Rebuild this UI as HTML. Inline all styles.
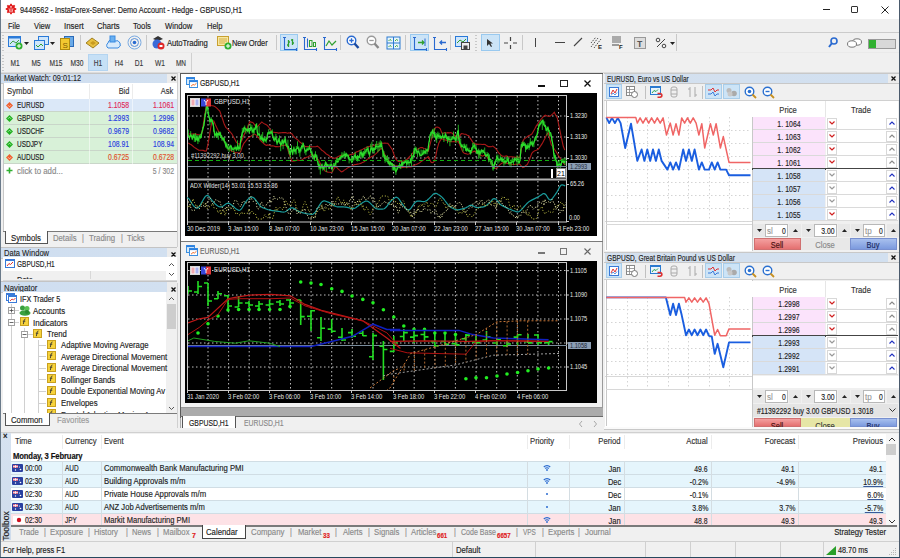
<!DOCTYPE html><html><head><meta charset="utf-8"><style>
*{margin:0;padding:0;box-sizing:border-box}
html,body{width:900px;height:558px;overflow:hidden;background:#f0f0f0;font-family:"Liberation Sans",sans-serif;font-size:8.5px;color:#1e1e1e}
.a{position:absolute}
.t{position:absolute;white-space:nowrap;line-height:10px;-webkit-text-stroke:0.15px currentColor}
svg{position:absolute;overflow:visible}
</style></head><body><div class="a" style="left:0px;top:0px;width:900px;height:19px;background:#fff"></div>
<svg style="left:6px;top:4px" width="10" height="10" viewBox="0 0 10 10"><circle cx="5" cy="5" r="3.9" fill="#e01818"/><rect x="4.1" y="-0.2" width="1.8" height="2.6" fill="#e01818" transform="rotate(0 5 5)"/><rect x="4.1" y="-0.2" width="1.8" height="2.6" fill="#e01818" transform="rotate(45 5 5)"/><rect x="4.1" y="-0.2" width="1.8" height="2.6" fill="#e01818" transform="rotate(90 5 5)"/><rect x="4.1" y="-0.2" width="1.8" height="2.6" fill="#e01818" transform="rotate(135 5 5)"/><rect x="4.1" y="-0.2" width="1.8" height="2.6" fill="#e01818" transform="rotate(180 5 5)"/><rect x="4.1" y="-0.2" width="1.8" height="2.6" fill="#e01818" transform="rotate(225 5 5)"/><rect x="4.1" y="-0.2" width="1.8" height="2.6" fill="#e01818" transform="rotate(270 5 5)"/><rect x="4.1" y="-0.2" width="1.8" height="2.6" fill="#e01818" transform="rotate(315 5 5)"/><rect x="4.3" y="2.2" width="1.4" height="1.4" fill="#fff"/><path d="M3 4.3L3.9 8M7 4.3L6.1 8M5 4.3V8.5" stroke="#ffd8d8" stroke-width="0.8"/></svg>
<div class="t" style="left:20px;top:5px;font-size:8.50px;color:#222;transform:scaleX(0.861);transform-origin:left">9449562 - InstaForex-Server: Demo Account - Hedge - GBPUSD,H1</div>
<div class="a" style="left:823px;top:9px;width:7px;height:1px;background:#222"></div>
<div class="a" style="left:851px;top:6px;width:7px;height:7px;border:1px solid #333;border-radius:1px"></div>
<svg style="left:881px;top:6px" width="8" height="8"><path d="M0.5 0.5L7.5 7.5M7.5 0.5L0.5 7.5" stroke="#222" stroke-width="1"/></svg>
<div class="a" style="left:0px;top:19px;width:900px;height:13px;background:#f0f0f0"></div>
<div class="t" style="left:8px;top:21px;font-size:8.50px;color:#222;transform:scaleX(0.878);transform-origin:left">File</div>
<div class="t" style="left:34px;top:21px;font-size:8.50px;color:#222;transform:scaleX(0.892);transform-origin:left">View</div>
<div class="t" style="left:64px;top:21px;font-size:8.50px;color:#222;transform:scaleX(0.929);transform-origin:left">Insert</div>
<div class="t" style="left:97px;top:21px;font-size:8.50px;color:#222;transform:scaleX(0.903);transform-origin:left">Charts</div>
<div class="t" style="left:133px;top:21px;font-size:8.50px;color:#222;transform:scaleX(0.903);transform-origin:left">Tools</div>
<div class="t" style="left:165px;top:21px;font-size:8.50px;color:#222;transform:scaleX(0.900);transform-origin:left">Window</div>
<div class="t" style="left:207px;top:21px;font-size:8.50px;color:#222;transform:scaleX(0.883);transform-origin:left">Help</div>
<div class="a" style="left:0px;top:32px;width:900px;height:1px;background:#cbcbcb"></div>
<div class="a" style="left:0px;top:33px;width:900px;height:19px;background:#f0f0f0"></div>
<div class="a" style="left:0px;top:52px;width:900px;height:1px;background:#eaeaea"></div>
<div class="a" style="left:0px;top:53px;width:900px;height:19px;background:#f0f0f0"></div>
<div class="a" style="left:88px;top:54px;width:20px;height:17px;background:#c6e0f6;border:1px solid #b4d4f0"></div>
<div class="t" style="left:-85.0px;width:200px;text-align:center;top:58px;font-size:8.50px;color:#3a3a3a;transform:scaleX(0.776);transform-origin:center">M1</div>
<div class="t" style="left:-64.3px;width:200px;text-align:center;top:58px;font-size:8.50px;color:#3a3a3a;transform:scaleX(0.776);transform-origin:center">M5</div>
<div class="t" style="left:-43.6px;width:200px;text-align:center;top:58px;font-size:8.50px;color:#3a3a3a;transform:scaleX(0.783);transform-origin:center">M15</div>
<div class="t" style="left:-22.900000000000006px;width:200px;text-align:center;top:58px;font-size:8.50px;color:#3a3a3a;transform:scaleX(0.783);transform-origin:center">M30</div>
<div class="t" style="left:-2.200000000000003px;width:200px;text-align:center;top:58px;font-size:8.50px;color:#3a3a3a;transform:scaleX(0.777);transform-origin:center">H1</div>
<div class="t" style="left:18.5px;width:200px;text-align:center;top:58px;font-size:8.50px;color:#3a3a3a;transform:scaleX(0.777);transform-origin:center">H4</div>
<div class="t" style="left:39.19999999999999px;width:200px;text-align:center;top:58px;font-size:8.50px;color:#3a3a3a;transform:scaleX(0.777);transform-origin:center">D1</div>
<div class="t" style="left:59.900000000000006px;width:200px;text-align:center;top:58px;font-size:8.50px;color:#3a3a3a;transform:scaleX(0.775);transform-origin:center">W1</div>
<div class="t" style="left:80.6px;width:200px;text-align:center;top:58px;font-size:8.50px;color:#3a3a3a;transform:scaleX(0.760);transform-origin:center">MN</div>
<div class="a" style="left:191px;top:53px;width:1px;height:19px;background:#d0d0d0"></div>
<div class="a" style="left:0px;top:72px;width:900px;height:1px;background:#dcdcdc"></div>
<div class="a" style="left:0px;top:0px;width:1px;height:558px;background:#6d7c8c"></div>
<div class="a" style="left:899px;top:0px;width:1px;height:558px;background:#6d7c8c"></div>
<div class="a" style="left:0px;top:557px;width:900px;height:1px;background:#2f6f7f"></div>
<div class="a" style="left:1px;top:73px;width:176px;height:1px;background:#c4c4c4"></div>
<div class="a" style="left:1px;top:74px;width:166px;height:9px;background:linear-gradient(90deg,#cfdef0,#d2e0f0)"></div>
<div class="a" style="left:167px;top:74px;width:10px;height:9px;background:#ececec"></div>
<div class="a" style="left:1px;top:83px;width:176px;height:1px;background:#c8c8c8"></div>
<div class="t" style="left:4px;top:73px;font-size:8.50px;color:#222;-webkit-text-stroke:0.1px #222;transform:scaleX(0.858);transform-origin:left">Market Watch: 09:01:12</div>
<svg style="left:171px;top:76px" width="5" height="5"><path d="M0.5 0.5L4.5 4.5M4.5 0.5L0.5 4.5" stroke="#111" stroke-width="1.3"/></svg>
<div class="a" style="left:3px;top:83px;width:174px;height:148px;background:#fff;border-left:1px solid #c8c8c8"></div>
<div class="t" style="left:7px;top:86px;font-size:8.50px;color:#333;transform:scaleX(0.912);transform-origin:left">Symbol</div>
<div class="t" style="right:771px;top:86px;font-size:8.50px;color:#333;transform:scaleX(0.862);transform-origin:right">Bid</div>
<div class="t" style="right:727px;top:86px;font-size:8.50px;color:#333;transform:scaleX(0.874);transform-origin:right">Ask</div>
<div class="a" style="left:89px;top:84px;width:1px;height:15px;background:#ececec"></div>
<div class="a" style="left:132px;top:84px;width:1px;height:15px;background:#ececec"></div>
<div class="a" style="left:4px;top:99px;width:173px;height:13px;background:#dbe8f8;border-bottom:1px solid #c9d6c9"></div>
<div class="a" style="left:89px;top:99px;width:1px;height:13px;background:rgba(255,255,255,0.5)"></div>
<div class="a" style="left:132px;top:99px;width:1px;height:13px;background:rgba(255,255,255,0.5)"></div>
<svg style="left:6px;top:102px" width="7" height="7"><path d="M3.5 0L7 3.5L3.5 7L0 3.5Z" fill="#f06030"/><path d="M2 3.2L3.5 4.8L5 3.2" stroke="#fbd0c0" stroke-width="0.8" fill="none"/></svg>
<div class="t" style="left:17px;top:100px;font-size:8.50px;color:#222;transform:scaleX(0.760);transform-origin:left">EURUSD</div>
<div class="t" style="right:771px;top:100px;font-size:8.50px;color:#e02858;transform:scaleX(0.805);transform-origin:right">1.1058</div>
<div class="t" style="right:726px;top:100px;font-size:8.50px;color:#e02858;transform:scaleX(0.805);transform-origin:right">1.1061</div>
<div class="a" style="left:4px;top:112px;width:173px;height:13px;background:#d8f1d8;border-bottom:1px solid #c9d6c9"></div>
<div class="a" style="left:89px;top:112px;width:1px;height:13px;background:rgba(255,255,255,0.5)"></div>
<div class="a" style="left:132px;top:112px;width:1px;height:13px;background:rgba(255,255,255,0.5)"></div>
<svg style="left:6px;top:115px" width="7" height="7"><path d="M3.5 0L7 3.5L3.5 7L0 3.5Z" fill="#20b020"/><path d="M2 3.8L3.5 2.2L5 3.8" stroke="#c0f0c0" stroke-width="0.8" fill="none"/></svg>
<div class="t" style="left:17px;top:113px;font-size:8.50px;color:#222;transform:scaleX(0.760);transform-origin:left">GBPUSD</div>
<div class="t" style="right:771px;top:113px;font-size:8.50px;color:#2a3ee0;transform:scaleX(0.805);transform-origin:right">1.2993</div>
<div class="t" style="right:726px;top:113px;font-size:8.50px;color:#2a3ee0;transform:scaleX(0.805);transform-origin:right">1.2996</div>
<div class="a" style="left:4px;top:125px;width:173px;height:13px;background:#d8f1d8;border-bottom:1px solid #c9d6c9"></div>
<div class="a" style="left:89px;top:125px;width:1px;height:13px;background:rgba(255,255,255,0.5)"></div>
<div class="a" style="left:132px;top:125px;width:1px;height:13px;background:rgba(255,255,255,0.5)"></div>
<svg style="left:6px;top:128px" width="7" height="7"><path d="M3.5 0L7 3.5L3.5 7L0 3.5Z" fill="#20b020"/><path d="M2 3.8L3.5 2.2L5 3.8" stroke="#c0f0c0" stroke-width="0.8" fill="none"/></svg>
<div class="t" style="left:17px;top:126px;font-size:8.50px;color:#222;transform:scaleX(0.760);transform-origin:left">USDCHF</div>
<div class="t" style="right:771px;top:126px;font-size:8.50px;color:#2a3ee0;transform:scaleX(0.805);transform-origin:right">0.9679</div>
<div class="t" style="right:726px;top:126px;font-size:8.50px;color:#2a3ee0;transform:scaleX(0.805);transform-origin:right">0.9682</div>
<div class="a" style="left:4px;top:138px;width:173px;height:13px;background:#d8f1d8;border-bottom:1px solid #c9d6c9"></div>
<div class="a" style="left:89px;top:138px;width:1px;height:13px;background:rgba(255,255,255,0.5)"></div>
<div class="a" style="left:132px;top:138px;width:1px;height:13px;background:rgba(255,255,255,0.5)"></div>
<svg style="left:6px;top:141px" width="7" height="7"><path d="M3.5 0L7 3.5L3.5 7L0 3.5Z" fill="#20b020"/><path d="M2 3.8L3.5 2.2L5 3.8" stroke="#c0f0c0" stroke-width="0.8" fill="none"/></svg>
<div class="t" style="left:17px;top:139px;font-size:8.50px;color:#222;transform:scaleX(0.760);transform-origin:left">USDJPY</div>
<div class="t" style="right:771px;top:139px;font-size:8.50px;color:#2a3ee0;transform:scaleX(0.805);transform-origin:right">108.91</div>
<div class="t" style="right:726px;top:139px;font-size:8.50px;color:#2a3ee0;transform:scaleX(0.805);transform-origin:right">108.94</div>
<div class="a" style="left:4px;top:151px;width:173px;height:13px;background:#d8f1d8;border-bottom:1px solid #c9d6c9"></div>
<div class="a" style="left:89px;top:151px;width:1px;height:13px;background:rgba(255,255,255,0.5)"></div>
<div class="a" style="left:132px;top:151px;width:1px;height:13px;background:rgba(255,255,255,0.5)"></div>
<svg style="left:6px;top:154px" width="7" height="7"><path d="M3.5 0L7 3.5L3.5 7L0 3.5Z" fill="#f06030"/><path d="M2 3.2L3.5 4.8L5 3.2" stroke="#fbd0c0" stroke-width="0.8" fill="none"/></svg>
<div class="t" style="left:17px;top:152px;font-size:8.50px;color:#222;transform:scaleX(0.760);transform-origin:left">AUDUSD</div>
<div class="t" style="right:771px;top:152px;font-size:8.50px;color:#e0502a;transform:scaleX(0.805);transform-origin:right">0.6725</div>
<div class="t" style="right:726px;top:152px;font-size:8.50px;color:#e0502a;transform:scaleX(0.805);transform-origin:right">0.6728</div>
<svg style="left:6px;top:167px" width="7" height="7"><path d="M3.5 0.5V6.5M0.5 3.5H6.5" stroke="#30b030" stroke-width="1.6"/></svg>
<div class="t" style="left:17px;top:166px;font-size:8.50px;color:#8a8a8a;transform:scaleX(0.926);transform-origin:left">click to add...</div>
<div class="t" style="right:726px;top:166px;font-size:8.50px;color:#8a8a8a;transform:scaleX(0.814);transform-origin:right">5 / 302</div>
<div class="a" style="left:3px;top:231px;width:174px;height:16px;background:#f0f0f0"></div>
<div class="a" style="left:3px;top:231px;width:174px;height:1px;background:#7a7a7a"></div>
<div class="a" style="left:5px;top:231px;width:43px;height:13px;background:#fff;border:1px solid #555;border-top:none"></div>
<div class="t" style="left:11px;top:233px;font-size:8.50px;color:#222;transform:scaleX(0.917);transform-origin:left">Symbols</div>
<div class="t" style="left:53px;top:233px;font-size:8.50px;color:#8a8a8a;transform:scaleX(0.905);transform-origin:left">Details</div>
<div class="t" style="left:82px;top:233px;font-size:8.50px;color:#888;transform:scaleX(0.850);transform-origin:left">|</div>
<div class="t" style="left:89px;top:233px;font-size:8.50px;color:#8a8a8a;transform:scaleX(0.916);transform-origin:left">Trading</div>
<div class="t" style="left:121px;top:233px;font-size:8.50px;color:#888;transform:scaleX(0.850);transform-origin:left">|</div>
<div class="t" style="left:127px;top:233px;font-size:8.50px;color:#8a8a8a;transform:scaleX(0.900);transform-origin:left">Ticks</div>
<div class="a" style="left:177px;top:73px;width:1px;height:174px;background:#d0d0d0"></div>
<div class="a" style="left:1px;top:247px;width:176px;height:1px;background:#c4c4c4"></div>
<div class="a" style="left:1px;top:248px;width:166px;height:10px;background:linear-gradient(90deg,#cfdef0,#d2e0f0)"></div>
<div class="a" style="left:167px;top:248px;width:10px;height:10px;background:#ececec"></div>
<div class="a" style="left:1px;top:258px;width:176px;height:1px;background:#c8c8c8"></div>
<div class="t" style="left:4px;top:248px;font-size:8.50px;color:#222;-webkit-text-stroke:0.1px #222;transform:scaleX(0.892);transform-origin:left">Data Window</div>
<svg style="left:171px;top:252px" width="5" height="5"><path d="M0.5 0.5L4.5 4.5M4.5 0.5L0.5 4.5" stroke="#111" stroke-width="1.3"/></svg>
<div class="a" style="left:3px;top:257px;width:174px;height:23px;background:#fff"></div>
<svg style="left:5px;top:259px" width="10" height="9"><rect x="0.5" y="0.5" width="9" height="8" fill="#fff" stroke="#3a7ad8"/><rect x="0.5" y="0.5" width="9" height="1.5" fill="#3a7ad8"/><path d="M2 7L4 4.5L5.5 5.5L8 3" stroke="#e03030" stroke-width="1" fill="none"/></svg>
<div class="t" style="left:17px;top:259px;font-size:8.50px;color:#222;transform:scaleX(0.768);transform-origin:left">GBPUSD,H1</div>
<div class="a" style="left:3px;top:271px;width:163px;height:9px;background:#f0f0f0"></div>
<div class="a" style="left:90px;top:271px;width:1px;height:9px;background:#d8d8d8"></div>
<div class="t" style="left:17px;top:275px;font-size:8.50px;color:#222;transform:scaleX(0.885);transform-origin:left">Date</div>
<div class="a" style="left:3px;top:279px;width:163px;height:4px;background:#f0f0f0"></div>
<div class="a" style="left:3px;top:280px;width:174px;height:1px;background:#d8d8d8"></div>
<svg style="left:168px;top:262px" width="7" height="16"><path d="M1 4L3.5 1.5L6 4M1 11L3.5 13.5L6 11" stroke="#444" stroke-width="0.9" fill="none"/></svg>
<div class="a" style="left:1px;top:281px;width:176px;height:1px;background:#c4c4c4"></div>
<div class="a" style="left:1px;top:282px;width:166px;height:10px;background:linear-gradient(90deg,#cfdef0,#d2e0f0)"></div>
<div class="a" style="left:167px;top:282px;width:10px;height:10px;background:#ececec"></div>
<div class="a" style="left:1px;top:292px;width:176px;height:1px;background:#c8c8c8"></div>
<div class="t" style="left:4px;top:283px;font-size:8.50px;color:#222;-webkit-text-stroke:0.1px #222;transform:scaleX(0.918);transform-origin:left">Navigator</div>
<svg style="left:171px;top:287px" width="5" height="5"><path d="M0.5 0.5L4.5 4.5M4.5 0.5L0.5 4.5" stroke="#111" stroke-width="1.3"/></svg>
<div class="a" style="left:3px;top:292px;width:174px;height:121px;background:#fff"></div>
<div class="a" style="left:166px;top:292px;width:11px;height:121px;background:#f0f0f0"></div>
<div class="a" style="left:167px;top:304px;width:9px;height:25px;background:#cdcdcd"></div>
<svg style="left:168px;top:296px" width="7" height="5"><path d="M1 4L3.5 1.5L6 4" stroke="#444" stroke-width="0.9" fill="none"/></svg>
<svg style="left:168px;top:406px" width="7" height="5"><path d="M1 1L3.5 3.5L6 1" stroke="#444" stroke-width="0.9" fill="none"/></svg>
<div class="a" style="left:11px;top:304px;width:1px;height:109px;background:#d0d0d0"></div>
<div class="a" style="left:24px;top:328px;width:1px;height:85px;background:#d0d0d0"></div>
<div class="a" style="left:38px;top:340px;width:1px;height:73px;background:#d0d0d0"></div>
<svg style="left:6px;top:293px" width="11" height="10"><rect x="0.5" y="0.5" width="8" height="7" fill="#fff" stroke="#3a7ad8"/><rect x="0.5" y="0.5" width="8" height="1.5" fill="#3a7ad8"/><rect x="2.5" y="2.5" width="8" height="7" fill="#fff" stroke="#3a7ad8"/><rect x="2.5" y="2.5" width="8" height="1.5" fill="#3a7ad8"/><path d="M4 8L6 6L7.5 7L9.5 5" stroke="#e03030" stroke-width="0.9" fill="none"/></svg>
<div class="t" style="left:20px;top:294px;font-size:8.50px;color:#222;transform:scaleX(0.852);transform-origin:left">IFX Trader 5</div>
<div class="a" style="left:8px;top:307px;width:7px;height:7px;background:#fff;border:1px solid #a0a0a0"></div>
<svg style="left:8px;top:307px" width="7" height="7"><path d="M1.5 3.5H5.5M3.5 1.5V5.5" stroke="#444" stroke-width="0.8"/></svg>
<div class="a" style="left:15px;top:310px;width:4px;height:1px;background:#d0d0d0"></div>
<svg style="left:19px;top:305px" width="12" height="11"><circle cx="3.5" cy="3" r="2.5" fill="#3aa040"/><circle cx="8" cy="3.5" r="2.5" fill="#5ac050"/><ellipse cx="6" cy="8" rx="5.5" ry="2.8" fill="#3aa040"/><circle cx="8" cy="7" r="2" fill="#2a8a30"/></svg>
<div class="t" style="left:33px;top:306px;font-size:8.50px;color:#222;transform:scaleX(0.919);transform-origin:left">Accounts</div>
<div class="a" style="left:8px;top:319px;width:7px;height:7px;background:#fff;border:1px solid #a0a0a0"></div>
<svg style="left:8px;top:319px" width="7" height="7"><path d="M1.5 3.5H5.5" stroke="#444" stroke-width="0.8"/></svg>
<div class="a" style="left:15px;top:322px;width:4px;height:1px;background:#d0d0d0"></div>
<svg style="left:20px;top:317px" width="9" height="9"><rect x="0.5" y="0.5" width="8" height="8" fill="#f7d33c" stroke="#c8a020"/><path d="M5.5 2C4.5 2 4.3 2.6 4.1 3.5L3.3 7.2M2.8 4.2H5.3" stroke="#333" stroke-width="0.9" fill="none"/></svg>
<div class="t" style="left:33px;top:318px;font-size:8.50px;color:#222;transform:scaleX(0.938);transform-origin:left">Indicators</div>
<div class="a" style="left:21px;top:331px;width:7px;height:7px;background:#fff;border:1px solid #a0a0a0"></div>
<svg style="left:21px;top:331px" width="7" height="7"><path d="M1.5 3.5H5.5" stroke="#444" stroke-width="0.8"/></svg>
<div class="a" style="left:28px;top:334px;width:5px;height:1px;background:#d0d0d0"></div>
<svg style="left:33px;top:329px" width="9" height="9"><rect x="0.5" y="0.5" width="8" height="8" fill="#f7d33c" stroke="#c8a020"/><path d="M5.5 2C4.5 2 4.3 2.6 4.1 3.5L3.3 7.2M2.8 4.2H5.3" stroke="#333" stroke-width="0.9" fill="none"/></svg>
<div class="t" style="left:47px;top:329px;font-size:8.50px;color:#222;transform:scaleX(0.906);transform-origin:left">Trend</div>
<div class="a" style="left:38px;top:345px;width:8px;height:1px;background:#d0d0d0"></div>
<svg style="left:47px;top:340px" width="9" height="9"><rect x="0.5" y="0.5" width="8" height="8" fill="#f7d33c" stroke="#c8a020"/><path d="M5.5 2C4.5 2 4.3 2.6 4.1 3.5L3.3 7.2M2.8 4.2H5.3" stroke="#333" stroke-width="0.9" fill="none"/></svg>
<div class="t" style="left:61px;top:340px;font-size:8.50px;color:#222;transform:scaleX(0.909);transform-origin:left">Adaptive Moving Average</div>
<div class="a" style="left:38px;top:356px;width:8px;height:1px;background:#d0d0d0"></div>
<svg style="left:47px;top:351px" width="9" height="9"><rect x="0.5" y="0.5" width="8" height="8" fill="#f7d33c" stroke="#c8a020"/><path d="M5.5 2C4.5 2 4.3 2.6 4.1 3.5L3.3 7.2M2.8 4.2H5.3" stroke="#333" stroke-width="0.9" fill="none"/></svg>
<div class="t" style="left:61px;top:352px;font-size:8.50px;color:#222;transform:scaleX(0.915);transform-origin:left">Average Directional Movement</div>
<div class="a" style="left:38px;top:368px;width:8px;height:1px;background:#d0d0d0"></div>
<svg style="left:47px;top:363px" width="9" height="9"><rect x="0.5" y="0.5" width="8" height="8" fill="#f7d33c" stroke="#c8a020"/><path d="M5.5 2C4.5 2 4.3 2.6 4.1 3.5L3.3 7.2M2.8 4.2H5.3" stroke="#333" stroke-width="0.9" fill="none"/></svg>
<div class="t" style="left:61px;top:363px;font-size:8.50px;color:#222;transform:scaleX(0.915);transform-origin:left">Average Directional Movement</div>
<div class="a" style="left:38px;top:379px;width:8px;height:1px;background:#d0d0d0"></div>
<svg style="left:47px;top:374px" width="9" height="9"><rect x="0.5" y="0.5" width="8" height="8" fill="#f7d33c" stroke="#c8a020"/><path d="M5.5 2C4.5 2 4.3 2.6 4.1 3.5L3.3 7.2M2.8 4.2H5.3" stroke="#333" stroke-width="0.9" fill="none"/></svg>
<div class="t" style="left:61px;top:375px;font-size:8.50px;color:#222;transform:scaleX(0.910);transform-origin:left">Bollinger Bands</div>
<div class="a" style="left:38px;top:391px;width:8px;height:1px;background:#d0d0d0"></div>
<svg style="left:47px;top:386px" width="9" height="9"><rect x="0.5" y="0.5" width="8" height="8" fill="#f7d33c" stroke="#c8a020"/><path d="M5.5 2C4.5 2 4.3 2.6 4.1 3.5L3.3 7.2M2.8 4.2H5.3" stroke="#333" stroke-width="0.9" fill="none"/></svg>
<div class="t" style="left:61px;top:386px;font-size:8.50px;color:#222;transform:scaleX(0.904);transform-origin:left">Double Exponential Moving Av</div>
<div class="a" style="left:38px;top:403px;width:8px;height:1px;background:#d0d0d0"></div>
<svg style="left:47px;top:398px" width="9" height="9"><rect x="0.5" y="0.5" width="8" height="8" fill="#f7d33c" stroke="#c8a020"/><path d="M5.5 2C4.5 2 4.3 2.6 4.1 3.5L3.3 7.2M2.8 4.2H5.3" stroke="#333" stroke-width="0.9" fill="none"/></svg>
<div class="t" style="left:61px;top:398px;font-size:8.50px;color:#222;transform:scaleX(0.923);transform-origin:left">Envelopes</div>
<div class="a" style="left:38px;top:414px;width:8px;height:1px;background:#d0d0d0"></div>
<svg style="left:47px;top:409px" width="9" height="9"><rect x="0.5" y="0.5" width="8" height="8" fill="#f7d33c" stroke="#c8a020"/><path d="M5.5 2C4.5 2 4.3 2.6 4.1 3.5L3.3 7.2M2.8 4.2H5.3" stroke="#333" stroke-width="0.9" fill="none"/></svg>
<div class="t" style="left:61px;top:410px;font-size:8.50px;color:#222;transform:scaleX(0.900);transform-origin:left">Fractal Adaptive Moving Av</div>
<div class="a" style="left:3px;top:413px;width:163px;height:0px;"></div>
<div class="a" style="left:3px;top:413px;width:174px;height:15px;background:#f0f0f0"></div>
<div class="a" style="left:3px;top:413px;width:174px;height:1px;background:#7a7a7a"></div>
<div class="a" style="left:5px;top:413px;width:45px;height:13px;background:#fff;border:1px solid #555;border-top:none"></div>
<div class="t" style="left:11px;top:415px;font-size:8.50px;color:#222;transform:scaleX(0.916);transform-origin:left">Common</div>
<div class="t" style="left:57px;top:415px;font-size:8.50px;color:#9a9a9a;transform:scaleX(0.922);transform-origin:left">Favorites</div>
<div class="a" style="left:177px;top:283px;width:1px;height:145px;background:#d0d0d0"></div>
<div class="a" style="left:180px;top:73px;width:423px;height:358px;background:#ababab"></div>
<div class="a" style="left:180px;top:73px;width:423px;height:1px;background:#5a5a5a"></div>
<div class="a" style="left:180px;top:73px;width:1px;height:345px;background:#5a5a5a"></div>
<div class="a" style="left:181px;top:74px;width:421px;height:167px;background:#fff"></div>
<div class="a" style="left:602px;top:74px;width:1px;height:168px;background:#9a9a9a"></div>
<div class="a" style="left:181px;top:241px;width:422px;height:1px;background:#7a7a7a"></div>
<svg style="left:186px;top:77px" width="12" height="11"><rect x="0.5" y="0.5" width="8" height="7" fill="#d8ecfb" stroke="#3c8fe0"/><rect x="0.5" y="0.5" width="8" height="1.6" fill="#2a7fe0"/><rect x="3.5" y="3.5" width="8" height="7" fill="#fff" stroke="#3c8fe0"/><rect x="3.5" y="3.5" width="8" height="1.6" fill="#2a7fe0"/><path d="M5 9.2L7 7.5L8.5 8L10.5 6.2" stroke="#f07030" stroke-width="1" fill="none"/></svg>
<div class="t" style="left:200px;top:78px;font-size:8.50px;color:#222;;transform:scaleX(0.807);transform-origin:left">GBPUSD,H1</div>
<div class="a" style="left:538px;top:85px;width:7px;height:2px;background:#111"></div>
<div class="a" style="left:560px;top:80px;width:8px;height:7px;border:1.2px solid #222"></div>
<svg style="left:584px;top:80px" width="7" height="7"><path d="M0.5 0.5L6.5 6.5M6.5 0.5L0.5 6.5" stroke="#111" stroke-width="1.3"/></svg>
<div class="a" style="left:185px;top:93px;width:412px;height:143px;background:#000"></div>
<div class="a" style="left:181px;top:242px;width:421px;height:166px;background:#f2f2f2"></div>
<div class="a" style="left:602px;top:242px;width:1px;height:166px;background:#9a9a9a"></div>
<div class="a" style="left:181px;top:407px;width:422px;height:1px;background:#9a9a9a"></div>
<svg style="left:186px;top:245px" width="12" height="11"><rect x="0.5" y="0.5" width="8" height="7" fill="#d8ecfb" stroke="#3c8fe0"/><rect x="0.5" y="0.5" width="8" height="1.6" fill="#2a7fe0"/><rect x="3.5" y="3.5" width="8" height="7" fill="#fff" stroke="#3c8fe0"/><rect x="3.5" y="3.5" width="8" height="1.6" fill="#2a7fe0"/><path d="M5 9.2L7 7.5L8.5 8L10.5 6.2" stroke="#f07030" stroke-width="1" fill="none"/></svg>
<div class="t" style="left:200px;top:246px;font-size:8.50px;color:#6a6a6a;;transform:scaleX(0.807);transform-origin:left">EURUSD,H1</div>
<div class="a" style="left:538px;top:252px;width:7px;height:1.5px;background:#777"></div>
<div class="a" style="left:560px;top:248px;width:7px;height:7px;border:1px solid #777"></div>
<svg style="left:584px;top:248px" width="7" height="7"><path d="M0.5 0.5L6.5 6.5M6.5 0.5L0.5 6.5" stroke="#666" stroke-width="1.1"/></svg>
<div class="a" style="left:185px;top:261px;width:412px;height:142px;background:#000"></div>
<div class="a" style="left:180px;top:416px;width:423px;height:1px;background:#6a6a6a"></div>
<div class="a" style="left:181px;top:417px;width:422px;height:14px;background:#f0f0f0"></div>
<div class="a" style="left:182px;top:416px;width:54px;height:13px;background:#fff;border:1px solid #555;border-top:none"></div>
<div class="t" style="left:189px;top:418px;font-size:8.50px;color:#222;;transform:scaleX(0.807);transform-origin:left">GBPUSD,H1</div>
<div class="t" style="left:244px;top:418px;font-size:8.50px;color:#8a8a8a;;transform:scaleX(0.807);transform-origin:left">EURUSD,H1</div>
<svg style="left:578px;top:420px" width="20" height="8"><path d="M4 1L1.5 4L4 7M16 1L18.5 4L16 7" stroke="#a8a8a8" stroke-width="1" fill="none"/></svg>
<div class="a" style="left:603px;top:73px;width:1px;height:358px;background:#f0f0f0"></div>
<svg style="left:0;top:0" width="900" height="558"><line x1="208.0" y1="96" x2="208.0" y2="178" stroke="#bfbfbf" stroke-width="1" stroke-dasharray="1.5,2.5"/><line x1="208.0" y1="181" x2="208.0" y2="222" stroke="#bfbfbf" stroke-width="1" stroke-dasharray="1.5,2.5"/><line x1="228.6" y1="96" x2="228.6" y2="178" stroke="#bfbfbf" stroke-width="1" stroke-dasharray="1.5,2.5"/><line x1="228.6" y1="181" x2="228.6" y2="222" stroke="#bfbfbf" stroke-width="1" stroke-dasharray="1.5,2.5"/><line x1="249.2" y1="96" x2="249.2" y2="178" stroke="#bfbfbf" stroke-width="1" stroke-dasharray="1.5,2.5"/><line x1="249.2" y1="181" x2="249.2" y2="222" stroke="#bfbfbf" stroke-width="1" stroke-dasharray="1.5,2.5"/><line x1="269.9" y1="96" x2="269.9" y2="178" stroke="#bfbfbf" stroke-width="1" stroke-dasharray="1.5,2.5"/><line x1="269.9" y1="181" x2="269.9" y2="222" stroke="#bfbfbf" stroke-width="1" stroke-dasharray="1.5,2.5"/><line x1="290.5" y1="96" x2="290.5" y2="178" stroke="#bfbfbf" stroke-width="1" stroke-dasharray="1.5,2.5"/><line x1="290.5" y1="181" x2="290.5" y2="222" stroke="#bfbfbf" stroke-width="1" stroke-dasharray="1.5,2.5"/><line x1="311.1" y1="96" x2="311.1" y2="178" stroke="#bfbfbf" stroke-width="1" stroke-dasharray="1.5,2.5"/><line x1="311.1" y1="181" x2="311.1" y2="222" stroke="#bfbfbf" stroke-width="1" stroke-dasharray="1.5,2.5"/><line x1="331.7" y1="96" x2="331.7" y2="178" stroke="#bfbfbf" stroke-width="1" stroke-dasharray="1.5,2.5"/><line x1="331.7" y1="181" x2="331.7" y2="222" stroke="#bfbfbf" stroke-width="1" stroke-dasharray="1.5,2.5"/><line x1="352.3" y1="96" x2="352.3" y2="178" stroke="#bfbfbf" stroke-width="1" stroke-dasharray="1.5,2.5"/><line x1="352.3" y1="181" x2="352.3" y2="222" stroke="#bfbfbf" stroke-width="1" stroke-dasharray="1.5,2.5"/><line x1="373.0" y1="96" x2="373.0" y2="178" stroke="#bfbfbf" stroke-width="1" stroke-dasharray="1.5,2.5"/><line x1="373.0" y1="181" x2="373.0" y2="222" stroke="#bfbfbf" stroke-width="1" stroke-dasharray="1.5,2.5"/><line x1="393.6" y1="96" x2="393.6" y2="178" stroke="#bfbfbf" stroke-width="1" stroke-dasharray="1.5,2.5"/><line x1="393.6" y1="181" x2="393.6" y2="222" stroke="#bfbfbf" stroke-width="1" stroke-dasharray="1.5,2.5"/><line x1="414.2" y1="96" x2="414.2" y2="178" stroke="#bfbfbf" stroke-width="1" stroke-dasharray="1.5,2.5"/><line x1="414.2" y1="181" x2="414.2" y2="222" stroke="#bfbfbf" stroke-width="1" stroke-dasharray="1.5,2.5"/><line x1="434.8" y1="96" x2="434.8" y2="178" stroke="#bfbfbf" stroke-width="1" stroke-dasharray="1.5,2.5"/><line x1="434.8" y1="181" x2="434.8" y2="222" stroke="#bfbfbf" stroke-width="1" stroke-dasharray="1.5,2.5"/><line x1="455.4" y1="96" x2="455.4" y2="178" stroke="#bfbfbf" stroke-width="1" stroke-dasharray="1.5,2.5"/><line x1="455.4" y1="181" x2="455.4" y2="222" stroke="#bfbfbf" stroke-width="1" stroke-dasharray="1.5,2.5"/><line x1="476.1" y1="96" x2="476.1" y2="178" stroke="#bfbfbf" stroke-width="1" stroke-dasharray="1.5,2.5"/><line x1="476.1" y1="181" x2="476.1" y2="222" stroke="#bfbfbf" stroke-width="1" stroke-dasharray="1.5,2.5"/><line x1="496.7" y1="96" x2="496.7" y2="178" stroke="#bfbfbf" stroke-width="1" stroke-dasharray="1.5,2.5"/><line x1="496.7" y1="181" x2="496.7" y2="222" stroke="#bfbfbf" stroke-width="1" stroke-dasharray="1.5,2.5"/><line x1="517.3" y1="96" x2="517.3" y2="178" stroke="#bfbfbf" stroke-width="1" stroke-dasharray="1.5,2.5"/><line x1="517.3" y1="181" x2="517.3" y2="222" stroke="#bfbfbf" stroke-width="1" stroke-dasharray="1.5,2.5"/><line x1="537.9" y1="96" x2="537.9" y2="178" stroke="#bfbfbf" stroke-width="1" stroke-dasharray="1.5,2.5"/><line x1="537.9" y1="181" x2="537.9" y2="222" stroke="#bfbfbf" stroke-width="1" stroke-dasharray="1.5,2.5"/><line x1="558.5" y1="96" x2="558.5" y2="178" stroke="#bfbfbf" stroke-width="1" stroke-dasharray="1.5,2.5"/><line x1="558.5" y1="181" x2="558.5" y2="222" stroke="#bfbfbf" stroke-width="1" stroke-dasharray="1.5,2.5"/><line x1="188" y1="116" x2="567" y2="116" stroke="#bfbfbf" stroke-width="1" stroke-dasharray="1.5,2.5"/><line x1="188" y1="137" x2="567" y2="137" stroke="#bfbfbf" stroke-width="1" stroke-dasharray="1.5,2.5"/><line x1="188" y1="158" x2="567" y2="158" stroke="#bfbfbf" stroke-width="1" stroke-dasharray="1.5,2.5"/><rect x="187.5" y="95.5" width="379" height="84" fill="none" stroke="#c8c8c8" stroke-width="1"/><rect x="187.5" y="179.5" width="379" height="42.5" fill="none" stroke="#c8c8c8" stroke-width="1"/><line x1="187" y1="179.5" x2="567" y2="179.5" stroke="#b0b0b0" stroke-width="2"/><path d="M188.3 133.8 L189.8 134.0 L191.3 134.0 L192.8 134.0 L194.3 133.9 L195.8 134.1 L197.3 134.5 L198.8 134.7 L200.3 135.0 L201.8 133.9 L203.3 124.3 L204.8 114.6 L206.3 106.5 L207.8 104.0 L209.3 104.8 L210.8 105.5 L212.3 105.7 L213.8 106.0 L215.3 106.9 L216.8 108.2 L218.3 109.7 L219.8 111.1 L221.3 115.4 L222.8 119.7 L224.3 124.3 L225.8 127.3 L227.3 128.6 L228.8 130.5 L230.3 132.0 L231.8 133.8 L233.3 136.5 L234.8 139.2 L236.3 142.2 L237.8 143.5 L239.3 144.4 L240.8 142.8 L242.3 139.2 L243.8 135.5 L245.3 131.9 L246.8 128.9 L248.3 125.1 L249.8 121.7 L251.3 122.1 L252.8 122.4 L254.3 124.3 L255.8 127.0 L257.3 126.9 L258.8 125.2 L260.3 123.5 L261.8 121.9 L263.3 123.1 L264.8 124.1 L266.3 124.7 L267.8 126.0 L269.3 128.0 L270.8 130.4 L272.3 132.1 L273.8 132.3 L275.3 132.5 L276.8 132.5 L278.3 133.1 L279.8 132.9 L281.3 132.8 L282.8 132.6 L284.3 132.5 L285.8 132.6 L287.3 133.2 L288.8 132.9 L290.3 133.0 L291.8 133.7 L293.3 135.9 L294.8 137.6 L296.3 138.8 L297.8 139.9 L299.3 141.7 L300.8 142.8 L302.3 143.8 L303.8 145.4 L305.3 146.6 L306.8 146.5 L308.3 146.5 L309.8 146.5 L311.3 146.9 L312.8 146.8 L314.3 146.7 L315.8 146.7 L317.3 146.2 L318.8 147.1 L320.3 148.7 L321.8 150.2 L323.3 151.1 L324.8 152.5 L326.3 154.0 L327.8 154.7 L329.3 155.9 L330.8 157.4 L332.3 157.7 L333.8 158.2 L335.3 158.1 L336.8 157.2 L338.3 156.5 L339.8 155.8 L341.3 155.0 L342.8 155.2 L344.3 155.1 L345.8 155.1 L347.3 155.6 L348.8 155.5 L350.3 154.6 L351.8 154.3 L353.3 154.1 L354.8 153.2 L356.3 152.1 L357.8 151.4 L359.3 150.7 L360.8 149.9 L362.3 149.6 L363.8 148.5 L365.3 148.1 L366.8 147.2 L368.3 146.6 L369.8 146.4 L371.3 146.2 L372.8 145.8 L374.3 145.2 L375.8 144.7 L377.3 144.3 L378.8 144.0 L380.3 143.4 L381.8 143.1 L383.3 143.2 L384.8 143.1 L386.3 143.3 L387.8 143.3 L389.3 145.3 L390.8 147.5 L392.3 149.6 L393.8 154.1 L395.3 158.3 L396.8 160.1 L398.3 161.4 L399.8 161.5 L401.3 161.9 L402.8 161.0 L404.3 160.9 L405.8 160.3 L407.3 159.0 L408.8 157.5 L410.3 155.9 L411.8 154.5 L413.3 152.3 L414.8 149.9 L416.3 149.7 L417.8 149.0 L419.3 148.2 L420.8 147.5 L422.3 147.6 L423.8 148.5 L425.3 148.8 L426.8 149.9 L428.3 151.3 L429.8 145.4 L431.3 139.9 L432.8 134.6 L434.3 129.1 L435.8 127.2 L437.3 127.0 L438.8 127.5 L440.3 128.8 L441.8 133.1 L443.3 133.3 L444.8 132.5 L446.3 133.0 L447.8 132.6 L449.3 132.9 L450.8 132.6 L452.3 133.3 L453.8 134.8 L455.3 135.8 L456.8 137.0 L458.3 138.3 L459.8 135.9 L461.3 133.6 L462.8 133.7 L464.3 134.2 L465.8 134.3 L467.3 135.2 L468.8 135.7 L470.3 138.4 L471.8 140.6 L473.3 143.1 L474.8 143.6 L476.3 144.0 L477.8 144.4 L479.3 144.3 L480.8 144.2 L482.3 144.5 L483.8 144.3 L485.3 144.5 L486.8 145.8 L488.3 146.6 L489.8 146.6 L491.3 146.7 L492.8 146.1 L494.3 147.2 L495.8 148.7 L497.3 150.8 L498.8 153.0 L500.3 154.4 L501.8 155.9 L503.3 156.2 L504.8 156.2 L506.3 155.9 L507.8 156.6 L509.3 156.8 L510.8 156.8 L512.3 156.9 L513.8 157.0 L515.3 157.4 L516.8 156.9 L518.3 157.2 L519.8 157.5 L521.3 149.6 L522.8 141.1 L524.3 138.8 L525.8 137.9 L527.3 136.7 L528.8 135.5 L530.3 135.0 L531.8 134.0 L533.3 131.4 L534.8 128.8 L536.3 125.9 L537.8 123.7 L539.3 121.6 L540.8 119.6 L542.3 117.8 L543.8 116.2 L545.3 115.1 L546.8 115.9 L548.3 116.2 L549.8 116.4 L551.3 115.2 L552.8 113.8 L554.3 112.3 L555.8 115.4 L557.3 117.9 L558.8 125.2 L560.3 132.4 L561.8 139.7 L563.3 146.3 L564.8 150.1" stroke="#a81818" stroke-width="1.1" fill="none"/><path d="M188.3 143.0 L189.8 144.0 L191.3 144.8 L192.8 146.0 L194.3 147.4 L195.8 148.3 L197.3 149.3 L198.8 150.2 L200.3 150.3 L201.8 150.2 L203.3 150.4 L204.8 151.1 L206.3 150.9 L207.8 144.8 L209.3 136.9 L210.8 127.1 L212.3 120.8 L213.8 121.1 L215.3 124.5 L216.8 127.7 L218.3 130.8 L219.8 133.4 L221.3 136.3 L222.8 138.7 L224.3 141.3 L225.8 144.3 L227.3 147.1 L228.8 149.5 L230.3 150.1 L231.8 151.2 L233.3 151.4 L234.8 152.6 L236.3 152.8 L237.8 152.8 L239.3 153.5 L240.8 151.3 L242.3 146.7 L243.8 143.4 L245.3 141.7 L246.8 139.7 L248.3 138.0 L249.8 137.1 L251.3 136.0 L252.8 134.9 L254.3 134.0 L255.8 134.6 L257.3 136.5 L258.8 137.8 L260.3 140.1 L261.8 141.9 L263.3 143.1 L264.8 144.5 L266.3 145.3 L267.8 144.9 L269.3 145.2 L270.8 146.0 L272.3 145.7 L273.8 146.0 L275.3 146.6 L276.8 146.5 L278.3 146.7 L279.8 146.5 L281.3 145.8 L282.8 145.4 L284.3 145.2 L285.8 145.1 L287.3 147.5 L288.8 152.9 L290.3 157.1 L291.8 161.1 L293.3 161.1 L294.8 160.9 L296.3 160.4 L297.8 160.0 L299.3 160.5 L300.8 160.4 L302.3 159.8 L303.8 158.2 L305.3 157.8 L306.8 157.2 L308.3 156.8 L309.8 155.6 L311.3 154.3 L312.8 155.1 L314.3 155.8 L315.8 157.5 L317.3 158.9 L318.8 160.4 L320.3 163.4 L321.8 166.4 L323.3 168.4 L324.8 170.9 L326.3 171.6 L327.8 172.1 L329.3 172.3 L330.8 172.5 L332.3 172.0 L333.8 169.1 L335.3 166.6 L336.8 167.4 L338.3 169.1 L339.8 170.3 L341.3 171.8 L342.8 171.4 L344.3 170.1 L345.8 169.4 L347.3 168.1 L348.8 167.3 L350.3 166.7 L351.8 166.2 L353.3 165.3 L354.8 164.6 L356.3 164.4 L357.8 164.1 L359.3 163.8 L360.8 163.4 L362.3 162.6 L363.8 161.9 L365.3 160.9 L366.8 159.6 L368.3 158.6 L369.8 157.8 L371.3 156.8 L372.8 156.0 L374.3 155.1 L375.8 153.9 L377.3 152.3 L378.8 150.5 L380.3 149.2 L381.8 148.5 L383.3 151.6 L384.8 154.4 L386.3 157.5 L387.8 160.2 L389.3 161.5 L390.8 162.9 L392.3 163.9 L393.8 165.4 L395.3 166.1 L396.8 165.9 L398.3 166.4 L399.8 167.5 L401.3 167.8 L402.8 167.4 L404.3 167.1 L405.8 167.2 L407.3 167.1 L408.8 166.9 L410.3 167.0 L411.8 166.7 L413.3 165.7 L414.8 165.0 L416.3 164.6 L417.8 163.8 L419.3 163.1 L420.8 161.8 L422.3 160.9 L423.8 159.9 L425.3 158.6 L426.8 157.8 L428.3 156.7 L429.8 159.8 L431.3 162.5 L432.8 162.6 L434.3 161.1 L435.8 155.9 L437.3 148.3 L438.8 143.1 L440.3 140.4 L441.8 138.5 L443.3 139.4 L444.8 139.9 L446.3 140.2 L447.8 141.1 L449.3 141.4 L450.8 141.7 L452.3 141.7 L453.8 141.6 L455.3 141.7 L456.8 141.7 L458.3 141.6 L459.8 145.0 L461.3 148.4 L462.8 152.0 L464.3 153.2 L465.8 153.6 L467.3 154.2 L468.8 154.0 L470.3 153.3 L471.8 152.2 L473.3 151.6 L474.8 151.2 L476.3 152.3 L477.8 153.4 L479.3 154.5 L480.8 155.3 L482.3 156.2 L483.8 155.5 L485.3 155.4 L486.8 156.6 L488.3 158.8 L489.8 160.7 L491.3 163.5 L492.8 166.2 L494.3 168.0 L495.8 168.4 L497.3 167.5 L498.8 165.8 L500.3 164.4 L501.8 163.2 L503.3 162.6 L504.8 162.6 L506.3 163.1 L507.8 163.4 L509.3 163.8 L510.8 164.1 L512.3 164.5 L513.8 164.7 L515.3 164.3 L516.8 164.3 L518.3 164.2 L519.8 164.2 L521.3 165.9 L522.8 167.5 L524.3 167.0 L525.8 165.5 L527.3 164.4 L528.8 161.3 L530.3 157.4 L531.8 153.4 L533.3 151.6 L534.8 150.7 L536.3 150.3 L537.8 149.6 L539.3 148.0 L540.8 145.6 L542.3 143.4 L543.8 140.5 L545.3 137.8 L546.8 134.3 L548.3 132.9 L549.8 139.2 L551.3 144.7 L552.8 146.7 L554.3 149.0 L555.8 151.3 L557.3 153.8 L558.8 156.2 L560.3 158.4 L561.8 160.4 L563.3 162.6 L564.8 164.9" stroke="#a81818" stroke-width="1.1" fill="none"/><path d="M188.3 134.7 L188.9 136.1 L189.5 137.7 L190.1 136.5 L190.7 135.0 L191.3 135.9 L191.9 137.1 L192.5 138.5 L193.1 136.3 L193.7 135.1 L194.3 137.1 L194.9 137.9 L195.5 139.7 L196.1 139.9 L196.7 138.6 L197.3 137.8 L197.9 141.1 L198.5 139.1 L199.1 137.5 L199.7 136.2 L200.3 137.2 L200.9 137.4 L201.5 134.2 L202.1 131.6 L202.7 129.3 L203.3 127.3 L203.9 125.1 L204.5 121.2 L205.1 115.0 L205.7 113.6 L206.3 108.2 L206.9 105.3 L207.5 101.1 L208.1 113.2 L208.7 116.4 L209.3 117.5 L209.9 122.0 L210.5 119.9 L211.1 120.9 L211.7 119.7 L212.3 121.3 L212.9 124.1 L213.5 126.2 L214.1 130.8 L214.7 134.9 L215.3 134.7 L215.9 135.1 L216.5 133.1 L217.1 135.7 L217.7 133.9 L218.3 134.5 L218.9 133.8 L219.5 134.6 L220.1 133.2 L220.7 135.5 L221.3 135.7 L221.9 138.1 L222.5 139.0 L223.1 139.3 L223.7 138.7 L224.3 141.0 L224.9 142.2 L225.5 145.0 L226.1 144.4 L226.7 145.9 L227.3 147.2 L227.9 148.2 L228.5 148.7 L229.1 148.4 L229.7 147.2 L230.3 145.9 L230.9 146.1 L231.5 147.3 L232.1 149.1 L232.7 149.2 L233.3 149.3 L233.9 148.9 L234.5 148.5 L235.1 147.6 L235.7 148.0 L236.3 149.5 L236.9 147.5 L237.5 146.0 L238.1 148.7 L238.7 147.8 L239.3 148.3 L239.9 148.5 L240.5 141.1 L241.1 139.1 L241.7 135.0 L242.3 132.6 L242.9 131.7 L243.5 130.0 L244.1 127.5 L244.7 127.7 L245.3 128.5 L245.9 129.9 L246.5 130.2 L247.1 129.5 L247.7 130.9 L248.3 129.0 L248.9 130.1 L249.5 131.2 L250.1 130.1 L250.7 127.6 L251.3 127.6 L251.9 129.2 L252.5 130.5 L253.1 132.6 L253.7 129.8 L254.3 129.1 L254.9 129.3 L255.5 127.9 L256.1 124.0 L256.7 126.2 L257.3 132.1 L257.9 134.7 L258.5 134.1 L259.1 134.0 L259.7 134.9 L260.3 138.6 L260.9 138.2 L261.5 137.6 L262.1 139.5 L262.7 138.6 L263.3 141.0 L263.9 139.2 L264.5 138.9 L265.1 140.3 L265.7 140.8 L266.3 139.6 L266.9 138.1 L267.5 134.2 L268.1 133.2 L268.7 132.6 L269.3 132.1 L269.9 133.1 L270.5 132.0 L271.1 132.7 L271.7 132.1 L272.3 133.8 L272.9 136.5 L273.5 138.7 L274.1 139.9 L274.7 139.0 L275.3 139.1 L275.9 137.8 L276.5 141.3 L277.1 143.0 L277.7 141.9 L278.3 141.2 L278.9 139.9 L279.5 141.1 L280.1 141.9 L280.7 145.0 L281.3 144.1 L281.9 142.4 L282.5 139.5 L283.1 143.1 L283.7 143.1 L284.3 140.6 L284.9 141.5 L285.5 139.4 L286.1 144.9 L286.7 144.7 L287.3 146.3 L287.9 147.3 L288.5 146.7 L289.1 150.7 L289.7 152.3 L290.3 154.8 L290.9 150.5 L291.5 149.0 L292.1 151.4 L292.7 153.3 L293.3 150.5 L293.9 148.6 L294.5 150.7 L295.1 151.6 L295.7 149.6 L296.3 148.9 L296.9 148.5 L297.5 147.6 L298.1 147.7 L298.7 150.0 L299.3 150.1 L299.9 151.7 L300.5 149.5 L301.1 148.2 L301.7 146.2 L302.3 146.8 L302.9 145.6 L303.5 144.5 L304.1 147.3 L304.7 149.8 L305.3 150.4 L305.9 151.4 L306.5 150.6 L307.1 149.1 L307.7 149.5 L308.3 149.2 L308.9 148.7 L309.5 148.0 L310.1 148.3 L310.7 150.7 L311.3 152.5 L311.9 152.9 L312.5 155.9 L313.1 156.2 L313.7 156.9 L314.3 158.2 L314.9 156.3 L315.5 154.1 L316.1 156.6 L316.7 156.3 L317.3 160.5 L317.9 162.3 L318.5 165.1 L319.1 167.1 L319.7 165.4 L320.3 167.9 L320.9 166.8 L321.5 166.1 L322.1 166.0 L322.7 167.5 L323.3 168.2 L323.9 168.7 L324.5 165.3 L325.1 165.0 L325.7 162.6 L326.3 164.3 L326.9 166.1 L327.5 165.2 L328.1 166.1 L328.7 166.5 L329.3 167.7 L329.9 166.0 L330.5 165.1 L331.1 164.7 L331.7 167.8 L332.3 168.2 L332.9 166.6 L333.5 166.2 L334.1 165.6 L334.7 165.3 L335.3 164.2 L335.9 162.8 L336.5 160.5 L337.1 159.7 L337.7 161.8 L338.3 161.0 L338.9 159.8 L339.5 158.6 L340.1 158.0 L340.7 157.8 L341.3 156.1 L341.9 156.3 L342.5 156.7 L343.1 155.7 L343.7 155.2 L344.3 154.6 L344.9 154.4 L345.5 156.8 L346.1 153.8 L346.7 155.1 L347.3 155.3 L347.9 155.4 L348.5 156.7 L349.1 159.3 L349.7 159.6 L350.3 159.8 L350.9 159.7 L351.5 160.6 L352.1 161.8 L352.7 160.2 L353.3 158.2 L353.9 156.7 L354.5 155.8 L355.1 154.8 L355.7 157.5 L356.3 157.7 L356.9 156.9 L357.5 158.6 L358.1 156.5 L358.7 157.1 L359.3 157.4 L359.9 154.3 L360.5 152.6 L361.1 152.4 L361.7 154.5 L362.3 156.0 L362.9 153.3 L363.5 154.7 L364.1 153.4 L364.7 152.6 L365.3 151.9 L365.9 151.6 L366.5 149.4 L367.1 149.2 L367.7 148.7 L368.3 150.5 L368.9 153.3 L369.5 155.4 L370.1 152.3 L370.7 148.9 L371.3 148.7 L371.9 147.7 L372.5 150.9 L373.1 150.5 L373.7 148.5 L374.3 149.5 L374.9 149.3 L375.5 146.4 L376.1 146.2 L376.7 146.5 L377.3 146.8 L377.9 147.1 L378.5 146.5 L379.1 146.8 L379.7 145.9 L380.3 144.9 L380.9 146.9 L381.5 143.2 L382.1 148.0 L382.7 150.4 L383.3 152.6 L383.9 155.7 L384.5 155.4 L385.1 158.9 L385.7 158.6 L386.3 159.8 L386.9 160.0 L387.5 160.8 L388.1 162.9 L388.7 162.1 L389.3 164.5 L389.9 163.0 L390.5 162.4 L391.1 164.5 L391.7 163.5 L392.3 164.2 L392.9 166.6 L393.5 168.4 L394.1 165.8 L394.7 167.7 L395.3 170.8 L395.9 171.7 L396.5 170.6 L397.1 169.0 L397.7 168.1 L398.3 166.2 L398.9 166.2 L399.5 165.9 L400.1 165.6 L400.7 166.8 L401.3 165.3 L401.9 162.8 L402.5 164.7 L403.1 162.8 L403.7 162.5 L404.3 162.6 L404.9 162.2 L405.5 161.0 L406.1 161.3 L406.7 164.4 L407.3 162.2 L407.9 161.5 L408.5 162.7 L409.1 162.6 L409.7 162.5 L410.3 162.4 L410.9 158.5 L411.5 157.8 L412.1 157.5 L412.7 156.7 L413.3 156.5 L413.9 153.8 L414.5 150.3 L415.1 148.5 L415.7 149.0 L416.3 150.3 L416.9 151.9 L417.5 151.9 L418.1 151.7 L418.7 151.4 L419.3 153.6 L419.9 155.0 L420.5 155.3 L421.1 155.3 L421.7 155.2 L422.3 154.1 L422.9 154.4 L423.5 152.3 L424.1 152.4 L424.7 151.7 L425.3 152.8 L425.9 151.0 L426.5 150.3 L427.1 150.1 L427.7 150.8 L428.3 147.9 L428.9 142.5 L429.5 140.0 L430.1 134.8 L430.7 134.8 L431.3 132.9 L431.9 132.6 L432.5 130.8 L433.1 133.3 L433.7 133.2 L434.3 132.7 L434.9 136.5 L435.5 136.4 L436.1 139.9 L436.7 137.5 L437.3 135.3 L437.9 134.7 L438.5 136.5 L439.1 136.0 L439.7 136.8 L440.3 137.6 L440.9 136.5 L441.5 137.7 L442.1 137.1 L442.7 135.5 L443.3 137.3 L443.9 137.8 L444.5 137.1 L445.1 135.6 L445.7 134.4 L446.3 137.4 L446.9 138.7 L447.5 137.7 L448.1 139.7 L448.7 138.4 L449.3 139.2 L449.9 139.6 L450.5 139.9 L451.1 139.6 L451.7 139.2 L452.3 137.4 L452.9 137.5 L453.5 137.3 L454.1 137.5 L454.7 138.2 L455.3 139.0 L455.9 140.6 L456.5 135.9 L457.1 134.7 L457.7 131.1 L458.3 130.7 L458.9 140.2 L459.5 141.2 L460.1 143.4 L460.7 143.8 L461.3 146.6 L461.9 145.6 L462.5 146.3 L463.1 146.9 L463.7 147.4 L464.3 147.2 L464.9 145.7 L465.5 148.1 L466.1 150.2 L466.7 150.0 L467.3 148.7 L467.9 149.8 L468.5 150.9 L469.1 150.6 L469.7 150.7 L470.3 152.7 L470.9 150.6 L471.5 150.3 L472.1 147.7 L472.7 147.3 L473.3 146.7 L473.9 145.6 L474.5 145.0 L475.1 147.9 L475.7 148.2 L476.3 149.0 L476.9 153.1 L477.5 152.8 L478.1 151.0 L478.7 152.7 L479.3 151.7 L479.9 154.5 L480.5 152.1 L481.1 151.8 L481.7 150.2 L482.3 151.1 L482.9 150.6 L483.5 151.9 L484.1 152.3 L484.7 152.4 L485.3 154.7 L485.9 156.0 L486.5 155.8 L487.1 154.6 L487.7 154.5 L488.3 156.6 L488.9 160.9 L489.5 159.8 L490.1 159.2 L490.7 160.0 L491.3 160.7 L491.9 161.9 L492.5 164.3 L493.1 168.4 L493.7 167.5 L494.3 165.1 L494.9 161.7 L495.5 161.6 L496.1 160.5 L496.7 158.1 L497.3 157.4 L497.9 158.3 L498.5 160.1 L499.1 160.3 L499.7 159.8 L500.3 158.8 L500.9 159.0 L501.5 158.8 L502.1 161.9 L502.7 159.2 L503.3 159.1 L503.9 161.3 L504.5 160.5 L505.1 162.5 L505.7 161.7 L506.3 161.7 L506.9 161.2 L507.5 159.7 L508.1 159.2 L508.7 163.0 L509.3 162.8 L509.9 162.6 L510.5 162.9 L511.1 162.4 L511.7 162.7 L512.3 161.1 L512.9 160.3 L513.5 161.4 L514.1 160.4 L514.7 158.7 L515.3 159.3 L515.9 159.3 L516.5 160.9 L517.1 160.0 L517.7 159.2 L518.3 159.9 L518.9 162.7 L519.5 162.1 L520.1 159.1 L520.7 151.7 L521.3 144.7 L521.9 144.5 L522.5 145.9 L523.1 142.7 L523.7 145.1 L524.3 144.7 L524.9 144.2 L525.5 147.6 L526.1 146.1 L526.7 148.2 L527.3 148.1 L527.9 145.6 L528.5 146.4 L529.1 147.3 L529.7 146.2 L530.3 142.5 L530.9 143.0 L531.5 143.3 L532.1 142.0 L532.7 145.0 L533.3 143.6 L533.9 142.5 L534.5 140.8 L535.1 138.5 L535.7 136.7 L536.3 136.1 L536.9 135.4 L537.5 132.4 L538.1 130.2 L538.7 126.3 L539.3 125.5 L539.9 123.9 L540.5 124.0 L541.1 122.3 L541.7 121.6 L542.3 121.8 L542.9 119.7 L543.5 124.2 L544.1 124.8 L544.7 125.9 L545.3 125.5 L545.9 128.6 L546.5 130.1 L547.1 129.8 L547.7 127.7 L548.3 128.7 L548.9 131.6 L549.5 132.3 L550.1 132.5 L550.7 133.4 L551.3 135.8 L551.9 139.9 L552.5 142.6 L553.1 146.3 L553.7 153.3 L554.3 156.8 L554.9 155.9 L555.5 158.4 L556.1 160.6 L556.7 162.5 L557.3 166.1 L557.9 165.0 L558.5 164.4 L559.1 164.1 L559.7 164.3 L560.3 166.2 L560.9 165.9 L561.5 162.7 L562.1 162.0 L562.7 160.8 L563.3 162.1 L563.9 161.7 L564.5 162.2 L565.1 161.1" stroke="#32e632" stroke-width="1.25" fill="none"/><path d="M188.3 129.5V136.7M189.5 136.2V139.8M190.7 131.1V136.1M191.9 134.6V139.6M193.1 134.5V138.1M194.3 134.2V141.9M195.5 133.2V141.9M196.7 135.1V139.7M197.9 135.2V144.0M199.1 135.5V142.1M200.3 133.7V139.0M201.5 132.8V137.5M202.7 127.3V131.0M203.9 122.4V126.2M205.1 113.2V116.8M206.3 104.0V110.8M207.5 99.2V102.6M208.7 112.0V117.6M209.9 119.8V125.2M211.1 117.1V122.6M212.3 119.5V123.0M213.5 122.4V131.7M214.7 131.3V137.9M215.9 132.9V136.7M217.1 132.9V137.6M218.3 131.4V139.7M219.5 131.8V135.6M220.7 132.4V137.9M221.9 135.5V140.8M223.1 137.0V141.2M224.3 137.3V142.8M225.5 141.4V147.5M226.7 142.5V148.6M227.9 143.9V150.5M229.1 146.2V152.0M230.3 144.6V149.7M231.5 145.5V151.4M232.7 147.5V150.5M233.9 147.1V153.6M235.1 145.5V149.4M236.3 148.0V150.8M237.5 140.3V149.7M238.7 145.3V151.1M239.9 144.6V150.5M241.1 136.8V140.8M242.3 127.9V137.3M243.5 128.5V132.6M244.7 125.5V131.9M245.9 128.3V133.7M247.1 128.4V131.2M248.3 124.6V131.9M249.5 129.1V133.7M250.7 123.7V131.0M251.9 125.1V132.6M253.1 127.6V136.6M254.3 127.3V133.6M255.5 126.4V129.7M256.7 123.0V128.3M257.9 133.1V136.1M259.1 126.2V135.9M260.3 136.7V140.3M261.5 134.4V140.1M262.7 132.0V141.4M263.9 137.5V142.6M265.1 137.2V141.5M266.3 137.3V142.9M267.5 132.3V139.4M268.7 129.2V134.6M269.9 131.8V134.7M271.1 130.3V134.0M272.3 129.3V136.1M273.5 136.8V140.4M274.7 136.4V141.8M275.9 133.6V139.9M277.1 139.4V145.0M278.3 137.9V142.5M279.5 135.5V143.8M280.7 142.9V151.2M281.9 139.8V144.9M283.1 142.0V149.2M284.3 137.9V142.3M285.5 136.4V143.1M286.7 143.2V146.7M287.9 139.7V149.2M289.1 148.3V154.2M290.3 153.6V158.5M291.5 145.2V150.7M292.7 149.4V155.0M293.9 146.5V150.3M295.1 149.1V154.4M296.3 146.0V154.4M297.5 141.3V148.8M298.7 146.3V153.2M299.9 147.7V156.8M301.1 147.1V151.5M302.3 142.4V149.3M303.5 142.7V145.7M304.7 147.8V153.3M305.9 150.1V155.2M307.1 147.3V151.3M308.3 146.7V150.8M309.5 144.8V149.9M310.7 149.3V152.4M311.9 150.6V156.5M313.1 154.5V159.5M314.3 153.7V159.9M315.5 151.3V156.7M316.7 154.5V160.8M317.9 160.6V165.4M319.1 163.5V169.8M320.3 165.6V174.5M321.5 163.7V168.6M322.7 163.6V170.6M323.9 167.5V170.1M325.1 162.4V168.2M326.3 162.4V172.1M327.5 163.8V166.7M328.7 164.1V168.9M329.9 163.8V168.9M331.1 161.8V166.3M332.3 165.2V171.7M333.5 163.1V167.2M334.7 162.9V166.6M335.9 159.9V166.5M337.1 157.7V161.0M338.3 158.0V162.4M339.5 156.7V160.2M340.7 156.0V160.3M341.9 152.2V158.3M343.1 152.7V158.2M344.3 151.1V157.0M345.5 154.9V158.4M346.7 153.1V156.8M347.9 154.0V158.5M349.1 157.2V163.4M350.3 158.6V161.2M351.5 155.6V163.1M352.7 157.9V161.5M353.9 155.5V160.4M355.1 151.8V159.7M356.3 156.3V160.3M357.5 155.0V161.5M358.7 155.9V159.9M359.9 150.6V157.0M361.1 150.1V157.3M362.3 154.7V158.4M363.5 151.0V157.8M364.7 148.5V155.9M365.9 149.0V154.2M367.1 146.2V152.4M368.3 146.8V154.1M369.5 154.2V157.3M370.7 143.8V151.6M371.9 141.7V149.7M373.1 148.5V152.9M374.3 147.6V153.5M375.5 143.8V149.8M376.7 141.0V149.1M377.9 144.2V152.3M379.1 141.7V151.0M380.3 140.3V148.6M381.5 141.4V145.8M382.7 148.8V157.2M383.9 151.0V158.0M385.1 155.1V162.8M386.3 155.9V161.9M387.5 155.3V162.0M388.7 158.2V163.8M389.9 160.8V164.9M391.1 163.2V166.8M392.3 163.0V170.4M393.5 167.0V170.5M394.7 165.1V170.4M395.9 167.5V174.9M397.1 166.0V170.1M398.3 164.9V168.0M399.5 162.6V168.3M400.7 164.1V169.1M401.9 161.2V165.5M403.1 161.6V165.6M404.3 160.8V164.0M405.5 159.5V162.6M406.7 162.3V168.3M407.9 159.8V164.7M409.1 161.2V166.0M410.3 159.0V163.6M411.5 153.2V165.9M412.7 155.1V160.0M413.9 149.1V156.8M415.1 146.2V153.8M416.3 147.3V153.9M417.5 150.4V157.2M418.7 148.4V152.7M419.9 153.3V156.7M421.1 149.6V156.6M422.3 150.2V155.1M423.5 149.5V154.0M424.7 150.3V154.4M425.9 148.3V154.2M427.1 149.1V154.3M428.3 145.8V150.5M429.5 138.8V141.8M430.7 131.8V135.9M431.9 130.8V138.5M433.1 129.3V136.6M434.3 127.9V137.2M435.5 133.5V138.1M436.7 132.9V142.9M437.9 131.7V138.8M439.1 132.8V139.0M440.3 134.7V138.7M441.5 136.7V138.8M442.7 132.6V136.9M443.9 136.1V142.0M445.1 132.2V138.3M446.3 135.2V139.0M447.5 136.3V143.3M448.7 136.5V140.3M449.9 136.2V146.2M451.1 136.2V142.1M452.3 136.2V139.8M453.5 131.5V139.4M454.7 136.3V140.3M455.9 137.9V143.0M457.1 133.4V140.9M458.3 124.7V132.6M459.5 137.2V143.8M460.7 138.6V145.8M461.9 144.3V146.9M463.1 144.0V151.5M464.3 143.6V148.4M465.5 145.9V150.8M466.7 144.2V151.9M467.9 148.5V151.1M469.1 147.7V151.9M470.3 150.3V154.4M471.5 147.8V153.3M472.7 143.0V150.6M473.9 142.3V148.8M475.1 145.0V149.1M476.3 146.2V153.0M477.5 150.3V154.3M478.7 148.6V159.0M479.9 150.1V158.0M481.1 149.8V153.5M482.3 150.0V153.6M483.5 149.8V152.9M484.7 147.5V155.0M485.9 154.1V157.1M487.1 151.9V156.1M488.3 152.9V159.4M489.5 154.4V161.3M490.7 158.9V164.6M491.9 160.0V166.7M493.1 164.0V170.7M494.3 164.1V169.0M495.5 159.5V164.6M496.7 154.6V159.7M497.9 154.7V163.6M499.1 159.2V162.4M500.3 155.3V161.1M501.5 157.4V160.1M502.7 156.9V161.5M503.9 159.2V165.8M505.1 160.1V164.4M506.3 156.9V162.9M507.5 156.2V161.2M508.7 159.2V164.6M509.9 161.6V166.5M511.1 159.4V167.4M512.3 158.2V162.7M513.5 159.2V164.9M514.7 157.4V161.9M515.9 157.4V160.7M517.1 155.1V165.4M518.3 156.8V163.4M519.5 160.0V163.5M520.7 149.1V153.8M521.9 142.0V147.4M523.1 141.2V145.6M524.3 141.9V146.0M525.5 143.7V152.1M526.7 145.0V150.0M527.9 143.1V148.4M529.1 143.4V150.1M530.3 138.1V145.6M531.5 141.5V145.3M532.7 142.9V146.7M533.9 141.4V147.2M535.1 137.3V140.8M536.3 135.0V140.6M537.5 130.4V135.0M538.7 124.9V128.2M539.9 122.1V126.4M541.1 120.1V124.1M542.3 120.4V130.0M543.5 121.6V125.5M544.7 121.4V127.1M545.9 125.9V131.1M547.1 128.2V135.7M548.3 126.5V131.0M549.5 129.8V136.3M550.7 132.0V136.5M551.9 138.4V141.4M553.1 144.7V149.2M554.3 153.0V159.7M555.5 155.2V161.3M556.7 159.9V166.8M557.9 161.3V168.8M559.1 160.5V165.5M560.3 163.2V168.3M561.5 159.2V164.5M562.7 158.6V162.4M563.9 158.3V163.6M565.1 157.8V165.4" stroke="#28d828" stroke-width="0.8" fill="none"/><line x1="188" y1="160.5" x2="567" y2="160.5" stroke="#10b010" stroke-width="1" stroke-dasharray="4,3"/><line x1="188" y1="166.5" x2="567" y2="166.5" stroke="#7a8c9c" stroke-width="1"/><path d="M187.2 197.4 L188.2 198.3 L189.2 199.1 L190.2 200.8 L191.2 202.4 L192.2 204.0 L193.2 205.4 L194.2 206.5 L195.2 207.4 L196.2 208.1 L197.2 208.1 L198.2 207.7 L199.2 206.7 L200.2 205.3 L201.2 203.4 L202.2 201.5 L203.2 199.8 L204.2 198.1 L205.2 196.6 L206.2 195.7 L207.2 195.4 L208.2 195.7 L209.2 196.6 L210.2 198.0 L211.2 199.3 L212.2 200.6 L213.2 201.7 L214.2 202.8 L215.2 203.8 L216.2 204.8 L217.2 205.6 L218.2 206.2 L219.2 206.6 L220.2 206.9 L221.2 206.8 L222.2 206.5 L223.2 206.0 L224.2 205.3 L225.2 204.4 L226.2 203.7 L227.2 203.3 L228.2 203.2 L229.2 203.4 L230.2 204.0 L231.2 204.7 L232.2 205.4 L233.2 206.3 L234.2 207.2 L235.2 208.1 L236.2 208.9 L237.2 209.6 L238.2 210.2 L239.2 210.3 L240.2 210.0 L241.2 209.2 L242.2 207.8 L243.2 206.0 L244.2 204.3 L245.2 202.7 L246.2 201.4 L247.2 200.2 L248.2 199.2 L249.2 198.2 L250.2 197.4 L251.2 197.1 L252.2 197.1 L253.2 197.5 L254.2 198.3 L255.2 199.5 L256.2 200.7 L257.2 202.0 L258.2 203.4 L259.2 204.7 L260.2 205.9 L261.2 206.8 L262.2 207.4 L263.2 207.9 L264.2 208.3 L265.2 208.6 L266.2 209.0 L267.2 209.4 L268.2 209.7 L269.2 210.0 L270.2 210.2 L271.2 210.4 L272.2 210.6 L273.2 210.7 L274.2 210.8 L275.2 210.9 L276.2 211.1 L277.2 211.2 L278.2 211.3 L279.2 211.5 L280.2 211.6 L281.2 211.8 L282.2 212.0 L283.2 212.1 L284.2 212.0 L285.2 211.7 L286.2 211.3 L287.2 210.6 L288.2 209.8 L289.2 208.9 L290.2 208.3 L291.2 207.9 L292.2 207.8 L293.2 208.1 L294.2 208.6 L295.2 209.3 L296.2 209.9 L297.2 210.5 L298.2 211.1 L299.2 211.5 L300.2 212.0 L301.2 212.3 L302.2 212.6 L303.2 213.0 L304.2 213.2 L305.2 213.5 L306.2 213.7 L307.2 213.8 L308.2 214.0 L309.2 214.1 L310.2 214.2 L311.2 214.3 L312.2 214.3 L313.2 214.0 L314.2 213.2 L315.2 212.1 L316.2 210.6 L317.2 208.9 L318.2 207.2 L319.2 205.6 L320.2 204.1 L321.2 202.7 L322.2 201.7 L323.2 201.1 L324.2 200.9 L325.2 201.0 L326.2 201.4 L327.2 201.7 L328.2 202.1 L329.2 202.5 L330.2 203.1 L331.2 203.6 L332.2 204.3 L333.2 205.0 L334.2 205.6 L335.2 206.1 L336.2 206.5 L337.2 206.8 L338.2 206.9 L339.2 206.9 L340.2 206.9 L341.2 206.9 L342.2 206.9 L343.2 206.9 L344.2 207.0 L345.2 207.1 L346.2 207.2 L347.2 207.4 L348.2 207.7 L349.2 207.9 L350.2 208.2 L351.2 208.4 L352.2 208.6 L353.2 208.6 L354.2 208.4 L355.2 208.0 L356.2 207.4 L357.2 206.6 L358.2 205.9 L359.2 205.1 L360.2 204.4 L361.2 203.6 L362.2 203.0 L363.2 202.3 L364.2 201.8 L365.2 201.2 L366.2 201.0 L367.2 201.1 L368.2 201.5 L369.2 202.2 L370.2 203.2 L371.2 204.2 L372.2 205.2 L373.2 206.2 L374.2 207.2 L375.2 208.0 L376.2 208.6 L377.2 208.9 L378.2 209.1 L379.2 209.1 L380.2 209.1 L381.2 209.1 L382.2 209.1 L383.2 209.0 L384.2 208.7 L385.2 208.0 L386.2 207.0 L387.2 205.8 L388.2 204.3 L389.2 203.0 L390.2 201.8 L391.2 200.8 L392.2 199.9 L393.2 199.0 L394.2 198.2 L395.2 197.5 L396.2 197.2 L397.2 197.5 L398.2 198.2 L399.2 199.3 L400.2 200.8 L401.2 202.3 L402.2 203.8 L403.2 205.2 L404.2 206.5 L405.2 207.7 L406.2 208.8 L407.2 209.6 L408.2 209.9 L409.2 209.8 L410.2 209.1 L411.2 207.9 L412.2 206.4 L413.2 204.9 L414.2 203.5 L415.2 202.4 L416.2 201.6 L417.2 201.1 L418.2 201.0 L419.2 201.1 L420.2 201.2 L421.2 201.3 L422.2 201.5 L423.2 201.6 L424.2 201.6 L425.2 201.3 L426.2 200.9 L427.2 200.2 L428.2 199.3 L429.2 198.3 L430.2 197.3 L431.2 196.3 L432.2 195.3 L433.2 194.3 L434.2 193.6 L435.2 193.3 L436.2 193.4 L437.2 193.7 L438.2 194.4 L439.2 195.0 L440.2 195.7 L441.2 196.5 L442.2 197.4 L443.2 198.5 L444.2 199.6 L445.2 201.0 L446.2 202.3 L447.2 203.6 L448.2 204.8 L449.2 205.9 L450.2 206.8 L451.2 207.5 L452.2 208.0 L453.2 208.5 L454.2 209.0 L455.2 209.4 L456.2 209.7 L457.2 209.8 L458.2 209.8 L459.2 209.6 L460.2 209.4 L461.2 209.1 L462.2 208.9 L463.2 208.6 L464.2 208.4 L465.2 208.0 L466.2 207.6 L467.2 207.0 L468.2 206.4 L469.2 205.7 L470.2 205.3 L471.2 205.2 L472.2 205.4 L473.2 205.9 L474.2 206.6 L475.2 207.1 L476.2 207.4 L477.2 207.6 L478.2 207.6 L479.2 207.4 L480.2 207.3 L481.2 207.2 L482.2 207.1 L483.2 206.9 L484.2 206.7 L485.2 206.2 L486.2 205.6 L487.2 204.8 L488.2 203.8 L489.2 202.8 L490.2 201.8 L491.2 200.8 L492.2 199.8 L493.2 198.9 L494.2 198.6 L495.2 198.8 L496.2 199.4 L497.2 200.6 L498.2 202.0 L499.2 203.2 L500.2 204.2 L501.2 205.0 L502.2 205.6 L503.2 206.1 L504.2 206.6 L505.2 207.1 L506.2 207.6 L507.2 208.1 L508.2 208.5 L509.2 209.0 L510.2 209.4 L511.2 209.8 L512.2 210.2 L513.2 210.6 L514.2 210.9 L515.2 211.3 L516.2 211.7 L517.2 211.9 L518.2 211.9 L519.2 211.5 L520.2 210.8 L521.2 209.9 L522.2 208.8 L523.2 207.6 L524.2 206.5 L525.2 205.4 L526.2 204.3 L527.2 203.3 L528.2 202.4 L529.2 201.6 L530.2 201.0 L531.2 200.4 L532.2 199.9 L533.2 199.4 L534.2 198.9 L535.2 198.4 L536.2 197.9 L537.2 197.4 L538.2 196.8 L539.2 196.2 L540.2 195.6 L541.2 194.9 L542.2 194.2 L543.2 193.6 L544.2 193.6 L545.2 194.1 L546.2 195.1 L547.2 196.7 L548.2 198.4 L549.2 199.5 L550.2 199.9 L551.2 199.6 L552.2 198.7 L553.2 197.4 L554.2 196.0 L555.2 194.7 L556.2 193.2 L557.2 191.6 L558.2 189.8 L559.2 187.9 L560.2 186.2 L561.2 185.1 L562.2 184.8 L563.2 185.1 L564.2 185.4 L565.2 186.0" stroke="#1a9c9c" stroke-width="1.2" fill="none"/><path d="M188.0 207.2 L189.0 205.1 L190.0 207.0 L191.0 202.5 L192.0 202.9 L193.0 198.7 L194.0 201.9 L195.0 203.0 L196.0 206.3 L197.0 205.5 L198.0 206.6 L199.0 206.2 L200.0 204.8 L201.0 205.3 L202.0 202.8 L203.0 202.4 L204.0 204.2 L205.0 204.4 L206.0 203.6 L207.0 208.4 L208.0 208.2 L209.0 206.7 L210.0 206.9 L211.0 205.6 L212.0 204.7 L213.0 203.9 L214.0 208.1 L215.0 207.9 L216.0 207.9 L217.0 209.0 L218.0 212.9 L219.0 211.8 L220.0 210.0 L221.0 214.8 L222.0 211.0 L223.0 209.9 L224.0 211.0 L225.0 215.4 L226.0 212.8 L227.0 207.3 L228.0 208.7 L229.0 207.5 L230.0 206.8 L231.0 207.9 L232.0 208.4 L233.0 209.1 L234.0 208.3 L235.0 211.2 L236.0 214.3 L237.0 214.2 L238.0 213.0 L239.0 214.5 L240.0 215.3 L241.0 212.9 L242.0 211.9 L243.0 214.2 L244.0 213.8 L245.0 213.0 L246.0 213.4 L247.0 213.3 L248.0 213.2 L249.0 209.0 L250.0 212.8 L251.0 213.1 L252.0 211.1 L253.0 213.1 L254.0 213.5 L255.0 213.2 L256.0 215.1 L257.0 219.0 L258.0 219.0 L259.0 219.0 L260.0 219.0 L261.0 219.0 L262.0 219.0 L263.0 219.0 L264.0 215.9 L265.0 214.5 L266.0 216.6 L267.0 217.9 L268.0 218.1 L269.0 213.1 L270.0 217.4 L271.0 217.6 L272.0 218.2 L273.0 218.3 L274.0 213.6 L275.0 209.9 L276.0 207.0 L277.0 210.8 L278.0 208.6 L279.0 207.9 L280.0 207.2 L281.0 208.3 L282.0 209.2 L283.0 209.6 L284.0 206.7 L285.0 200.2 L286.0 201.1 L287.0 202.2 L288.0 205.3 L289.0 205.3 L290.0 204.4 L291.0 205.7 L292.0 202.7 L293.0 201.1 L294.0 199.8 L295.0 201.2 L296.0 206.3 L297.0 208.4 L298.0 211.0 L299.0 211.6 L300.0 212.3 L301.0 211.3 L302.0 210.8 L303.0 205.8 L304.0 203.7 L305.0 201.6 L306.0 204.0 L307.0 205.9 L308.0 208.6 L309.0 212.0 L310.0 211.2 L311.0 213.3 L312.0 217.1 L313.0 216.5 L314.0 218.2 L315.0 217.1 L316.0 213.0 L317.0 212.8 L318.0 210.6 L319.0 210.5 L320.0 209.2 L321.0 209.6 L322.0 204.7 L323.0 209.1 L324.0 211.6 L325.0 210.3 L326.0 207.9 L327.0 207.7 L328.0 208.8 L329.0 209.3 L330.0 209.8 L331.0 205.2 L332.0 202.8 L333.0 205.7 L334.0 206.1 L335.0 202.8 L336.0 201.1 L337.0 198.4 L338.0 196.8 L339.0 199.9 L340.0 200.0 L341.0 202.9 L342.0 203.6 L343.0 200.7 L344.0 199.9 L345.0 205.4 L346.0 204.1 L347.0 202.3 L348.0 205.5 L349.0 206.1 L350.0 206.4 L351.0 209.9 L352.0 206.3 L353.0 207.6 L354.0 205.7 L355.0 203.1 L356.0 202.0 L357.0 205.2 L358.0 205.4 L359.0 202.0 L360.0 200.3 L361.0 204.4 L362.0 207.1 L363.0 205.0 L364.0 210.6 L365.0 209.9 L366.0 207.3 L367.0 207.2 L368.0 209.4 L369.0 212.8 L370.0 214.7 L371.0 213.3 L372.0 211.7 L373.0 208.2 L374.0 207.9 L375.0 206.5 L376.0 207.0 L377.0 204.1 L378.0 203.0 L379.0 201.3 L380.0 198.9 L381.0 196.7 L382.0 196.0 L383.0 196.0 L384.0 196.0 L385.0 196.0 L386.0 196.0 L387.0 196.0 L388.0 196.6 L389.0 200.2 L390.0 200.1 L391.0 200.0 L392.0 198.8 L393.0 199.6 L394.0 201.1 L395.0 201.8 L396.0 201.6 L397.0 203.2 L398.0 203.7 L399.0 204.5 L400.0 202.8 L401.0 203.7 L402.0 201.9 L403.0 200.7 L404.0 201.7 L405.0 206.9 L406.0 209.3 L407.0 209.4 L408.0 209.2 L409.0 211.5 L410.0 214.5 L411.0 217.0 L412.0 216.3 L413.0 216.4 L414.0 215.4 L415.0 214.6 L416.0 212.6 L417.0 212.0 L418.0 207.4 L419.0 205.1 L420.0 206.4 L421.0 204.7 L422.0 206.3 L423.0 203.8 L424.0 203.4 L425.0 204.6 L426.0 202.7 L427.0 201.5 L428.0 207.3 L429.0 205.8 L430.0 204.3 L431.0 203.2 L432.0 203.5 L433.0 203.6 L434.0 205.8 L435.0 207.4 L436.0 206.3 L437.0 205.4 L438.0 202.3 L439.0 199.1 L440.0 197.9 L441.0 199.9 L442.0 200.4 L443.0 202.3 L444.0 204.5 L445.0 204.1 L446.0 208.6 L447.0 207.2 L448.0 205.7 L449.0 204.7 L450.0 207.2 L451.0 206.8 L452.0 205.2 L453.0 206.2 L454.0 208.7 L455.0 208.4 L456.0 207.9 L457.0 210.3 L458.0 212.3 L459.0 214.1 L460.0 212.2 L461.0 212.7 L462.0 213.4 L463.0 209.4 L464.0 212.1 L465.0 212.3 L466.0 211.5 L467.0 216.4 L468.0 216.5 L469.0 214.6 L470.0 214.3 L471.0 215.4 L472.0 216.9 L473.0 216.5 L474.0 214.3 L475.0 212.6 L476.0 210.8 L477.0 208.5 L478.0 208.6 L479.0 207.7 L480.0 208.0 L481.0 206.3 L482.0 204.6 L483.0 204.5 L484.0 204.0 L485.0 206.7 L486.0 204.8 L487.0 205.3 L488.0 205.3 L489.0 202.5 L490.0 204.2 L491.0 204.6 L492.0 200.1 L493.0 201.7 L494.0 203.9 L495.0 202.2 L496.0 205.9 L497.0 206.1 L498.0 203.4 L499.0 204.7 L500.0 203.8 L501.0 201.0 L502.0 196.6 L503.0 197.6 L504.0 196.6 L505.0 198.5 L506.0 199.8 L507.0 199.1 L508.0 198.5 L509.0 202.8 L510.0 206.8 L511.0 208.4 L512.0 207.6 L513.0 205.6 L514.0 205.0 L515.0 208.9 L516.0 209.9 L517.0 209.3 L518.0 206.8 L519.0 207.5 L520.0 205.9 L521.0 206.3 L522.0 208.3 L523.0 210.8 L524.0 211.2 L525.0 210.6 L526.0 211.2 L527.0 215.1 L528.0 215.7 L529.0 212.5 L530.0 215.8 L531.0 216.0 L532.0 219.0 L533.0 219.0 L534.0 219.0 L535.0 219.0 L536.0 219.0 L537.0 217.3 L538.0 213.6 L539.0 209.1 L540.0 208.8 L541.0 207.6 L542.0 206.4 L543.0 210.9 L544.0 212.3 L545.0 214.2 L546.0 212.5 L547.0 212.6 L548.0 211.6 L549.0 210.7 L550.0 211.8 L551.0 212.5 L552.0 212.6 L553.0 212.3 L554.0 208.6 L555.0 206.7 L556.0 207.3 L557.0 206.2 L558.0 204.4 L559.0 205.2 L560.0 203.1 L561.0 201.8 L562.0 203.9 L563.0 203.3 L564.0 206.5 L565.0 207.6 L566.0 209.3" stroke="#b0b040" stroke-width="1" fill="none" stroke-dasharray="1.2,1.8"/><path d="M188.0 201.7 L189.0 202.3 L190.0 205.0 L191.0 208.2 L192.0 210.4 L193.0 210.2 L194.0 210.6 L195.0 209.8 L196.0 206.9 L197.0 206.1 L198.0 208.3 L199.0 208.9 L200.0 208.3 L201.0 206.3 L202.0 206.4 L203.0 205.5 L204.0 206.0 L205.0 207.4 L206.0 202.9 L207.0 203.3 L208.0 200.7 L209.0 199.5 L210.0 197.6 L211.0 200.7 L212.0 202.7 L213.0 204.1 L214.0 202.8 L215.0 200.0 L216.0 199.6 L217.0 200.4 L218.0 200.6 L219.0 202.2 L220.0 201.5 L221.0 205.3 L222.0 206.4 L223.0 210.2 L224.0 210.1 L225.0 209.0 L226.0 206.6 L227.0 207.9 L228.0 209.6 L229.0 209.3 L230.0 209.6 L231.0 208.5 L232.0 207.2 L233.0 206.2 L234.0 202.1 L235.0 200.1 L236.0 200.5 L237.0 201.1 L238.0 203.8 L239.0 205.3 L240.0 206.4 L241.0 206.6 L242.0 202.0 L243.0 202.7 L244.0 201.3 L245.0 203.0 L246.0 203.0 L247.0 202.8 L248.0 202.3 L249.0 202.3 L250.0 198.8 L251.0 196.3 L252.0 199.8 L253.0 201.5 L254.0 201.1 L255.0 200.9 L256.0 200.7 L257.0 208.0 L258.0 209.0 L259.0 208.8 L260.0 207.2 L261.0 202.1 L262.0 202.5 L263.0 205.4 L264.0 207.2 L265.0 207.4 L266.0 205.7 L267.0 202.9 L268.0 202.9 L269.0 201.9 L270.0 199.4 L271.0 202.9 L272.0 200.8 L273.0 199.6 L274.0 196.0 L275.0 198.8 L276.0 198.6 L277.0 198.8 L278.0 199.6 L279.0 198.2 L280.0 197.3 L281.0 198.5 L282.0 197.3 L283.0 198.6 L284.0 201.7 L285.0 203.8 L286.0 207.1 L287.0 209.5 L288.0 213.1 L289.0 213.5 L290.0 214.2 L291.0 211.7 L292.0 211.3 L293.0 209.7 L294.0 209.7 L295.0 207.6 L296.0 208.4 L297.0 213.9 L298.0 212.0 L299.0 213.0 L300.0 214.0 L301.0 212.0 L302.0 211.0 L303.0 209.6 L304.0 210.2 L305.0 208.5 L306.0 213.6 L307.0 214.7 L308.0 216.2 L309.0 219.0 L310.0 219.0 L311.0 219.0 L312.0 219.0 L313.0 217.9 L314.0 217.3 L315.0 218.1 L316.0 212.7 L317.0 208.4 L318.0 207.2 L319.0 207.7 L320.0 206.3 L321.0 205.6 L322.0 207.7 L323.0 208.9 L324.0 208.3 L325.0 207.4 L326.0 204.2 L327.0 205.4 L328.0 205.7 L329.0 203.9 L330.0 205.2 L331.0 204.7 L332.0 204.3 L333.0 201.2 L334.0 203.7 L335.0 202.5 L336.0 203.7 L337.0 204.6 L338.0 203.8 L339.0 204.0 L340.0 203.9 L341.0 203.7 L342.0 204.4 L343.0 203.3 L344.0 205.0 L345.0 205.3 L346.0 202.8 L347.0 203.8 L348.0 203.0 L349.0 203.9 L350.0 198.9 L351.0 199.8 L352.0 196.0 L353.0 196.0 L354.0 201.6 L355.0 202.7 L356.0 204.6 L357.0 202.7 L358.0 200.0 L359.0 199.6 L360.0 200.4 L361.0 200.0 L362.0 198.5 L363.0 196.6 L364.0 196.0 L365.0 199.7 L366.0 199.7 L367.0 199.1 L368.0 198.8 L369.0 197.0 L370.0 196.0 L371.0 196.0 L372.0 199.3 L373.0 200.9 L374.0 198.4 L375.0 202.3 L376.0 203.3 L377.0 207.7 L378.0 207.6 L379.0 204.9 L380.0 205.7 L381.0 205.7 L382.0 203.7 L383.0 202.6 L384.0 202.2 L385.0 200.9 L386.0 202.7 L387.0 203.7 L388.0 203.0 L389.0 202.6 L390.0 204.7 L391.0 205.6 L392.0 203.0 L393.0 203.7 L394.0 207.3 L395.0 207.6 L396.0 205.4 L397.0 208.4 L398.0 213.1 L399.0 212.6 L400.0 206.9 L401.0 203.4 L402.0 207.2 L403.0 206.4 L404.0 207.5 L405.0 208.3 L406.0 208.2 L407.0 211.4 L408.0 211.3 L409.0 212.1 L410.0 212.3 L411.0 212.4 L412.0 217.2 L413.0 214.2 L414.0 211.2 L415.0 213.4 L416.0 210.5 L417.0 210.9 L418.0 208.7 L419.0 211.0 L420.0 211.1 L421.0 212.6 L422.0 211.1 L423.0 211.0 L424.0 206.3 L425.0 208.6 L426.0 209.7 L427.0 209.9 L428.0 210.2 L429.0 209.5 L430.0 209.5 L431.0 213.6 L432.0 212.1 L433.0 210.9 L434.0 212.2 L435.0 212.4 L436.0 210.8 L437.0 213.9 L438.0 216.9 L439.0 215.4 L440.0 218.5 L441.0 214.5 L442.0 217.0 L443.0 212.6 L444.0 212.7 L445.0 211.7 L446.0 210.3 L447.0 211.1 L448.0 208.4 L449.0 206.4 L450.0 203.7 L451.0 206.9 L452.0 205.4 L453.0 206.1 L454.0 205.5 L455.0 207.7 L456.0 205.4 L457.0 203.7 L458.0 202.6 L459.0 203.4 L460.0 202.2 L461.0 203.7 L462.0 205.4 L463.0 208.0 L464.0 209.4 L465.0 212.5 L466.0 211.8 L467.0 210.8 L468.0 209.5 L469.0 208.3 L470.0 205.8 L471.0 207.1 L472.0 207.6 L473.0 203.5 L474.0 203.8 L475.0 202.7 L476.0 201.3 L477.0 201.2 L478.0 204.3 L479.0 204.8 L480.0 200.7 L481.0 201.8 L482.0 200.2 L483.0 204.0 L484.0 202.9 L485.0 202.8 L486.0 202.4 L487.0 200.6 L488.0 199.9 L489.0 199.8 L490.0 204.5 L491.0 204.6 L492.0 205.5 L493.0 205.5 L494.0 205.7 L495.0 206.2 L496.0 209.0 L497.0 202.4 L498.0 201.3 L499.0 199.8 L500.0 202.0 L501.0 200.7 L502.0 203.2 L503.0 205.9 L504.0 205.0 L505.0 206.5 L506.0 205.8 L507.0 207.9 L508.0 209.3 L509.0 212.0 L510.0 213.8 L511.0 211.6 L512.0 214.8 L513.0 214.7 L514.0 216.8 L515.0 216.7 L516.0 218.4 L517.0 215.5 L518.0 218.0 L519.0 215.5 L520.0 214.8 L521.0 215.5 L522.0 211.9 L523.0 212.5 L524.0 212.2 L525.0 213.6 L526.0 212.9 L527.0 210.3 L528.0 207.6 L529.0 205.7 L530.0 205.9 L531.0 205.3 L532.0 206.5 L533.0 209.4 L534.0 208.4 L535.0 207.0 L536.0 207.5 L537.0 208.1 L538.0 203.3 L539.0 202.0 L540.0 202.3 L541.0 203.7 L542.0 202.8 L543.0 200.9 L544.0 205.6 L545.0 199.2 L546.0 202.8 L547.0 201.8 L548.0 201.5 L549.0 202.0 L550.0 203.2 L551.0 201.7 L552.0 199.4 L553.0 200.9 L554.0 204.2 L555.0 204.1 L556.0 209.3 L557.0 206.8 L558.0 208.8 L559.0 209.9 L560.0 212.7 L561.0 210.2 L562.0 211.5 L563.0 211.1 L564.0 206.1 L565.0 205.3 L566.0 202.4" stroke="#d8d8a0" stroke-width="1" fill="none" stroke-dasharray="1.2,1.8"/></svg>
<svg style="left:0;top:0" width="900" height="558"><line x1="566" y1="116.5" x2="569" y2="116.5" stroke="#c8c8c8"/><line x1="566" y1="137.5" x2="569" y2="137.5" stroke="#c8c8c8"/><line x1="566" y1="158.5" x2="569" y2="158.5" stroke="#c8c8c8"/><line x1="566" y1="184.5" x2="569" y2="184.5" stroke="#c8c8c8"/><line x1="566" y1="221.5" x2="569" y2="221.5" stroke="#c8c8c8"/><line x1="187.5" y1="222" x2="187.5" y2="225" stroke="#c8c8c8"/><line x1="228.5" y1="222" x2="228.5" y2="225" stroke="#c8c8c8"/><line x1="269.5" y1="222" x2="269.5" y2="225" stroke="#c8c8c8"/><line x1="310.5" y1="222" x2="310.5" y2="225" stroke="#c8c8c8"/><line x1="351.5" y1="222" x2="351.5" y2="225" stroke="#c8c8c8"/><line x1="392.5" y1="222" x2="392.5" y2="225" stroke="#c8c8c8"/><line x1="434.5" y1="222" x2="434.5" y2="225" stroke="#c8c8c8"/><line x1="475.5" y1="222" x2="475.5" y2="225" stroke="#c8c8c8"/><line x1="516.5" y1="222" x2="516.5" y2="225" stroke="#c8c8c8"/><line x1="558.5" y1="222" x2="558.5" y2="225" stroke="#c8c8c8"/><line x1="566" y1="270.7" x2="569" y2="270.7" stroke="#c8c8c8"/><line x1="566" y1="295.0" x2="569" y2="295.0" stroke="#c8c8c8"/><line x1="566" y1="319.0" x2="569" y2="319.0" stroke="#c8c8c8"/><line x1="566" y1="343.0" x2="569" y2="343.0" stroke="#c8c8c8"/><line x1="566" y1="367.0" x2="569" y2="367.0" stroke="#c8c8c8"/><line x1="187.5" y1="390" x2="187.5" y2="393" stroke="#c8c8c8"/><line x1="228.5" y1="390" x2="228.5" y2="393" stroke="#c8c8c8"/><line x1="269.5" y1="390" x2="269.5" y2="393" stroke="#c8c8c8"/><line x1="310.5" y1="390" x2="310.5" y2="393" stroke="#c8c8c8"/><line x1="351.5" y1="390" x2="351.5" y2="393" stroke="#c8c8c8"/><line x1="393.5" y1="390" x2="393.5" y2="393" stroke="#c8c8c8"/><line x1="434.5" y1="390" x2="434.5" y2="393" stroke="#c8c8c8"/><line x1="475.5" y1="390" x2="475.5" y2="393" stroke="#c8c8c8"/><line x1="517.5" y1="390" x2="517.5" y2="393" stroke="#c8c8c8"/></svg>
<div class="t" style="left:570px;top:111px;font-size:7.00px;color:#e8e8e8;-webkit-text-stroke:0;transform:scaleX(0.805);transform-origin:left">1.3230</div>
<div class="t" style="left:570px;top:132px;font-size:7.00px;color:#e8e8e8;-webkit-text-stroke:0;transform:scaleX(0.805);transform-origin:left">1.3130</div>
<div class="t" style="left:570px;top:153px;font-size:7.00px;color:#e8e8e8;-webkit-text-stroke:0;transform:scaleX(0.805);transform-origin:left">1.3030</div>
<div class="t" style="left:570px;top:179px;font-size:7.00px;color:#e8e8e8;-webkit-text-stroke:0;transform:scaleX(0.806);transform-origin:left">65.26</div>
<div class="a" style="left:568px;top:163px;width:23px;height:7px;background:#8c9eb4"></div>
<div class="t" style="left:570px;top:161.5px;font-size:7.00px;color:#1a2636;-webkit-text-stroke:0;transform:scaleX(0.805);transform-origin:left">1.2993</div>
<div class="t" style="left:569px;top:213px;font-size:7.00px;color:#e8e8e8;-webkit-text-stroke:0;transform:scaleX(0.807);transform-origin:left">0.00</div>
<svg style="left:190px;top:98px" width="22" height="9"><rect x="0.5" y="0.5" width="9" height="8" fill="#f4f4f4" stroke="#d8d8d8"/><rect x="1.5" y="1.5" width="3" height="6" fill="#f0a8b0"/><rect x="5.5" y="1.5" width="3" height="6" fill="#a8b0f0"/><rect x="11" y="0.5" width="5" height="8" fill="#3848d8"/><rect x="16" y="0.5" width="5" height="8" fill="#e03838"/><path d="M14 2L16 4.5L18 2M16 4.5V7" stroke="#fff" stroke-width="0.9" fill="none"/></svg>
<div class="t" style="left:214px;top:97px;font-size:7.50px;color:#e4e4e4;-webkit-text-stroke:0;;transform:scaleX(0.830);transform-origin:left">GBPUSD,H1</div>
<div class="t" style="left:191px;top:151px;font-size:7.00px;color:#d8d8d8;-webkit-text-stroke:0;transform:scaleX(0.834);transform-origin:left">#11392292 buy 3.00</div>
<div class="t" style="left:190px;top:181px;font-size:7.00px;color:#e0e0e0;-webkit-text-stroke:0;transform:scaleX(0.819);transform-origin:left">ADX Wilder(14) 53.01 15.53 33.86</div>
<div class="t" style="left:187px;top:224px;font-size:7.00px;color:#e8e8e8;-webkit-text-stroke:0;transform:scaleX(0.828);transform-origin:left">30 Dec 2019</div>
<div class="t" style="left:228px;top:224px;font-size:7.00px;color:#e8e8e8;-webkit-text-stroke:0;transform:scaleX(0.836);transform-origin:left">3 Jan 15:00</div>
<div class="t" style="left:269px;top:224px;font-size:7.00px;color:#e8e8e8;-webkit-text-stroke:0;transform:scaleX(0.836);transform-origin:left">8 Jan 07:00</div>
<div class="t" style="left:310px;top:224px;font-size:7.00px;color:#e8e8e8;-webkit-text-stroke:0;transform:scaleX(0.833);transform-origin:left">10 Jan 23:00</div>
<div class="t" style="left:351px;top:224px;font-size:7.00px;color:#e8e8e8;-webkit-text-stroke:0;transform:scaleX(0.833);transform-origin:left">15 Jan 15:00</div>
<div class="t" style="left:392px;top:224px;font-size:7.00px;color:#e8e8e8;-webkit-text-stroke:0;transform:scaleX(0.833);transform-origin:left">20 Jan 07:00</div>
<div class="t" style="left:434px;top:224px;font-size:7.00px;color:#e8e8e8;-webkit-text-stroke:0;transform:scaleX(0.833);transform-origin:left">22 Jan 23:00</div>
<div class="t" style="left:475px;top:224px;font-size:7.00px;color:#e8e8e8;-webkit-text-stroke:0;transform:scaleX(0.833);transform-origin:left">27 Jan 15:00</div>
<div class="t" style="left:516px;top:224px;font-size:7.00px;color:#e8e8e8;-webkit-text-stroke:0;transform:scaleX(0.833);transform-origin:left">30 Jan 07:00</div>
<div class="t" style="left:558px;top:224px;font-size:7.00px;color:#e8e8e8;-webkit-text-stroke:0;transform:scaleX(0.834);transform-origin:left">3 Feb 23:00</div>
<div class="a" style="left:551px;top:169px;width:2px;height:9px;background:#fff"></div>
<div class="a" style="left:556px;top:168px;width:10px;height:10px;background:#fff;border:1px solid #888"></div>
<div class="t" style="left:557px;top:169px;font-size:7px;color:#000;-webkit-text-stroke:0">21</div>
<svg style="left:0;top:0" width="900" height="558"><line x1="208.0" y1="263" x2="208.0" y2="390" stroke="#bfbfbf" stroke-width="1" stroke-dasharray="1.5,2.5"/><line x1="228.6" y1="263" x2="228.6" y2="390" stroke="#bfbfbf" stroke-width="1" stroke-dasharray="1.5,2.5"/><line x1="249.2" y1="263" x2="249.2" y2="390" stroke="#bfbfbf" stroke-width="1" stroke-dasharray="1.5,2.5"/><line x1="269.9" y1="263" x2="269.9" y2="390" stroke="#bfbfbf" stroke-width="1" stroke-dasharray="1.5,2.5"/><line x1="290.5" y1="263" x2="290.5" y2="390" stroke="#bfbfbf" stroke-width="1" stroke-dasharray="1.5,2.5"/><line x1="311.1" y1="263" x2="311.1" y2="390" stroke="#bfbfbf" stroke-width="1" stroke-dasharray="1.5,2.5"/><line x1="331.7" y1="263" x2="331.7" y2="390" stroke="#bfbfbf" stroke-width="1" stroke-dasharray="1.5,2.5"/><line x1="352.3" y1="263" x2="352.3" y2="390" stroke="#bfbfbf" stroke-width="1" stroke-dasharray="1.5,2.5"/><line x1="373.0" y1="263" x2="373.0" y2="390" stroke="#bfbfbf" stroke-width="1" stroke-dasharray="1.5,2.5"/><line x1="393.6" y1="263" x2="393.6" y2="390" stroke="#bfbfbf" stroke-width="1" stroke-dasharray="1.5,2.5"/><line x1="414.2" y1="263" x2="414.2" y2="390" stroke="#bfbfbf" stroke-width="1" stroke-dasharray="1.5,2.5"/><line x1="434.8" y1="263" x2="434.8" y2="390" stroke="#bfbfbf" stroke-width="1" stroke-dasharray="1.5,2.5"/><line x1="455.4" y1="263" x2="455.4" y2="390" stroke="#bfbfbf" stroke-width="1" stroke-dasharray="1.5,2.5"/><line x1="476.1" y1="263" x2="476.1" y2="390" stroke="#bfbfbf" stroke-width="1" stroke-dasharray="1.5,2.5"/><line x1="496.7" y1="263" x2="496.7" y2="390" stroke="#bfbfbf" stroke-width="1" stroke-dasharray="1.5,2.5"/><line x1="517.3" y1="263" x2="517.3" y2="390" stroke="#bfbfbf" stroke-width="1" stroke-dasharray="1.5,2.5"/><line x1="537.9" y1="263" x2="537.9" y2="390" stroke="#bfbfbf" stroke-width="1" stroke-dasharray="1.5,2.5"/><line x1="558.5" y1="263" x2="558.5" y2="390" stroke="#bfbfbf" stroke-width="1" stroke-dasharray="1.5,2.5"/><line x1="188" y1="270.5" x2="567" y2="270.5" stroke="#bfbfbf" stroke-width="1" stroke-dasharray="1.5,2.5"/><line x1="188" y1="295" x2="567" y2="295" stroke="#bfbfbf" stroke-width="1" stroke-dasharray="1.5,2.5"/><line x1="188" y1="319" x2="567" y2="319" stroke="#bfbfbf" stroke-width="1" stroke-dasharray="1.5,2.5"/><line x1="188" y1="343" x2="567" y2="343" stroke="#bfbfbf" stroke-width="1" stroke-dasharray="1.5,2.5"/><line x1="188" y1="367" x2="567" y2="367" stroke="#bfbfbf" stroke-width="1" stroke-dasharray="1.5,2.5"/><rect x="187.5" y="262.5" width="379" height="128" fill="none" stroke="#c8c8c8" stroke-width="1"/><line x1="188" y1="345.5" x2="567" y2="345.5" stroke="#7a8c9c" stroke-width="1"/></svg>
<div class="t" style="left:570px;top:265.7px;font-size:7.00px;color:#e8e8e8;-webkit-text-stroke:0;transform:scaleX(0.805);transform-origin:left">1.1105</div>
<div class="t" style="left:570px;top:290px;font-size:7.00px;color:#e8e8e8;-webkit-text-stroke:0;transform:scaleX(0.805);transform-origin:left">1.1090</div>
<div class="t" style="left:570px;top:314px;font-size:7.00px;color:#e8e8e8;-webkit-text-stroke:0;transform:scaleX(0.805);transform-origin:left">1.1075</div>
<div class="t" style="left:570px;top:362px;font-size:7.00px;color:#e8e8e8;-webkit-text-stroke:0;transform:scaleX(0.805);transform-origin:left">1.1045</div>
<div class="a" style="left:568px;top:342px;width:23px;height:7px;background:#8c9eb4"></div>
<div class="t" style="left:570px;top:340.5px;font-size:7.00px;color:#1a2636;-webkit-text-stroke:0;transform:scaleX(0.805);transform-origin:left">1.1058</div>
<svg style="left:190px;top:266px" width="22" height="9"><rect x="0.5" y="0.5" width="9" height="8" fill="#f4f4f4" stroke="#d8d8d8"/><rect x="1.5" y="1.5" width="3" height="6" fill="#f0a8b0"/><rect x="5.5" y="1.5" width="3" height="6" fill="#a8b0f0"/><rect x="11" y="0.5" width="5" height="8" fill="#3848d8"/><rect x="16" y="0.5" width="5" height="8" fill="#e03838"/><path d="M14 2L16 4.5L18 2M16 4.5V7" stroke="#fff" stroke-width="0.9" fill="none"/></svg>
<div class="t" style="left:214px;top:265px;font-size:7.50px;color:#e4e4e4;-webkit-text-stroke:0;;transform:scaleX(0.830);transform-origin:left">EURUSD,H1</div>
<div class="t" style="left:187px;top:392px;font-size:7.00px;color:#e8e8e8;-webkit-text-stroke:0;transform:scaleX(0.832);transform-origin:left">31 Jan 2020</div>
<div class="t" style="left:228px;top:392px;font-size:7.00px;color:#e8e8e8;-webkit-text-stroke:0;transform:scaleX(0.834);transform-origin:left">3 Feb 02:00</div>
<div class="t" style="left:269px;top:392px;font-size:7.00px;color:#e8e8e8;-webkit-text-stroke:0;transform:scaleX(0.834);transform-origin:left">3 Feb 06:00</div>
<div class="t" style="left:310px;top:392px;font-size:7.00px;color:#e8e8e8;-webkit-text-stroke:0;transform:scaleX(0.834);transform-origin:left">3 Feb 10:00</div>
<div class="t" style="left:351px;top:392px;font-size:7.00px;color:#e8e8e8;-webkit-text-stroke:0;transform:scaleX(0.834);transform-origin:left">3 Feb 14:00</div>
<div class="t" style="left:393px;top:392px;font-size:7.00px;color:#e8e8e8;-webkit-text-stroke:0;transform:scaleX(0.834);transform-origin:left">3 Feb 18:00</div>
<div class="t" style="left:434px;top:392px;font-size:7.00px;color:#e8e8e8;-webkit-text-stroke:0;transform:scaleX(0.834);transform-origin:left">3 Feb 22:00</div>
<div class="t" style="left:475px;top:392px;font-size:7.00px;color:#e8e8e8;-webkit-text-stroke:0;transform:scaleX(0.834);transform-origin:left">4 Feb 02:00</div>
<div class="t" style="left:517px;top:392px;font-size:7.00px;color:#e8e8e8;-webkit-text-stroke:0;transform:scaleX(0.834);transform-origin:left">4 Feb 06:00</div>
<svg style="left:0;top:0" width="900" height="558"><defs><clipPath id="ce"><rect x="188" y="263" width="378" height="127"/></clipPath></defs><g clip-path="url(#ce)"><path d="M188.0 286 V294 M184.0 291.0 H188.0 M188.0 291.0 H192.0" stroke="#22dd22" stroke-width="1.6" fill="none"/><path d="M198.0 281 V294 M194.0 292.0 H198.0 M198.0 286.5 H202.0" stroke="#22dd22" stroke-width="1.6" fill="none"/><path d="M208.0 283 V306 M204.0 283.0 H208.0 M208.0 301.0 H212.0" stroke="#22dd22" stroke-width="1.6" fill="none"/><path d="M218.0 291 V299 M214.0 298.7 H218.0 M218.0 293.7 H222.0" stroke="#22dd22" stroke-width="1.6" fill="none"/><path d="M228.0 295 V311 M224.0 295.8 H228.0 M228.0 306.0 H232.0" stroke="#22dd22" stroke-width="1.6" fill="none"/><path d="M238.6 296 V307 M234.6 307.0 H238.6 M238.6 303.0 H242.6" stroke="#22dd22" stroke-width="1.6" fill="none"/><path d="M249.0 301 V307 M245.0 303.0 H249.0 M249.0 305.0 H253.0" stroke="#22dd22" stroke-width="1.6" fill="none"/><path d="M259.0 301 V308 M255.0 306.0 H259.0 M259.0 304.0 H263.0" stroke="#22dd22" stroke-width="1.6" fill="none"/><path d="M269.6 300 V307 M265.6 305.0 H269.6 M269.6 304.0 H273.6" stroke="#22dd22" stroke-width="1.6" fill="none"/><path d="M280.0 300 V306 M276.0 302.0 H280.0 M280.0 304.0 H284.0" stroke="#22dd22" stroke-width="1.6" fill="none"/><path d="M290.0 300 V306 M286.0 300.0 H290.0 M290.0 303.0 H294.0" stroke="#22dd22" stroke-width="1.6" fill="none"/><path d="M300.7 300 V325 M296.7 300.0 H300.7 M300.7 316.6 H304.7" stroke="#22dd22" stroke-width="1.6" fill="none"/><path d="M311.0 310 V331 M307.0 316.3 H311.0 M311.0 310.7 H315.0" stroke="#22dd22" stroke-width="1.6" fill="none"/><path d="M321.0 317 V341 M317.0 337.8 H321.0 M321.0 328.3 H325.0" stroke="#22dd22" stroke-width="1.6" fill="none"/><path d="M331.7 319 V333 M327.7 329.1 H331.7 M331.7 331.3 H335.7" stroke="#22dd22" stroke-width="1.6" fill="none"/><path d="M342.0 328 V341 M338.0 337.3 H342.0 M342.0 340.0 H346.0" stroke="#22dd22" stroke-width="1.6" fill="none"/><path d="M352.0 329 V338 M348.0 332.6 H352.0 M352.0 336.2 H356.0" stroke="#22dd22" stroke-width="1.6" fill="none"/><path d="M362.8 331 V336 M358.8 333.2 H362.8 M362.8 335.7 H366.8" stroke="#22dd22" stroke-width="1.6" fill="none"/><path d="M373.0 333 V360 M369.0 356.7 H373.0 M373.0 335.6 H377.0" stroke="#22dd22" stroke-width="1.6" fill="none"/><path d="M383.4 341 V380 M379.4 346.3 H383.4 M383.4 349.5 H387.4" stroke="#22dd22" stroke-width="1.6" fill="none"/><path d="M393.8 336 V352 M389.8 351.4 H393.8 M393.8 343.0 H397.8" stroke="#22dd22" stroke-width="1.6" fill="none"/><path d="M403.8 329 V341 M399.8 336.5 H403.8 M403.8 332.6 H407.8" stroke="#22dd22" stroke-width="1.6" fill="none"/><path d="M414.0 331 V343 M410.0 337.1 H414.0 M414.0 335.6 H418.0" stroke="#22dd22" stroke-width="1.6" fill="none"/><path d="M424.5 331 V341 M420.5 334.5 H424.5 M424.5 336.9 H428.5" stroke="#22dd22" stroke-width="1.6" fill="none"/><path d="M434.8 334 V347 M430.8 341.6 H434.8 M434.8 345.8 H438.8" stroke="#22dd22" stroke-width="1.6" fill="none"/><path d="M445.0 334 V345 M441.0 341.5 H445.0 M445.0 344.2 H449.0" stroke="#22dd22" stroke-width="1.6" fill="none"/><path d="M455.5 336 V345 M451.5 343.7 H455.5 M455.5 344.9 H459.5" stroke="#22dd22" stroke-width="1.6" fill="none"/><path d="M465.9 334 V341 M461.9 338.7 H465.9 M465.9 335.1 H469.9" stroke="#22dd22" stroke-width="1.6" fill="none"/><path d="M476.0 336 V343 M472.0 342.0 H476.0 M476.0 342.8 H480.0" stroke="#22dd22" stroke-width="1.6" fill="none"/><path d="M486.5 331 V341 M482.5 340.0 H486.5 M486.5 336.7 H490.5" stroke="#22dd22" stroke-width="1.6" fill="none"/><path d="M497.0 338 V345 M493.0 343.0 H497.0 M497.0 339.5 H501.0" stroke="#22dd22" stroke-width="1.6" fill="none"/><path d="M507.0 340 V347 M503.0 345.8 H507.0 M507.0 344.0 H511.0" stroke="#22dd22" stroke-width="1.6" fill="none"/><path d="M517.6 334 V345 M513.6 337.1 H517.6 M517.6 334.7 H521.6" stroke="#22dd22" stroke-width="1.6" fill="none"/><path d="M528.0 334 V343 M524.0 341.7 H528.0 M528.0 342.9 H532.0" stroke="#22dd22" stroke-width="1.6" fill="none"/><path d="M538.0 334 V345 M534.0 335.0 H538.0 M538.0 342.8 H542.0" stroke="#22dd22" stroke-width="1.6" fill="none"/><path d="M548.6 341 V345 M544.6 342.6 H548.6 M548.6 341.6 H552.6" stroke="#22dd22" stroke-width="1.6" fill="none"/><circle cx="198" cy="333" r="1.8" fill="#22ee22"/><circle cx="208" cy="323.8" r="1.8" fill="#22ee22"/><circle cx="218" cy="316" r="1.8" fill="#22ee22"/><circle cx="228" cy="310" r="1.8" fill="#22ee22"/><circle cx="238.6" cy="309.5" r="1.8" fill="#22ee22"/><circle cx="249" cy="309.5" r="1.8" fill="#22ee22"/><circle cx="259" cy="309.5" r="1.8" fill="#22ee22"/><circle cx="269.6" cy="309.5" r="1.8" fill="#22ee22"/><circle cx="280" cy="309.5" r="1.8" fill="#22ee22"/><circle cx="290" cy="306.6" r="1.8" fill="#22ee22"/><circle cx="300.7" cy="282" r="1.8" fill="#22ee22"/><circle cx="311" cy="283" r="1.8" fill="#22ee22"/><circle cx="321" cy="284.5" r="1.8" fill="#22ee22"/><circle cx="331.7" cy="288.7" r="1.8" fill="#22ee22"/><circle cx="342" cy="291.4" r="1.8" fill="#22ee22"/><circle cx="352" cy="296" r="1.8" fill="#22ee22"/><circle cx="362.8" cy="299.4" r="1.8" fill="#22ee22"/><circle cx="373" cy="302.8" r="1.8" fill="#22ee22"/><circle cx="383.4" cy="309.7" r="1.8" fill="#22ee22"/><circle cx="393.8" cy="317" r="1.8" fill="#22ee22"/><circle cx="403.8" cy="326" r="1.8" fill="#22ee22"/><circle cx="414" cy="329.4" r="1.8" fill="#22ee22"/><circle cx="424.5" cy="329.4" r="1.8" fill="#22ee22"/><circle cx="434.8" cy="333" r="1.8" fill="#22ee22"/><circle cx="445" cy="333" r="1.8" fill="#22ee22"/><circle cx="455.5" cy="334.5" r="1.8" fill="#22ee22"/><circle cx="465.9" cy="378.7" r="1.8" fill="#22ee22"/><circle cx="476" cy="377.7" r="1.8" fill="#22ee22"/><circle cx="486.5" cy="377.7" r="1.8" fill="#22ee22"/><circle cx="497" cy="376" r="1.8" fill="#22ee22"/><circle cx="507" cy="374" r="1.8" fill="#22ee22"/><circle cx="517.6" cy="372.5" r="1.8" fill="#22ee22"/><circle cx="528" cy="370.8" r="1.8" fill="#22ee22"/><circle cx="538" cy="369" r="1.8" fill="#22ee22"/><circle cx="548.6" cy="368" r="1.8" fill="#22ee22"/><path d="M188.0 323.0 L199.3 318.8 L208.0 317.4 L228.0 298.7 L235.2 297.3 L249.5 295.1 L271.0 294.4 L290.4 295.8 L305.0 304.4 L321.4 310.4 L362.8 320.8 L386.9 338.0 L400.3 348.3" stroke="#c01818" stroke-width="1.2" fill="none"/><path d="M188.0 334.6 L199.3 327.4 L208.0 320.2 L218.0 314.5 L228.0 299.4 L239.5 298.7 L271.0 298.7 L290.4 298.0 L305.0 305.9 L331.7 313.9 L362.8 320.8 L386.9 332.8 L400.3 348.3" stroke="#b01010" stroke-width="1" fill="none"/><path d="M390.0 341.4 L424.5 340.8 L465.9 341.4 L493.4 340.8 L548.6 341.4" stroke="#c01818" stroke-width="1.2" fill="none"/><path d="M390.0 348.3 L407.2 352.8 L465.9 354.2 L476.2 341.4 L493.4 340.4 L548.6 341.4" stroke="#b01010" stroke-width="1" fill="none"/><path d="M186.9 346.6 L311.0 346.6 L331.7 341.4 L352.4 336.3 L373.1 324.2 L386.9 329.4 L400.3 329.4" stroke="#1020c0" stroke-width="1.5" fill="none"/><path d="M390.0 330.4 L459.0 330.4 L472.8 334.6 L493.4 338.0 L548.6 339.7" stroke="#1020c0" stroke-width="1.5" fill="none"/><path d="M186.9 341.4 L193.8 338.0 L214.5 341.4 L235.2 343.2 L249.0 340.8 L269.7 343.2 L280.0 346.6" stroke="#20a020" stroke-width="1" fill="none"/><path d="M383.1 393.2 L390.0 388.0 L410.7 353.5 L441.7 344.9 L476.2 334.6 L496.9 321.8 L521.0 320.8 L559.0 320.8" stroke="#c8783a" stroke-width="1" fill="none" stroke-dasharray="2,2"/><path d="M383.1 375.9 L390.0 374.2 L414.1 370.8 L455.5 364.9 L493.4 355.2 L559.0 353.5" stroke="#a0a0a0" stroke-width="1" fill="none" stroke-dasharray="2,2"/><line x1="393.8" y1="381.7" x2="393.8" y2="373.7" stroke="#b06a30" stroke-width="1" stroke-dasharray="2,2"/><line x1="404.1" y1="364.5" x2="404.1" y2="372.2" stroke="#b06a30" stroke-width="1" stroke-dasharray="2,2"/><line x1="414.4" y1="352.5" x2="414.4" y2="370.7" stroke="#b06a30" stroke-width="1" stroke-dasharray="2,2"/><line x1="424.7" y1="349.6" x2="424.7" y2="369.3" stroke="#b06a30" stroke-width="1" stroke-dasharray="2,2"/><line x1="435.0" y1="346.8" x2="435.0" y2="367.8" stroke="#b06a30" stroke-width="1" stroke-dasharray="2,2"/><line x1="445.3" y1="343.8" x2="445.3" y2="366.3" stroke="#b06a30" stroke-width="1" stroke-dasharray="2,2"/><line x1="455.6" y1="340.7" x2="455.6" y2="364.9" stroke="#b06a30" stroke-width="1" stroke-dasharray="2,2"/><line x1="465.9" y1="337.6" x2="465.9" y2="362.3" stroke="#b06a30" stroke-width="1" stroke-dasharray="2,2"/><line x1="476.2" y1="334.6" x2="476.2" y2="359.6" stroke="#b06a30" stroke-width="1" stroke-dasharray="2,2"/><line x1="486.5" y1="328.2" x2="486.5" y2="357.0" stroke="#b06a30" stroke-width="1" stroke-dasharray="2,2"/><line x1="496.8" y1="321.9" x2="496.8" y2="355.2" stroke="#b06a30" stroke-width="1" stroke-dasharray="2,2"/><line x1="507.1" y1="321.4" x2="507.1" y2="354.9" stroke="#b06a30" stroke-width="1" stroke-dasharray="2,2"/><line x1="517.4" y1="320.9" x2="517.4" y2="354.6" stroke="#b06a30" stroke-width="1" stroke-dasharray="2,2"/><line x1="527.7" y1="320.8" x2="527.7" y2="354.3" stroke="#b06a30" stroke-width="1" stroke-dasharray="2,2"/><path d="M370.0 388.0 L393.0 371.0 L400.0 368.0" stroke="#c8783a" stroke-width="1" fill="none" stroke-dasharray="2,2"/></g></svg>
<div class="a" style="left:604px;top:73px;width:295px;height:358px;background:#f0f0f0"></div>
<div class="a" style="left:604px;top:73px;width:295px;height:1px;background:#c8c8c8"></div>
<div class="a" style="left:605px;top:74px;width:283px;height:9px;background:linear-gradient(90deg,#d4e0ee,#d2e0f0)"></div>
<div class="a" style="left:888px;top:74px;width:11px;height:9px;background:#ececec"></div>
<div class="a" style="left:604px;top:83px;width:295px;height:1px;background:#c8c8c8"></div>
<div class="a" style="left:604px;top:100px;width:295px;height:1px;background:#d0d0d0"></div>
<div class="t" style="left:607px;top:74px;font-size:8.50px;color:#222;;transform:scaleX(0.755);transform-origin:left">EURUSD, Euro vs US Dollar</div>
<svg style="left:891px;top:76px" width="5" height="5"><path d="M0.5 0.5L4.5 4.5M4.5 0.5L0.5 4.5" stroke="#111" stroke-width="1.3"/></svg>
<div class="a" style="left:606px;top:84px;width:16px;height:15px;background:#cce4f7;border:1px solid #a8cdea"></div>
<svg style="left:609px;top:87px" width="10" height="10"><rect x="0.5" y="0.5" width="9" height="9" fill="#fff" stroke="#3a7ad8"/><path d="M2 7L4 3L6 6L8 2" stroke="#e03030" stroke-width="1" fill="none"/><path d="M2 8.5L4 6L6 8L8 5.5" stroke="#3a7ad8" stroke-width="0.8" fill="none"/></svg>
<svg style="left:626px;top:86px" width="12" height="12"><rect x="0.5" y="0.5" width="8" height="9" fill="#fff" stroke="#888"/><path d="M0.5 3.5H8.5M0.5 6.5H8.5M3.5 0.5V9.5" stroke="#888" stroke-width="0.8"/><circle cx="8.5" cy="8.5" r="3" fill="#fff" stroke="#777"/></svg>
<div class="a" style="left:645px;top:86px;width:1px;height:13px;background:#c0c0c0"></div>
<svg style="left:650px;top:86px" width="13" height="12"><rect x="0.5" y="0.5" width="10" height="8" fill="#e8f4fc" stroke="#2a7ad0"/><rect x="0.5" y="0.5" width="10" height="1.5" fill="#2a7ad0"/><path d="M2 7L4 4.5L6 5.5L8 3.5" stroke="#30a050" stroke-width="1" fill="none"/><path d="M7.5 7.5H10A1.8 1.8 0 0 1 10 11.2H7.5" stroke="#e03030" stroke-width="1.6" fill="none"/></svg>
<svg style="left:670px;top:86px" width="8" height="12"><rect x="1" y="1" width="6" height="10" rx="2" fill="none" stroke="#aaa"/><path d="M1 4H7M1 8H7" stroke="#aaa"/></svg>
<svg style="left:687px;top:86px" width="11" height="12"><path d="M3 1V11M8 1V11M1 3H3M8 9H10" stroke="#aaa" stroke-width="1" fill="none"/></svg>
<div class="a" style="left:702px;top:86px;width:1px;height:13px;background:#c0c0c0"></div>
<div class="a" style="left:705px;top:84px;width:17px;height:15px;background:#cce4f7;border:1px solid #a8cdea"></div>
<svg style="left:707px;top:87px" width="13" height="10"><path d="M1 3H4L6 1L8 5L10 3H12" stroke="#e03030" stroke-width="1" fill="none"/><path d="M1 7H4L6 5L8 9L10 7H12" stroke="#3a7ad8" stroke-width="1" fill="none"/></svg>
<div class="a" style="left:723px;top:84px;width:17px;height:15px;background:#cce4f7;border:1px solid #a8cdea"></div>
<svg style="left:725px;top:87px" width="13" height="10"><circle cx="4" cy="3.5" r="2.5" fill="#bbb"/><circle cx="9" cy="6.5" r="2.8" fill="#aaa"/><circle cx="5" cy="7" r="2.5" fill="#c8c8c8"/></svg>
<svg style="left:744px;top:86px" width="13" height="13"><circle cx="5.5" cy="5.5" r="4.3" fill="#fff" stroke="#2a70d0" stroke-width="1.4"/><path d="M8.5 8.5L12 12" stroke="#c89020" stroke-width="1.8"/><circle cx="5.5" cy="5.5" r="1.8" fill="#2a70d0"/></svg>
<svg style="left:762px;top:86px" width="13" height="13"><circle cx="5.5" cy="5.5" r="4.3" fill="#fff" stroke="#2a70d0" stroke-width="1.4"/><path d="M8.5 8.5L12 12" stroke="#c89020" stroke-width="1.8"/><path d="M3.5 5.5H7.5" stroke="#2a70d0" stroke-width="1.4"/></svg>
<div class="a" style="left:605px;top:100px;width:147px;height:0px;"></div>
<div class="a" style="left:605px;top:101px;width:147px;height:150px;background:#fff"></div>
<div class="a" style="left:752px;top:101px;width:1px;height:150px;background:#c8c8c8"></div>
<div class="a" style="left:605px;top:101px;width:294px;height:0px;"></div>
<div class="a" style="left:752px;top:101px;width:146px;height:16px;background:#fff"></div>
<div class="a" style="left:825px;top:101px;width:1px;height:16px;background:#e6e6e6"></div>
<div class="t" style="left:688px;width:200px;text-align:center;top:105px;font-size:8.50px;color:#333;transform:scaleX(0.894);transform-origin:center">Price</div>
<div class="t" style="left:761px;width:200px;text-align:center;top:105px;font-size:8.50px;color:#333;transform:scaleX(0.906);transform-origin:center">Trade</div>
<div class="a" style="left:753px;top:117px;width:72px;height:12px;background:#fbe3fb"></div>
<div class="a" style="left:753px;top:129px;width:145px;height:1px;background:#dadada"></div>
<div class="a" style="left:826px;top:117px;width:72px;height:12px;background:#fff"></div>
<div class="t" style="left:689px;width:200px;text-align:center;top:119px;font-size:8.50px;color:#222;letter-spacing:0.1px;transform:scaleX(0.808);transform-origin:center">1. 1064</div>
<div class="a" style="left:827px;top:118px;width:10px;height:11px;background:#fff;border:1px solid #d8d8d8"></div>
<svg style="left:829px;top:121px" width="6" height="4"><path d="M0.5 0.5L3 3L5.5 0.5" stroke="#d02020" stroke-width="1.2" fill="none"/></svg>
<div class="a" style="left:886px;top:118px;width:11px;height:11px;background:#fff;border:1px solid #d8d8d8"></div>
<svg style="left:889px;top:121px" width="6" height="4"><path d="M0.5 3.5L3 1L5.5 3.5" stroke="#2030c0" stroke-width="1.1" fill="none"/></svg>
<div class="a" style="left:753px;top:130px;width:72px;height:12px;background:#fbe3fb"></div>
<div class="a" style="left:753px;top:142px;width:145px;height:1px;background:#dadada"></div>
<div class="a" style="left:826px;top:130px;width:72px;height:12px;background:#fff"></div>
<div class="t" style="left:689px;width:200px;text-align:center;top:132px;font-size:8.50px;color:#222;letter-spacing:0.1px;transform:scaleX(0.808);transform-origin:center">1. 1063</div>
<div class="a" style="left:827px;top:131px;width:10px;height:11px;background:#fff;border:1px solid #d8d8d8"></div>
<svg style="left:829px;top:134px" width="6" height="4"><path d="M0.5 0.5L3 3L5.5 0.5" stroke="#d02020" stroke-width="1.2" fill="none"/></svg>
<div class="a" style="left:886px;top:131px;width:11px;height:11px;background:#fff;border:1px solid #d8d8d8"></div>
<svg style="left:889px;top:134px" width="6" height="4"><path d="M0.5 3.5L3 1L5.5 3.5" stroke="#888" stroke-width="1.1" fill="none"/></svg>
<div class="a" style="left:753px;top:143px;width:72px;height:12px;background:#fbe3fb"></div>
<div class="a" style="left:753px;top:155px;width:145px;height:1px;background:#dadada"></div>
<div class="a" style="left:826px;top:143px;width:72px;height:12px;background:#fff"></div>
<div class="t" style="left:689px;width:200px;text-align:center;top:145px;font-size:8.50px;color:#222;letter-spacing:0.1px;transform:scaleX(0.808);transform-origin:center">1. 1062</div>
<div class="a" style="left:827px;top:144px;width:10px;height:11px;background:#fff;border:1px solid #d8d8d8"></div>
<svg style="left:829px;top:147px" width="6" height="4"><path d="M0.5 0.5L3 3L5.5 0.5" stroke="#d02020" stroke-width="1.2" fill="none"/></svg>
<div class="a" style="left:886px;top:144px;width:11px;height:11px;background:#fff;border:1px solid #d8d8d8"></div>
<svg style="left:889px;top:147px" width="6" height="4"><path d="M0.5 3.5L3 1L5.5 3.5" stroke="#888" stroke-width="1.1" fill="none"/></svg>
<div class="a" style="left:753px;top:156px;width:72px;height:12px;background:#fbe3fb"></div>
<div class="a" style="left:753px;top:168px;width:145px;height:1px;background:#dadada"></div>
<div class="a" style="left:826px;top:156px;width:72px;height:12px;background:#fff"></div>
<div class="t" style="left:689px;width:200px;text-align:center;top:158px;font-size:8.50px;color:#222;letter-spacing:0.1px;transform:scaleX(0.808);transform-origin:center">1. 1061</div>
<div class="a" style="left:827px;top:157px;width:10px;height:11px;background:#fff;border:1px solid #d8d8d8"></div>
<svg style="left:829px;top:160px" width="6" height="4"><path d="M0.5 0.5L3 3L5.5 0.5" stroke="#d02020" stroke-width="1.2" fill="none"/></svg>
<div class="a" style="left:886px;top:157px;width:11px;height:11px;background:#fff;border:1px solid #d8d8d8"></div>
<svg style="left:889px;top:160px" width="6" height="4"><path d="M0.5 3.5L3 1L5.5 3.5" stroke="#888" stroke-width="1.1" fill="none"/></svg>
<div class="a" style="left:752px;top:168px;width:146px;height:1.5px;background:#444"></div>
<div class="a" style="left:753px;top:169px;width:72px;height:12px;background:#d5e4f7"></div>
<div class="a" style="left:753px;top:181px;width:145px;height:1px;background:#dadada"></div>
<div class="a" style="left:826px;top:169px;width:72px;height:12px;background:#fff"></div>
<div class="t" style="left:689px;width:200px;text-align:center;top:171px;font-size:8.50px;color:#222;letter-spacing:0.1px;transform:scaleX(0.808);transform-origin:center">1. 1058</div>
<div class="a" style="left:827px;top:170px;width:10px;height:11px;background:#fff;border:1px solid #d8d8d8"></div>
<svg style="left:829px;top:173px" width="6" height="4"><path d="M0.5 0.5L3 3L5.5 0.5" stroke="#999" stroke-width="1.2" fill="none"/></svg>
<div class="a" style="left:886px;top:170px;width:11px;height:11px;background:#fff;border:1px solid #d8d8d8"></div>
<svg style="left:889px;top:173px" width="6" height="4"><path d="M0.5 3.5L3 1L5.5 3.5" stroke="#2030c0" stroke-width="1.1" fill="none"/></svg>
<div class="a" style="left:753px;top:182px;width:72px;height:12px;background:#d5e4f7"></div>
<div class="a" style="left:753px;top:194px;width:145px;height:1px;background:#dadada"></div>
<div class="a" style="left:826px;top:182px;width:72px;height:12px;background:#fff"></div>
<div class="t" style="left:689px;width:200px;text-align:center;top:184px;font-size:8.50px;color:#222;letter-spacing:0.1px;transform:scaleX(0.808);transform-origin:center">1. 1057</div>
<div class="a" style="left:827px;top:183px;width:10px;height:11px;background:#fff;border:1px solid #d8d8d8"></div>
<svg style="left:829px;top:186px" width="6" height="4"><path d="M0.5 0.5L3 3L5.5 0.5" stroke="#999" stroke-width="1.2" fill="none"/></svg>
<div class="a" style="left:886px;top:183px;width:11px;height:11px;background:#fff;border:1px solid #d8d8d8"></div>
<svg style="left:889px;top:186px" width="6" height="4"><path d="M0.5 3.5L3 1L5.5 3.5" stroke="#2030c0" stroke-width="1.1" fill="none"/></svg>
<div class="a" style="left:753px;top:195px;width:72px;height:12px;background:#d5e4f7"></div>
<div class="a" style="left:753px;top:207px;width:145px;height:1px;background:#dadada"></div>
<div class="a" style="left:826px;top:195px;width:72px;height:12px;background:#fff"></div>
<div class="t" style="left:689px;width:200px;text-align:center;top:197px;font-size:8.50px;color:#222;letter-spacing:0.1px;transform:scaleX(0.808);transform-origin:center">1. 1056</div>
<div class="a" style="left:827px;top:196px;width:10px;height:11px;background:#fff;border:1px solid #d8d8d8"></div>
<svg style="left:829px;top:199px" width="6" height="4"><path d="M0.5 0.5L3 3L5.5 0.5" stroke="#999" stroke-width="1.2" fill="none"/></svg>
<div class="a" style="left:886px;top:196px;width:11px;height:11px;background:#fff;border:1px solid #d8d8d8"></div>
<svg style="left:889px;top:199px" width="6" height="4"><path d="M0.5 3.5L3 1L5.5 3.5" stroke="#2030c0" stroke-width="1.1" fill="none"/></svg>
<div class="a" style="left:753px;top:208px;width:72px;height:12px;background:#d5e4f7"></div>
<div class="a" style="left:753px;top:220px;width:145px;height:1px;background:#dadada"></div>
<div class="a" style="left:826px;top:208px;width:72px;height:12px;background:#fff"></div>
<div class="t" style="left:689px;width:200px;text-align:center;top:210px;font-size:8.50px;color:#222;letter-spacing:0.1px;transform:scaleX(0.808);transform-origin:center">1. 1055</div>
<div class="a" style="left:827px;top:209px;width:10px;height:11px;background:#fff;border:1px solid #d8d8d8"></div>
<svg style="left:829px;top:212px" width="6" height="4"><path d="M0.5 0.5L3 3L5.5 0.5" stroke="#d02020" stroke-width="1.2" fill="none"/></svg>
<div class="a" style="left:886px;top:209px;width:11px;height:11px;background:#fff;border:1px solid #d8d8d8"></div>
<svg style="left:889px;top:212px" width="6" height="4"><path d="M0.5 3.5L3 1L5.5 3.5" stroke="#2030c0" stroke-width="1.1" fill="none"/></svg>
<div class="a" style="left:753px;top:222px;width:146px;height:29px;background:#f0f0f0"></div>
<div class="a" style="left:753px;top:224px;width:12px;height:13px;background:#e8e8e8"></div>
<svg style="left:757px;top:229px" width="5" height="3"><path d="M0 0H5L2.5 3Z" fill="#222"/></svg>
<div class="a" style="left:789px;top:224px;width:12px;height:13px;background:#e8e8e8"></div>
<svg style="left:793px;top:229px" width="5" height="3"><path d="M0 3H5L2.5 0Z" fill="#222"/></svg>
<div class="a" style="left:802px;top:224px;width:12px;height:13px;background:#e8e8e8"></div>
<svg style="left:806px;top:229px" width="5" height="3"><path d="M0 0H5L2.5 3Z" fill="#222"/></svg>
<div class="a" style="left:838px;top:224px;width:12px;height:13px;background:#e8e8e8"></div>
<svg style="left:842px;top:229px" width="5" height="3"><path d="M0 3H5L2.5 0Z" fill="#222"/></svg>
<div class="a" style="left:851px;top:224px;width:12px;height:13px;background:#e8e8e8"></div>
<svg style="left:855px;top:229px" width="5" height="3"><path d="M0 0H5L2.5 3Z" fill="#222"/></svg>
<div class="a" style="left:887px;top:224px;width:12px;height:13px;background:#e8e8e8"></div>
<svg style="left:891px;top:229px" width="5" height="3"><path d="M0 3H5L2.5 0Z" fill="#222"/></svg>
<div class="a" style="left:765px;top:224px;width:23px;height:13px;background:#fff;border:1px solid #b8b8b8"></div>
<div class="t" style="left:767px;top:226px;font-size:8.50px;color:#999;transform:scaleX(0.950);transform-origin:left">sl</div>
<div class="t" style="right:114px;top:226px;font-size:8.50px;color:#222;transform:scaleX(0.800);transform-origin:right">0</div>
<div class="a" style="left:814px;top:224px;width:23px;height:13px;background:#fff;border:1px solid #b8b8b8"></div>
<div class="t" style="right:65px;top:226px;font-size:8.50px;color:#222;transform:scaleX(0.807);transform-origin:right">3.00</div>
<div class="a" style="left:863px;top:224px;width:22px;height:13px;background:#fff;border:1px solid #b8b8b8"></div>
<div class="t" style="left:865px;top:226px;font-size:8.50px;color:#999;transform:scaleX(0.950);transform-origin:left">tp</div>
<div class="t" style="right:17px;top:226px;font-size:8.50px;color:#222;transform:scaleX(0.800);transform-origin:right">0</div>
<div class="a" style="left:754px;top:238px;width:47px;height:12px;background:linear-gradient(#f4a0a0,#e47070);border:1px solid #d07070"></div>
<div class="t" style="left:677px;width:200px;text-align:center;top:240px;font-size:8.50px;color:#4a1010;transform:scaleX(0.874);transform-origin:center">Sell</div>
<div class="a" style="left:801px;top:238px;width:49px;height:12px;background:#e8e8e8"></div>
<div class="t" style="left:725px;width:200px;text-align:center;top:240px;font-size:8.50px;color:#888;transform:scaleX(0.896);transform-origin:center">Close</div>
<div class="a" style="left:850px;top:238px;width:47px;height:12px;background:linear-gradient(#a8c0ee,#7c9ade);border:1px solid #7890d0"></div>
<div class="t" style="left:773px;width:200px;text-align:center;top:240px;font-size:8.50px;color:#182860;transform:scaleX(0.876);transform-origin:center">Buy</div>
<div class="a" style="left:605px;top:221px;width:147px;height:1px;background:#d8d8d8"></div>
<div class="a" style="left:604px;top:252px;width:295px;height:1px;background:#c8c8c8"></div>
<div class="a" style="left:605px;top:253px;width:283px;height:9px;background:linear-gradient(90deg,#d4e0ee,#d2e0f0)"></div>
<div class="a" style="left:888px;top:253px;width:11px;height:9px;background:#ececec"></div>
<div class="a" style="left:604px;top:262px;width:295px;height:1px;background:#c8c8c8"></div>
<div class="a" style="left:604px;top:279px;width:295px;height:1px;background:#d0d0d0"></div>
<div class="t" style="left:607px;top:253px;font-size:8.50px;color:#222;;transform:scaleX(0.776);transform-origin:left">GBPUSD, Great Britain Pound vs US Dollar</div>
<svg style="left:891px;top:255px" width="5" height="5"><path d="M0.5 0.5L4.5 4.5M4.5 0.5L0.5 4.5" stroke="#111" stroke-width="1.3"/></svg>
<div class="a" style="left:606px;top:263px;width:16px;height:15px;background:#cce4f7;border:1px solid #a8cdea"></div>
<svg style="left:609px;top:266px" width="10" height="10"><rect x="0.5" y="0.5" width="9" height="9" fill="#fff" stroke="#3a7ad8"/><path d="M2 7L4 3L6 6L8 2" stroke="#e03030" stroke-width="1" fill="none"/><path d="M2 8.5L4 6L6 8L8 5.5" stroke="#3a7ad8" stroke-width="0.8" fill="none"/></svg>
<svg style="left:626px;top:265px" width="12" height="12"><rect x="0.5" y="0.5" width="8" height="9" fill="#fff" stroke="#888"/><path d="M0.5 3.5H8.5M0.5 6.5H8.5M3.5 0.5V9.5" stroke="#888" stroke-width="0.8"/><circle cx="8.5" cy="8.5" r="3" fill="#fff" stroke="#777"/></svg>
<div class="a" style="left:645px;top:265px;width:1px;height:13px;background:#c0c0c0"></div>
<svg style="left:650px;top:265px" width="13" height="12"><rect x="0.5" y="0.5" width="10" height="8" fill="#e8f4fc" stroke="#2a7ad0"/><rect x="0.5" y="0.5" width="10" height="1.5" fill="#2a7ad0"/><path d="M2 7L4 4.5L6 5.5L8 3.5" stroke="#30a050" stroke-width="1" fill="none"/><path d="M7.5 7.5H10A1.8 1.8 0 0 1 10 11.2H7.5" stroke="#e03030" stroke-width="1.6" fill="none"/></svg>
<svg style="left:670px;top:265px" width="8" height="12"><rect x="1" y="1" width="6" height="10" rx="2" fill="none" stroke="#aaa"/><path d="M1 4H7M1 8H7" stroke="#aaa"/></svg>
<svg style="left:687px;top:265px" width="11" height="12"><path d="M3 1V11M8 1V11M1 3H3M8 9H10" stroke="#aaa" stroke-width="1" fill="none"/></svg>
<div class="a" style="left:702px;top:265px;width:1px;height:13px;background:#c0c0c0"></div>
<div class="a" style="left:705px;top:263px;width:17px;height:15px;background:#cce4f7;border:1px solid #a8cdea"></div>
<svg style="left:707px;top:266px" width="13" height="10"><path d="M1 3H4L6 1L8 5L10 3H12" stroke="#e03030" stroke-width="1" fill="none"/><path d="M1 7H4L6 5L8 9L10 7H12" stroke="#3a7ad8" stroke-width="1" fill="none"/></svg>
<div class="a" style="left:723px;top:263px;width:17px;height:15px;background:#cce4f7;border:1px solid #a8cdea"></div>
<svg style="left:725px;top:266px" width="13" height="10"><circle cx="4" cy="3.5" r="2.5" fill="#bbb"/><circle cx="9" cy="6.5" r="2.8" fill="#aaa"/><circle cx="5" cy="7" r="2.5" fill="#c8c8c8"/></svg>
<svg style="left:744px;top:265px" width="13" height="13"><circle cx="5.5" cy="5.5" r="4.3" fill="#fff" stroke="#2a70d0" stroke-width="1.4"/><path d="M8.5 8.5L12 12" stroke="#c89020" stroke-width="1.8"/><circle cx="5.5" cy="5.5" r="1.8" fill="#2a70d0"/></svg>
<svg style="left:762px;top:265px" width="13" height="13"><circle cx="5.5" cy="5.5" r="4.3" fill="#fff" stroke="#2a70d0" stroke-width="1.4"/><path d="M8.5 8.5L12 12" stroke="#c89020" stroke-width="1.8"/><path d="M3.5 5.5H7.5" stroke="#2a70d0" stroke-width="1.4"/></svg>
<div class="a" style="left:605px;top:279px;width:147px;height:0px;"></div>
<div class="a" style="left:605px;top:280px;width:147px;height:147px;background:#fff"></div>
<div class="a" style="left:752px;top:280px;width:1px;height:147px;background:#c8c8c8"></div>
<div class="a" style="left:605px;top:281px;width:294px;height:0px;"></div>
<div class="a" style="left:752px;top:281px;width:146px;height:16px;background:#fff"></div>
<div class="a" style="left:825px;top:281px;width:1px;height:16px;background:#e6e6e6"></div>
<div class="t" style="left:688px;width:200px;text-align:center;top:285px;font-size:8.50px;color:#333;transform:scaleX(0.894);transform-origin:center">Price</div>
<div class="t" style="left:761px;width:200px;text-align:center;top:285px;font-size:8.50px;color:#333;transform:scaleX(0.906);transform-origin:center">Trade</div>
<div class="a" style="left:753px;top:297px;width:72px;height:12px;background:#fbe3fb"></div>
<div class="a" style="left:753px;top:309px;width:145px;height:1px;background:#dadada"></div>
<div class="a" style="left:826px;top:297px;width:72px;height:12px;background:#fff"></div>
<div class="t" style="left:689px;width:200px;text-align:center;top:299px;font-size:8.50px;color:#222;letter-spacing:0.1px;transform:scaleX(0.805);transform-origin:center">1.2998</div>
<div class="a" style="left:827px;top:298px;width:10px;height:11px;background:#fff;border:1px solid #d8d8d8"></div>
<svg style="left:829px;top:301px" width="6" height="4"><path d="M0.5 0.5L3 3L5.5 0.5" stroke="#d02020" stroke-width="1.2" fill="none"/></svg>
<div class="a" style="left:886px;top:298px;width:11px;height:11px;background:#fff;border:1px solid #d8d8d8"></div>
<svg style="left:889px;top:301px" width="6" height="4"><path d="M0.5 3.5L3 1L5.5 3.5" stroke="#888" stroke-width="1.1" fill="none"/></svg>
<div class="a" style="left:753px;top:310px;width:72px;height:12px;background:#fbe3fb"></div>
<div class="a" style="left:753px;top:322px;width:145px;height:1px;background:#dadada"></div>
<div class="a" style="left:826px;top:310px;width:72px;height:12px;background:#fff"></div>
<div class="t" style="left:689px;width:200px;text-align:center;top:312px;font-size:8.50px;color:#222;letter-spacing:0.1px;transform:scaleX(0.805);transform-origin:center">1.2997</div>
<div class="a" style="left:827px;top:311px;width:10px;height:11px;background:#fff;border:1px solid #d8d8d8"></div>
<svg style="left:829px;top:314px" width="6" height="4"><path d="M0.5 0.5L3 3L5.5 0.5" stroke="#d02020" stroke-width="1.2" fill="none"/></svg>
<div class="a" style="left:886px;top:311px;width:11px;height:11px;background:#fff;border:1px solid #d8d8d8"></div>
<svg style="left:889px;top:314px" width="6" height="4"><path d="M0.5 3.5L3 1L5.5 3.5" stroke="#888" stroke-width="1.1" fill="none"/></svg>
<div class="a" style="left:753px;top:323px;width:72px;height:12px;background:#fbe3fb"></div>
<div class="a" style="left:753px;top:335px;width:145px;height:1px;background:#dadada"></div>
<div class="a" style="left:826px;top:323px;width:72px;height:12px;background:#fff"></div>
<div class="t" style="left:689px;width:200px;text-align:center;top:325px;font-size:8.50px;color:#222;letter-spacing:0.1px;transform:scaleX(0.805);transform-origin:center">1.2996</div>
<div class="a" style="left:827px;top:324px;width:10px;height:11px;background:#fff;border:1px solid #d8d8d8"></div>
<svg style="left:829px;top:327px" width="6" height="4"><path d="M0.5 0.5L3 3L5.5 0.5" stroke="#d02020" stroke-width="1.2" fill="none"/></svg>
<div class="a" style="left:886px;top:324px;width:11px;height:11px;background:#fff;border:1px solid #d8d8d8"></div>
<svg style="left:889px;top:327px" width="6" height="4"><path d="M0.5 3.5L3 1L5.5 3.5" stroke="#888" stroke-width="1.1" fill="none"/></svg>
<div class="a" style="left:752px;top:335px;width:146px;height:1.5px;background:#444"></div>
<div class="a" style="left:753px;top:336px;width:72px;height:12px;background:#d5e4f7"></div>
<div class="a" style="left:753px;top:348px;width:145px;height:1px;background:#dadada"></div>
<div class="a" style="left:826px;top:336px;width:72px;height:12px;background:#fff"></div>
<div class="t" style="left:689px;width:200px;text-align:center;top:338px;font-size:8.50px;color:#222;letter-spacing:0.1px;transform:scaleX(0.805);transform-origin:center">1.2993</div>
<div class="a" style="left:827px;top:337px;width:10px;height:11px;background:#fff;border:1px solid #d8d8d8"></div>
<svg style="left:829px;top:340px" width="6" height="4"><path d="M0.5 0.5L3 3L5.5 0.5" stroke="#999" stroke-width="1.2" fill="none"/></svg>
<div class="a" style="left:886px;top:337px;width:11px;height:11px;background:#fff;border:1px solid #d8d8d8"></div>
<svg style="left:889px;top:340px" width="6" height="4"><path d="M0.5 3.5L3 1L5.5 3.5" stroke="#2030c0" stroke-width="1.1" fill="none"/></svg>
<div class="a" style="left:753px;top:349px;width:72px;height:12px;background:#d5e4f7"></div>
<div class="a" style="left:753px;top:361px;width:145px;height:1px;background:#dadada"></div>
<div class="a" style="left:826px;top:349px;width:72px;height:12px;background:#fff"></div>
<div class="t" style="left:689px;width:200px;text-align:center;top:351px;font-size:8.50px;color:#222;letter-spacing:0.1px;transform:scaleX(0.805);transform-origin:center">1.2992</div>
<div class="a" style="left:827px;top:350px;width:10px;height:11px;background:#fff;border:1px solid #d8d8d8"></div>
<svg style="left:829px;top:353px" width="6" height="4"><path d="M0.5 0.5L3 3L5.5 0.5" stroke="#999" stroke-width="1.2" fill="none"/></svg>
<div class="a" style="left:886px;top:350px;width:11px;height:11px;background:#fff;border:1px solid #d8d8d8"></div>
<svg style="left:889px;top:353px" width="6" height="4"><path d="M0.5 3.5L3 1L5.5 3.5" stroke="#2030c0" stroke-width="1.1" fill="none"/></svg>
<div class="a" style="left:753px;top:362px;width:72px;height:12px;background:#d5e4f7"></div>
<div class="a" style="left:753px;top:374px;width:145px;height:1px;background:#dadada"></div>
<div class="a" style="left:826px;top:362px;width:72px;height:12px;background:#fff"></div>
<div class="t" style="left:689px;width:200px;text-align:center;top:364px;font-size:8.50px;color:#222;letter-spacing:0.1px;transform:scaleX(0.805);transform-origin:center">1.2991</div>
<div class="a" style="left:827px;top:363px;width:10px;height:11px;background:#fff;border:1px solid #d8d8d8"></div>
<svg style="left:829px;top:366px" width="6" height="4"><path d="M0.5 0.5L3 3L5.5 0.5" stroke="#999" stroke-width="1.2" fill="none"/></svg>
<div class="a" style="left:886px;top:363px;width:11px;height:11px;background:#fff;border:1px solid #d8d8d8"></div>
<svg style="left:889px;top:366px" width="6" height="4"><path d="M0.5 3.5L3 1L5.5 3.5" stroke="#2030c0" stroke-width="1.1" fill="none"/></svg>
<div class="a" style="left:753px;top:376px;width:146px;height:51px;background:#fff"></div>
<div class="a" style="left:753px;top:388px;width:146px;height:39px;background:#f0f0f0"></div>
<div class="a" style="left:753px;top:390px;width:12px;height:13px;background:#e8e8e8"></div>
<svg style="left:757px;top:395px" width="5" height="3"><path d="M0 0H5L2.5 3Z" fill="#222"/></svg>
<div class="a" style="left:789px;top:390px;width:12px;height:13px;background:#e8e8e8"></div>
<svg style="left:793px;top:395px" width="5" height="3"><path d="M0 3H5L2.5 0Z" fill="#222"/></svg>
<div class="a" style="left:802px;top:390px;width:12px;height:13px;background:#e8e8e8"></div>
<svg style="left:806px;top:395px" width="5" height="3"><path d="M0 0H5L2.5 3Z" fill="#222"/></svg>
<div class="a" style="left:838px;top:390px;width:12px;height:13px;background:#e8e8e8"></div>
<svg style="left:842px;top:395px" width="5" height="3"><path d="M0 3H5L2.5 0Z" fill="#222"/></svg>
<div class="a" style="left:851px;top:390px;width:12px;height:13px;background:#e8e8e8"></div>
<svg style="left:855px;top:395px" width="5" height="3"><path d="M0 0H5L2.5 3Z" fill="#222"/></svg>
<div class="a" style="left:887px;top:390px;width:12px;height:13px;background:#e8e8e8"></div>
<svg style="left:891px;top:395px" width="5" height="3"><path d="M0 3H5L2.5 0Z" fill="#222"/></svg>
<div class="a" style="left:765px;top:390px;width:23px;height:13px;background:#fff;border:1px solid #b8b8b8"></div>
<div class="t" style="left:767px;top:392px;font-size:8.50px;color:#999;transform:scaleX(0.950);transform-origin:left">sl</div>
<div class="t" style="right:114px;top:392px;font-size:8.50px;color:#222;transform:scaleX(0.800);transform-origin:right">0</div>
<div class="a" style="left:814px;top:390px;width:23px;height:13px;background:#fff;border:1px solid #b8b8b8"></div>
<div class="t" style="right:65px;top:392px;font-size:8.50px;color:#222;transform:scaleX(0.807);transform-origin:right">3.00</div>
<div class="a" style="left:863px;top:390px;width:22px;height:13px;background:#fff;border:1px solid #b8b8b8"></div>
<div class="t" style="left:865px;top:392px;font-size:8.50px;color:#999;transform:scaleX(0.950);transform-origin:left">tp</div>
<div class="t" style="right:17px;top:392px;font-size:8.50px;color:#222;transform:scaleX(0.800);transform-origin:right">0</div>
<div class="a" style="left:753px;top:404px;width:145px;height:13px;background:#e4e4e4"></div>
<div class="t" style="left:757px;top:406px;font-size:8.50px;color:#222;transform:scaleX(0.811);transform-origin:left">#11392292 buy 3.00 GBPUSD 1.3018</div>
<svg style="left:889px;top:408px" width="7" height="5"><path d="M0.5 0.5L3.5 3.5L6.5 0.5" stroke="#333" stroke-width="1" fill="none"/></svg>
<div class="a" style="left:754px;top:418px;width:47px;height:9px;background:linear-gradient(#f4a0a0,#e47070);border:1px solid #d07070"></div>
<div class="t" style="left:677px;width:200px;text-align:center;top:421px;font-size:8.50px;color:#4a1010;transform:scaleX(0.874);transform-origin:center">Sell</div>
<div class="a" style="left:801px;top:418px;width:49px;height:9px;background:#e6e6a6"></div>
<div class="t" style="left:725px;width:200px;text-align:center;top:421px;font-size:8.50px;color:#333;transform:scaleX(0.896);transform-origin:center">Close</div>
<div class="a" style="left:850px;top:418px;width:47px;height:9px;background:linear-gradient(#a8c0ee,#7c9ade);border:1px solid #7890d0"></div>
<div class="t" style="left:773px;width:200px;text-align:center;top:421px;font-size:8.50px;color:#182860;transform:scaleX(0.876);transform-origin:center">Buy</div>
<div class="a" style="left:605px;top:376px;width:147px;height:1px;background:#d8d8d8"></div>
<div class="a" style="left:606px;top:101px;width:1px;height:149px;background:#c8c8c8"></div>
<div class="a" style="left:606px;top:280px;width:1px;height:146px;background:#c8c8c8"></div>
<div class="a" style="left:606px;top:224px;width:146px;height:1px;background:#d8d8d8"></div>
<div class="a" style="left:606px;top:389px;width:146px;height:1px;background:#d8d8d8"></div>
<svg style="left:0;top:0" width="900" height="558"><line x1="627.5" y1="117" x2="627.5" y2="222" stroke="#d4d4d4" stroke-dasharray="1.5,2.5"/><line x1="647.5" y1="117" x2="647.5" y2="222" stroke="#d4d4d4" stroke-dasharray="1.5,2.5"/><line x1="668.5" y1="117" x2="668.5" y2="222" stroke="#d4d4d4" stroke-dasharray="1.5,2.5"/><line x1="688.5" y1="117" x2="688.5" y2="222" stroke="#d4d4d4" stroke-dasharray="1.5,2.5"/><line x1="709.5" y1="117" x2="709.5" y2="222" stroke="#d4d4d4" stroke-dasharray="1.5,2.5"/><line x1="729.5" y1="117" x2="729.5" y2="222" stroke="#d4d4d4" stroke-dasharray="1.5,2.5"/><line x1="607" y1="130.5" x2="751" y2="130.5" stroke="#d4d4d4" stroke-dasharray="1.5,2.5"/><line x1="607" y1="143.5" x2="751" y2="143.5" stroke="#d4d4d4" stroke-dasharray="1.5,2.5"/><line x1="607" y1="156.5" x2="751" y2="156.5" stroke="#d4d4d4" stroke-dasharray="1.5,2.5"/><line x1="607" y1="169.5" x2="751" y2="169.5" stroke="#d4d4d4" stroke-dasharray="1.5,2.5"/><line x1="607" y1="182.5" x2="751" y2="182.5" stroke="#d4d4d4" stroke-dasharray="1.5,2.5"/><line x1="607" y1="195.5" x2="751" y2="195.5" stroke="#d4d4d4" stroke-dasharray="1.5,2.5"/><line x1="607" y1="208.5" x2="751" y2="208.5" stroke="#d4d4d4" stroke-dasharray="1.5,2.5"/><line x1="607" y1="221.5" x2="751" y2="221.5" stroke="#d4d4d4" stroke-dasharray="1.5,2.5"/><line x1="627.5" y1="297" x2="627.5" y2="388" stroke="#d4d4d4" stroke-dasharray="1.5,2.5"/><line x1="647.5" y1="297" x2="647.5" y2="388" stroke="#d4d4d4" stroke-dasharray="1.5,2.5"/><line x1="668.5" y1="297" x2="668.5" y2="388" stroke="#d4d4d4" stroke-dasharray="1.5,2.5"/><line x1="688.5" y1="297" x2="688.5" y2="388" stroke="#d4d4d4" stroke-dasharray="1.5,2.5"/><line x1="709.5" y1="297" x2="709.5" y2="388" stroke="#d4d4d4" stroke-dasharray="1.5,2.5"/><line x1="729.5" y1="297" x2="729.5" y2="388" stroke="#d4d4d4" stroke-dasharray="1.5,2.5"/><line x1="607" y1="309.5" x2="751" y2="309.5" stroke="#d4d4d4" stroke-dasharray="1.5,2.5"/><line x1="607" y1="322.5" x2="751" y2="322.5" stroke="#d4d4d4" stroke-dasharray="1.5,2.5"/><line x1="607" y1="335.5" x2="751" y2="335.5" stroke="#d4d4d4" stroke-dasharray="1.5,2.5"/><line x1="607" y1="348.5" x2="751" y2="348.5" stroke="#d4d4d4" stroke-dasharray="1.5,2.5"/><line x1="607" y1="361.5" x2="751" y2="361.5" stroke="#d4d4d4" stroke-dasharray="1.5,2.5"/><line x1="607" y1="374.5" x2="751" y2="374.5" stroke="#d4d4d4" stroke-dasharray="1.5,2.5"/><path d="M606.3 117.4 L609.2 123.1 L612.0 117.9 L614.9 123.1 L617.8 117.9 L620.6 123.1 L625.2 148.0 L631.0 123.7 L637.3 160.9 L641.6 149.5 L644.4 160.9 L647.3 149.5 L650.2 160.9 L653.0 149.5 L655.9 160.9 L658.8 149.5 L661.6 160.9 L667.4 169.6 L670.3 162.4 L673.1 169.6 L676.0 162.4 L678.9 169.6 L683.2 149.5 L686.0 160.9 L688.9 149.5 L691.8 160.9 L694.6 149.5 L698.9 169.6 L701.8 162.4 L704.7 169.6 L709.0 169.6 L711.8 162.4 L714.7 169.6 L717.6 162.4 L720.4 169.6 L726.2 169.6 L729.0 175.3 L750.5 175.3" stroke="#1a5ee0" stroke-width="1.9" fill="none" stroke-linejoin="round"/><path d="M606.3 117.4 L635.8 117.4 L637.3 123.1 L640.1 117.9 L643.0 123.1 L645.9 117.9 L648.7 123.1 L651.6 117.9 L654.5 123.1 L657.3 117.9 L660.2 123.1 L663.1 117.9 L666.5 135.1 L670.3 123.1 L673.1 135.1 L676.0 123.7 L678.9 135.1 L681.7 117.9 L684.6 123.1 L687.5 117.9 L690.3 123.1 L693.2 117.9 L696.1 123.1 L698.9 135.1 L701.8 123.7 L704.7 148.0 L710.4 123.7 L713.3 135.1 L716.1 123.7 L720.4 148.0 L723.3 136.6 L729.0 162.4 L750.5 162.4" stroke="#f06565" stroke-width="1.5" fill="none" stroke-linejoin="round"/><path d="M606.3 297.4 L665.9 297.4 L670.3 315.1 L673.1 303.7 L676.0 315.1 L678.9 303.7 L681.7 315.1 L686.0 335.2 L688.9 329.5 L691.8 335.2 L694.6 329.5 L697.5 335.2 L700.4 329.5 L703.2 335.2 L706.1 329.5 L709.0 335.8 L711.8 336.6 L714.7 353.9 L717.6 343.8 L723.3 367.3 L729.0 342.4 L750.5 342.4" stroke="#1a5ee0" stroke-width="1.9" fill="none" stroke-linejoin="round"/><path d="M606.3 297.4 L684.6 297.4 L686.0 302.2 L688.9 297.9 L691.8 302.2 L694.6 297.9 L697.5 302.2 L700.4 297.9 L703.2 302.2 L706.1 297.9 L709.0 303.7 L714.7 335.2 L717.6 329.5 L720.4 335.8 L726.2 335.8 L729.0 328.9 L750.5 328.9" stroke="#f06565" stroke-width="1.5" fill="none" stroke-linejoin="round"/></svg>
<div class="a" style="left:0px;top:428px;width:900px;height:3px;background:#f0f0f0"></div>
<div class="a" style="left:1px;top:431px;width:898px;height:110px;background:#f0f0f0"></div>
<div class="a" style="left:604px;top:427px;width:295px;height:2px;background:#fafafa"></div>
<div class="a" style="left:604px;top:429px;width:295px;height:1px;background:#c8c8c8"></div>
<div class="a" style="left:1px;top:430px;width:898px;height:2px;background:#ececec"></div>
<div class="a" style="left:1px;top:432px;width:898px;height:1px;background:#d0d0d0"></div>
<div class="a" style="left:1px;top:433px;width:10px;height:107px;background:linear-gradient(#d6e2f0,#cfdcec)"></div>
<div class="t" style="left:3px;top:431px;font-size:9.00px;font-weight:bold;color:#222;transform:scaleX(0.850);transform-origin:left">×</div>
<div class="t" style="left:-14px;top:521px;transform:rotate(-90deg);font-size:8.5px;color:#222;width:40px;text-align:center">Toolbox</div>
<div class="a" style="left:11px;top:434px;width:875px;height:91px;background:#fff"></div>
<div class="a" style="left:62px;top:435px;width:1px;height:14px;background:#ececec"></div>
<div class="a" style="left:101px;top:435px;width:1px;height:14px;background:#ececec"></div>
<div class="a" style="left:527px;top:435px;width:1px;height:14px;background:#ececec"></div>
<div class="a" style="left:569px;top:435px;width:1px;height:14px;background:#ececec"></div>
<div class="a" style="left:624px;top:435px;width:1px;height:14px;background:#ececec"></div>
<div class="a" style="left:711px;top:435px;width:1px;height:14px;background:#ececec"></div>
<div class="a" style="left:798px;top:435px;width:1px;height:14px;background:#ececec"></div>
<div class="t" style="left:15px;top:436px;font-size:8.50px;color:#333;transform:scaleX(0.898);transform-origin:left">Time</div>
<div class="t" style="left:65px;top:436px;font-size:8.50px;color:#333;transform:scaleX(0.916);transform-origin:left">Currency</div>
<div class="t" style="left:104px;top:436px;font-size:8.50px;color:#333;transform:scaleX(0.900);transform-origin:left">Event</div>
<div class="t" style="left:530px;top:436px;font-size:8.50px;color:#333;transform:scaleX(0.909);transform-origin:left">Priority</div>
<div class="t" style="right:279px;top:436px;font-size:8.50px;color:#333;transform:scaleX(0.906);transform-origin:right">Period</div>
<div class="t" style="right:192px;top:436px;font-size:8.50px;color:#333;transform:scaleX(0.904);transform-origin:right">Actual</div>
<div class="t" style="right:105px;top:436px;font-size:8.50px;color:#333;transform:scaleX(0.920);transform-origin:right">Forecast</div>
<div class="t" style="right:17px;top:436px;font-size:8.50px;color:#333;transform:scaleX(0.917);transform-origin:right">Previous</div>
<div class="t" style="left:13px;top:451px;font-size:8.50px;color:#111;font-weight:bold;letter-spacing:-0.15px;transform:scaleX(0.903);transform-origin:left">Monday, 3 February</div>
<div class="a" style="left:11px;top:461px;width:875px;height:13px;background:#e5f5fc;border-top:1px solid #d0dde4"></div>
<div class="a" style="left:62px;top:461px;width:1px;height:13px;background:#d4dde2"></div>
<div class="a" style="left:101px;top:461px;width:1px;height:13px;background:#d4dde2"></div>
<div class="a" style="left:527px;top:461px;width:1px;height:13px;background:#d4dde2"></div>
<div class="a" style="left:569px;top:461px;width:1px;height:13px;background:#d4dde2"></div>
<div class="a" style="left:624px;top:461px;width:1px;height:13px;background:#d4dde2"></div>
<div class="a" style="left:711px;top:461px;width:1px;height:13px;background:#d4dde2"></div>
<div class="a" style="left:798px;top:461px;width:1px;height:13px;background:#d4dde2"></div>
<svg style="left:12px;top:464px" width="11" height="8"><rect width="11" height="8" rx="1" fill="#2a40a0"/><rect x="1" y="1" width="5" height="3" fill="#d06080"/><path d="M1 2.5H6M3.5 1V4" stroke="#fff" stroke-width="0.7"/><circle cx="8.5" cy="5.5" r="0.8" fill="#fff"/><circle cx="7.5" cy="3" r="0.6" fill="#fff"/><circle cx="3.5" cy="6" r="0.7" fill="#fff"/></svg>
<div class="t" style="left:25px;top:463px;font-size:8.50px;color:#222;transform:scaleX(0.806);transform-origin:left">00:00</div>
<div class="t" style="left:65px;top:463px;font-size:8.50px;color:#222;transform:scaleX(0.760);transform-origin:left">AUD</div>
<div class="t" style="left:104px;top:463px;font-size:8.50px;color:#222;transform:scaleX(0.904);transform-origin:left">Commonwealth Bank Manufacturing PMI</div>
<svg style="left:543px;top:464px" width="8" height="7"><path d="M0.8 3A4.5 4.5 0 0 1 7.2 3" stroke="#2a6ad0" stroke-width="1.2" fill="none"/><path d="M2.2 4.5A2.5 2.5 0 0 1 5.8 4.5" stroke="#2a6ad0" stroke-width="1.2" fill="none"/><circle cx="4" cy="6" r="0.9" fill="#2a6ad0"/></svg>
<div class="t" style="right:279px;top:464px;font-size:8.50px;color:#222;transform:scaleX(0.891);transform-origin:right">Jan</div>
<div class="t" style="right:192px;top:464px;font-size:8.50px;color:#222;transform:scaleX(0.807);transform-origin:right">49.6</div>
<div class="t" style="right:105px;top:464px;font-size:8.50px;color:#222;transform:scaleX(0.807);transform-origin:right">49.1</div>
<div class="t" style="right:17px;top:464px;font-size:8.50px;color:#222;transform:scaleX(0.807);transform-origin:right">49.1</div>
<div class="a" style="left:11px;top:474px;width:875px;height:13px;background:#e5f5fc;border-top:1px solid #d0dde4"></div>
<div class="a" style="left:62px;top:474px;width:1px;height:13px;background:#d4dde2"></div>
<div class="a" style="left:101px;top:474px;width:1px;height:13px;background:#d4dde2"></div>
<div class="a" style="left:527px;top:474px;width:1px;height:13px;background:#d4dde2"></div>
<div class="a" style="left:569px;top:474px;width:1px;height:13px;background:#d4dde2"></div>
<div class="a" style="left:624px;top:474px;width:1px;height:13px;background:#d4dde2"></div>
<div class="a" style="left:711px;top:474px;width:1px;height:13px;background:#d4dde2"></div>
<div class="a" style="left:798px;top:474px;width:1px;height:13px;background:#d4dde2"></div>
<svg style="left:12px;top:477px" width="11" height="8"><rect width="11" height="8" rx="1" fill="#2a40a0"/><rect x="1" y="1" width="5" height="3" fill="#d06080"/><path d="M1 2.5H6M3.5 1V4" stroke="#fff" stroke-width="0.7"/><circle cx="8.5" cy="5.5" r="0.8" fill="#fff"/><circle cx="7.5" cy="3" r="0.6" fill="#fff"/><circle cx="3.5" cy="6" r="0.7" fill="#fff"/></svg>
<div class="t" style="left:25px;top:476px;font-size:8.50px;color:#222;transform:scaleX(0.806);transform-origin:left">02:30</div>
<div class="t" style="left:65px;top:476px;font-size:8.50px;color:#222;transform:scaleX(0.760);transform-origin:left">AUD</div>
<div class="t" style="left:104px;top:476px;font-size:8.50px;color:#222;transform:scaleX(0.918);transform-origin:left">Building Approvals m/m</div>
<svg style="left:543px;top:477px" width="8" height="7"><path d="M0.8 3A4.5 4.5 0 0 1 7.2 3" stroke="#2a6ad0" stroke-width="1.2" fill="none"/><path d="M2.2 4.5A2.5 2.5 0 0 1 5.8 4.5" stroke="#2a6ad0" stroke-width="1.2" fill="none"/><circle cx="4" cy="6" r="0.9" fill="#2a6ad0"/></svg>
<div class="t" style="right:279px;top:477px;font-size:8.50px;color:#222;transform:scaleX(0.873);transform-origin:right">Dec</div>
<div class="t" style="right:192px;top:477px;font-size:8.50px;color:#222;transform:scaleX(0.829);transform-origin:right">-0.2%</div>
<div class="t" style="right:105px;top:477px;font-size:8.50px;color:#222;transform:scaleX(0.829);transform-origin:right">-4.9%</div>
<div class="t" style="right:17px;top:477px;font-size:8.50px;color:#222;text-decoration:underline;text-decoration-color:#3a5a9a;transform:scaleX(0.821);transform-origin:right">10.9%</div>
<div class="a" style="left:11px;top:487px;width:875px;height:13px;background:#ffffff;border-top:1px solid #d0dde4"></div>
<div class="a" style="left:62px;top:487px;width:1px;height:13px;background:#d4dde2"></div>
<div class="a" style="left:101px;top:487px;width:1px;height:13px;background:#d4dde2"></div>
<div class="a" style="left:527px;top:487px;width:1px;height:13px;background:#d4dde2"></div>
<div class="a" style="left:569px;top:487px;width:1px;height:13px;background:#d4dde2"></div>
<div class="a" style="left:624px;top:487px;width:1px;height:13px;background:#d4dde2"></div>
<div class="a" style="left:711px;top:487px;width:1px;height:13px;background:#d4dde2"></div>
<div class="a" style="left:798px;top:487px;width:1px;height:13px;background:#d4dde2"></div>
<svg style="left:12px;top:490px" width="11" height="8"><rect width="11" height="8" rx="1" fill="#2a40a0"/><rect x="1" y="1" width="5" height="3" fill="#d06080"/><path d="M1 2.5H6M3.5 1V4" stroke="#fff" stroke-width="0.7"/><circle cx="8.5" cy="5.5" r="0.8" fill="#fff"/><circle cx="7.5" cy="3" r="0.6" fill="#fff"/><circle cx="3.5" cy="6" r="0.7" fill="#fff"/></svg>
<div class="t" style="left:25px;top:489px;font-size:8.50px;color:#222;transform:scaleX(0.806);transform-origin:left">02:30</div>
<div class="t" style="left:65px;top:489px;font-size:8.50px;color:#222;transform:scaleX(0.760);transform-origin:left">AUD</div>
<div class="t" style="left:104px;top:489px;font-size:8.50px;color:#222;transform:scaleX(0.912);transform-origin:left">Private House Approvals m/m</div>
<div class="a" style="left:546px;top:493px;width:2px;height:2px;background:#2a6ad0;border-radius:1px"></div>
<div class="t" style="right:279px;top:490px;font-size:8.50px;color:#222;transform:scaleX(0.873);transform-origin:right">Dec</div>
<div class="t" style="right:192px;top:490px;font-size:8.50px;color:#222;transform:scaleX(0.829);transform-origin:right">-0.1%</div>
<div class="t" style="right:105px;top:490px;font-size:8.5px;color:#222"></div>
<div class="t" style="right:17px;top:490px;font-size:8.50px;color:#222;text-decoration:underline;text-decoration-color:#3a5a9a;transform:scaleX(0.826);transform-origin:right">6.0%</div>
<div class="a" style="left:11px;top:500px;width:875px;height:13px;background:#e5f5fc;border-top:1px solid #d0dde4"></div>
<div class="a" style="left:62px;top:500px;width:1px;height:13px;background:#d4dde2"></div>
<div class="a" style="left:101px;top:500px;width:1px;height:13px;background:#d4dde2"></div>
<div class="a" style="left:527px;top:500px;width:1px;height:13px;background:#d4dde2"></div>
<div class="a" style="left:569px;top:500px;width:1px;height:13px;background:#d4dde2"></div>
<div class="a" style="left:624px;top:500px;width:1px;height:13px;background:#d4dde2"></div>
<div class="a" style="left:711px;top:500px;width:1px;height:13px;background:#d4dde2"></div>
<div class="a" style="left:798px;top:500px;width:1px;height:13px;background:#d4dde2"></div>
<svg style="left:12px;top:503px" width="11" height="8"><rect width="11" height="8" rx="1" fill="#2a40a0"/><rect x="1" y="1" width="5" height="3" fill="#d06080"/><path d="M1 2.5H6M3.5 1V4" stroke="#fff" stroke-width="0.7"/><circle cx="8.5" cy="5.5" r="0.8" fill="#fff"/><circle cx="7.5" cy="3" r="0.6" fill="#fff"/><circle cx="3.5" cy="6" r="0.7" fill="#fff"/></svg>
<div class="t" style="left:25px;top:502px;font-size:8.50px;color:#222;transform:scaleX(0.806);transform-origin:left">02:30</div>
<div class="t" style="left:65px;top:502px;font-size:8.50px;color:#222;transform:scaleX(0.760);transform-origin:left">AUD</div>
<div class="t" style="left:104px;top:502px;font-size:8.50px;color:#222;transform:scaleX(0.896);transform-origin:left">ANZ Job Advertisements m/m</div>
<div class="a" style="left:546px;top:506px;width:2px;height:2px;background:#2a6ad0;border-radius:1px"></div>
<div class="t" style="right:279px;top:503px;font-size:8.50px;color:#222;transform:scaleX(0.891);transform-origin:right">Jan</div>
<div class="t" style="right:192px;top:503px;font-size:8.50px;color:#222;transform:scaleX(0.826);transform-origin:right">3.8%</div>
<div class="t" style="right:105px;top:503px;font-size:8.50px;color:#222;transform:scaleX(0.826);transform-origin:right">3.7%</div>
<div class="t" style="right:17px;top:503px;font-size:8.50px;color:#222;text-decoration:underline;text-decoration-color:#3a5a9a;transform:scaleX(0.829);transform-origin:right">-5.7%</div>
<div class="a" style="left:11px;top:513px;width:875px;height:13px;background:#fde2e6;border-top:1px solid #d0dde4"></div>
<div class="a" style="left:62px;top:513px;width:1px;height:13px;background:#d4dde2"></div>
<div class="a" style="left:101px;top:513px;width:1px;height:13px;background:#d4dde2"></div>
<div class="a" style="left:527px;top:513px;width:1px;height:13px;background:#d4dde2"></div>
<div class="a" style="left:569px;top:513px;width:1px;height:13px;background:#d4dde2"></div>
<div class="a" style="left:624px;top:513px;width:1px;height:13px;background:#d4dde2"></div>
<div class="a" style="left:711px;top:513px;width:1px;height:13px;background:#d4dde2"></div>
<div class="a" style="left:798px;top:513px;width:1px;height:13px;background:#d4dde2"></div>
<svg style="left:13px;top:516px" width="12" height="8"><rect width="12" height="8" fill="#fff"/><circle cx="6" cy="4" r="2.2" fill="#d01020"/></svg>
<div class="t" style="left:25px;top:515px;font-size:8.50px;color:#222;transform:scaleX(0.806);transform-origin:left">02:30</div>
<div class="t" style="left:65px;top:515px;font-size:8.50px;color:#222;transform:scaleX(0.760);transform-origin:left">JPY</div>
<div class="t" style="left:104px;top:515px;font-size:8.50px;color:#222;transform:scaleX(0.888);transform-origin:left">Markit Manufacturing PMI</div>
<svg style="left:543px;top:516px" width="8" height="7"><path d="M0.8 3A4.5 4.5 0 0 1 7.2 3" stroke="#2a6ad0" stroke-width="1.2" fill="none"/><path d="M2.2 4.5A2.5 2.5 0 0 1 5.8 4.5" stroke="#2a6ad0" stroke-width="1.2" fill="none"/><circle cx="4" cy="6" r="0.9" fill="#2a6ad0"/></svg>
<div class="t" style="right:279px;top:516px;font-size:8.50px;color:#222;transform:scaleX(0.891);transform-origin:right">Jan</div>
<div class="t" style="right:192px;top:516px;font-size:8.50px;color:#222;transform:scaleX(0.807);transform-origin:right">48.8</div>
<div class="t" style="right:105px;top:516px;font-size:8.50px;color:#222;transform:scaleX(0.807);transform-origin:right">49.3</div>
<div class="t" style="right:17px;top:516px;font-size:8.50px;color:#222;transform:scaleX(0.807);transform-origin:right">49.3</div>
<div class="a" style="left:11px;top:525px;width:886px;height:2px;background:#7a7a7a"></div>
<div class="a" style="left:886px;top:434px;width:12px;height:91px;background:#f7f7f7"></div>
<svg style="left:888px;top:437px" width="8" height="5"><path d="M1 4L4 1L7 4" stroke="#333" stroke-width="1" fill="none"/></svg>
<div class="a" style="left:886px;top:444px;width:10px;height:11px;background:#cdcdcd"></div>
<svg style="left:888px;top:519px" width="8" height="5"><path d="M1 1L4 4L7 1" stroke="#333" stroke-width="1" fill="none"/></svg>
<div class="t" style="left:19px;top:527px;font-size:8.50px;color:#8a8a8a;transform:scaleX(0.906);transform-origin:left">Trade</div>
<div class="t" style="left:50px;top:527px;font-size:8.50px;color:#8a8a8a;transform:scaleX(0.920);transform-origin:left">Exposure</div>
<div class="t" style="left:94px;top:527px;font-size:8.50px;color:#8a8a8a;transform:scaleX(0.906);transform-origin:left">History</div>
<div class="t" style="left:132px;top:527px;font-size:8.50px;color:#8a8a8a;transform:scaleX(0.895);transform-origin:left">News</div>
<div class="t" style="left:163px;top:527px;font-size:8.50px;color:#8a8a8a;transform:scaleX(0.904);transform-origin:left">Mailbox</div>
<div class="t" style="left:44px;top:527px;font-size:8.50px;color:#888;transform:scaleX(0.850);transform-origin:left">|</div>
<div class="t" style="left:88px;top:527px;font-size:8.50px;color:#888;transform:scaleX(0.850);transform-origin:left">|</div>
<div class="t" style="left:126px;top:527px;font-size:8.50px;color:#888;transform:scaleX(0.850);transform-origin:left">|</div>
<div class="t" style="left:157px;top:527px;font-size:8.50px;color:#888;transform:scaleX(0.850);transform-origin:left">|</div>
<div class="t" style="left:192px;top:531px;font-size:7px;color:#e02020;font-weight:bold">7</div>
<div class="a" style="left:202px;top:525px;width:44px;height:14px;background:#fff;border:1.5px solid #444;border-top:none"></div>
<div class="t" style="left:206px;top:527px;font-size:8.50px;color:#222;transform:scaleX(0.916);transform-origin:left">Calendar</div>
<div class="t" style="left:251px;top:527px;font-size:8.50px;color:#8a8a8a;transform:scaleX(0.918);transform-origin:left">Company</div>
<div class="t" style="left:298px;top:527px;font-size:8.50px;color:#8a8a8a;transform:scaleX(0.898);transform-origin:left">Market</div>
<div class="t" style="left:343px;top:527px;font-size:8.50px;color:#8a8a8a;transform:scaleX(0.900);transform-origin:left">Alerts</div>
<div class="t" style="left:374px;top:527px;font-size:8.50px;color:#8a8a8a;transform:scaleX(0.911);transform-origin:left">Signals</div>
<div class="t" style="left:411px;top:527px;font-size:8.50px;color:#8a8a8a;transform:scaleX(0.911);transform-origin:left">Articles</div>
<div class="t" style="left:461px;top:527px;font-size:8.50px;color:#8a8a8a;;transform:scaleX(0.829);transform-origin:left">Code Base</div>
<div class="t" style="left:523px;top:527px;font-size:8.50px;color:#8a8a8a;transform:scaleX(0.760);transform-origin:left">VPS</div>
<div class="t" style="left:548px;top:527px;font-size:8.50px;color:#8a8a8a;transform:scaleX(0.913);transform-origin:left">Experts</div>
<div class="t" style="left:585px;top:527px;font-size:8.50px;color:#8a8a8a;transform:scaleX(0.921);transform-origin:left">Journal</div>
<div class="t" style="left:290px;top:527px;font-size:8.50px;color:#888;transform:scaleX(0.850);transform-origin:left">|</div>
<div class="t" style="left:335px;top:527px;font-size:8.50px;color:#888;transform:scaleX(0.850);transform-origin:left">|</div>
<div class="t" style="left:368px;top:527px;font-size:8.50px;color:#888;transform:scaleX(0.850);transform-origin:left">|</div>
<div class="t" style="left:405px;top:527px;font-size:8.50px;color:#888;transform:scaleX(0.850);transform-origin:left">|</div>
<div class="t" style="left:454px;top:527px;font-size:8.50px;color:#888;transform:scaleX(0.850);transform-origin:left">|</div>
<div class="t" style="left:516px;top:527px;font-size:8.50px;color:#888;transform:scaleX(0.850);transform-origin:left">|</div>
<div class="t" style="left:542px;top:527px;font-size:8.50px;color:#888;transform:scaleX(0.850);transform-origin:left">|</div>
<div class="t" style="left:578px;top:527px;font-size:8.50px;color:#888;transform:scaleX(0.850);transform-origin:left">|</div>
<div class="t" style="left:323px;top:531px;font-size:7.00px;color:#e02020;font-weight:bold;;transform:scaleX(0.880);transform-origin:left">33</div>
<div class="t" style="left:437px;top:531px;font-size:7.00px;color:#e02020;font-weight:bold;;transform:scaleX(0.880);transform-origin:left">661</div>
<div class="t" style="left:497px;top:531px;font-size:7.00px;color:#e02020;font-weight:bold;;transform:scaleX(0.880);transform-origin:left">6657</div>
<div class="t" style="right:14px;top:527px;font-size:8.50px;color:#222;transform:scaleX(0.910);transform-origin:right">Strategy Tester</div>
<div class="a" style="left:1px;top:541px;width:898px;height:1px;background:#d0d0d0"></div>
<div class="a" style="left:1px;top:542px;width:898px;height:15px;background:#f0f0f0"></div>
<div class="t" style="left:3px;top:545px;font-size:8.50px;color:#222;transform:scaleX(0.882);transform-origin:left">For Help, press F1</div>
<div class="a" style="left:452px;top:542px;width:1px;height:15px;background:#d0d0d0"></div>
<div class="a" style="left:535px;top:542px;width:1px;height:15px;background:#d0d0d0"></div>
<div class="a" style="left:645px;top:542px;width:1px;height:15px;background:#d0d0d0"></div>
<div class="a" style="left:690px;top:542px;width:1px;height:15px;background:#d0d0d0"></div>
<div class="a" style="left:735px;top:542px;width:1px;height:15px;background:#d0d0d0"></div>
<div class="a" style="left:780px;top:542px;width:1px;height:15px;background:#d0d0d0"></div>
<div class="a" style="left:823px;top:542px;width:1px;height:15px;background:#d0d0d0"></div>
<div class="t" style="left:456px;top:545px;font-size:8.50px;color:#222;transform:scaleX(0.907);transform-origin:left">Default</div>
<svg style="left:826px;top:546px" width="10" height="9"><path d="M0 9L10 0V9Z" fill="#2aa02a"/></svg>
<div class="t" style="left:838px;top:545px;font-size:8.50px;color:#222;transform:scaleX(0.855);transform-origin:left">48.70 ms</div>
<svg style="left:2px;top:35px" width="3" height="16"><path d="M1 0V16" stroke="#a0a0a0" stroke-dasharray="1,2"/></svg>
<svg style="left:2px;top:55px" width="3" height="16"><path d="M1 0V16" stroke="#a0a0a0" stroke-dasharray="1,2"/></svg>
<svg style="left:8px;top:36px" width="15" height="14"><rect x="0.5" y="0.5" width="12" height="10" fill="#cfe6fb" stroke="#2a7ad8"/><rect x="0.5" y="0.5" width="12" height="2" fill="#2a7ad8"/><path d="M2 8L5 5L8 7L11 4" stroke="#40a040" fill="none"/><circle cx="11" cy="10" r="3.5" fill="#30b030"/><path d="M9 10H13M11 8V12" stroke="#fff" stroke-width="1"/></svg>
<svg style="left:24px;top:42px" width="5" height="3"><path d="M0 0H5L2.5 3Z" fill="#222"/></svg>
<svg style="left:34px;top:36px" width="15" height="14"><rect x="4.5" y="0.5" width="10" height="8" fill="#cfe6fb" stroke="#2a7ad8"/><rect x="0.5" y="4.5" width="10" height="9" fill="#cfe6fb" stroke="#2a7ad8"/><path d="M2 9L4 11L7 8L9 10" stroke="#30a030" fill="none"/></svg>
<svg style="left:50px;top:42px" width="5" height="3"><path d="M0 0H5L2.5 3Z" fill="#222"/></svg>
<svg style="left:60px;top:36px" width="15" height="14"><rect x="4.5" y="0.5" width="9" height="10" fill="#6aaae8" stroke="#2a6ab8"/><rect x="0.5" y="2.5" width="9" height="11" fill="#f2c830" stroke="#b08a10"/><text x="2.5" y="12" font-size="8" font-family="Liberation Sans" fill="#805a00">S</text></svg>
<div class="a" style="left:80px;top:35px;width:1px;height:15px;background:#c8c8c8"></div>
<svg style="left:85px;top:36px" width="15" height="14"><path d="M1 7L7 2L14 7L8 12Z" fill="#e8c040" stroke="#a08020"/><path d="M5 7L8 5L11 7L8 9Z" fill="#c89a20"/></svg>
<svg style="left:105px;top:35px" width="15" height="15"><path d="M3 13A3 3 0 0 1 3 8A4 4 0 0 1 10 6A3 3 0 0 1 13 13Z" fill="#d8eafb" stroke="#3a8ae0"/><rect x="5" y="1" width="5" height="6" fill="#6ab0f0" stroke="#3a8ae0"/></svg>
<svg style="left:127px;top:35px" width="15" height="15"><circle cx="7.5" cy="7.5" r="6.5" fill="none" stroke="#7aaae0"/><circle cx="7.5" cy="7.5" r="4" fill="none" stroke="#5a90d8"/><circle cx="7.5" cy="7.5" r="1.8" fill="#2a6ad0"/></svg>
<div class="a" style="left:146px;top:35px;width:1px;height:15px;background:#c8c8c8"></div>
<svg style="left:151px;top:35px" width="14" height="15"><path d="M2 4L7 1L12 4L7 6Z" fill="#333"/><circle cx="6" cy="9" r="4.5" fill="#3a6ad8"/><circle cx="10" cy="11" r="3.5" fill="#e02828"/><rect x="8.5" y="10" width="3" height="2" fill="#fff"/></svg>
<div class="t" style="left:167px;top:38px;font-size:8.50px;color:#222;letter-spacing:-0.1px;transform:scaleX(0.905);transform-origin:left">AutoTrading</div>
<svg style="left:217px;top:35px" width="15" height="15"><rect x="0.5" y="1.5" width="11" height="9" fill="#f8e8a0" stroke="#c8a030"/><path d="M2 4H10M2 6H10M2 8H8" stroke="#c8a030" stroke-width="0.8"/><circle cx="11" cy="11" r="3.5" fill="#30b030"/><path d="M9 11H13M11 9V13" stroke="#fff"/></svg>
<div class="t" style="left:232px;top:38px;font-size:8.50px;color:#222;letter-spacing:-0.1px;transform:scaleX(0.885);transform-origin:left">New Order</div>
<div class="a" style="left:276px;top:35px;width:1px;height:15px;background:#c8c8c8"></div>
<div class="a" style="left:280px;top:34px;width:18px;height:17px;background:#cce4f7;border:1px solid #99c9ef"></div>
<svg style="left:282px;top:36px" width="16" height="15"><path d="M2.5 1V13.5H15M1 1.5H4M14.5 12V15" stroke="#2a6ad0" stroke-width="1.1" fill="none"/><path d="M6.5 4V11M5 9H6.5M6.5 6H8M10.5 3V9M9 4H10.5M10.5 7H12" stroke="#30a030" stroke-width="1.3" fill="none"/></svg>
<svg style="left:302px;top:36px" width="16" height="15"><path d="M2.5 1V13.5H15M1 1.5H4M14.5 12V15" stroke="#2a6ad0" stroke-width="1.1" fill="none"/><path d="M5.5 2.5V11.5" stroke="#2a6ad0" stroke-width="1.1"/><rect x="7.5" y="4.5" width="2.5" height="6" fill="none" stroke="#30a030" stroke-width="1"/><rect x="11.5" y="6.5" width="2" height="4" fill="none" stroke="#30a030" stroke-width="1"/></svg>
<svg style="left:322px;top:36px" width="16" height="15"><path d="M2.5 1V13.5H15M1 1.5H4M14.5 12V15" stroke="#2a6ad0" stroke-width="1.1" fill="none"/><path d="M4 10L7 5L10 9L14 5" stroke="#30a030" stroke-width="1.2" fill="none"/></svg>
<div class="a" style="left:340px;top:35px;width:1px;height:15px;background:#c8c8c8"></div>
<svg style="left:346px;top:35px" width="14" height="15"><circle cx="5.5" cy="5.5" r="4.3" fill="#fff" stroke="#2a6ad0" stroke-width="1.4"/><path d="M8.5 8.5L12.5 13" stroke="#1a4aa0" stroke-width="2.4"/><path d="M3.3 5.5H7.7M5.5 3.3V7.7" stroke="#2a6ad0" stroke-width="1.3"/></svg>
<svg style="left:366px;top:35px" width="14" height="15"><circle cx="5.5" cy="5.5" r="4.3" fill="#fff" stroke="#9a9a9a" stroke-width="1.4"/><path d="M8.5 8.5L12.5 13" stroke="#888" stroke-width="2.4"/><path d="M3.3 5.5H7.7" stroke="#9a9a9a" stroke-width="1.3"/></svg>
<svg style="left:386px;top:36px" width="15" height="14"><rect x="0.5" y="0.5" width="14" height="13" fill="#2a7ad0"/><rect x="1.5" y="1.5" width="5.5" height="5" fill="#e8f4fc"/><rect x="8" y="1.5" width="5.5" height="5" fill="#e8f4fc"/><rect x="1.5" y="7.5" width="5.5" height="5" fill="#e8f4fc"/><rect x="8" y="7.5" width="5.5" height="5" fill="#e8f4fc"/><path d="M2.5 5L4 3.5L5.5 4.5M9 5L10.5 3.5L12 4.5M2.5 11L4 9.5L5.5 10.5M9 11L10.5 9.5L12 10.5" stroke="#30a030" stroke-width="0.9" fill="none"/></svg>
<div class="a" style="left:405px;top:35px;width:1px;height:15px;background:#c8c8c8"></div>
<div class="a" style="left:410px;top:34px;width:19px;height:17px;background:#cce4f7;border:1px solid #99c9ef"></div>
<svg style="left:412px;top:36px" width="16" height="15"><path d="M2.5 1V13.5H15M1 1.5H4M14.5 12V15" stroke="#2a6ad0" stroke-width="1.1" fill="none"/><path d="M6 6.5H12M10 4.5L12 6.5L10 8.5" stroke="#30a030" stroke-width="1.3" fill="none"/><path d="M13 2.5V10" stroke="#2a6ad0"/></svg>
<svg style="left:432px;top:36px" width="16" height="15"><path d="M2.5 1V13.5H15M1 1.5H4M14.5 12V15" stroke="#2a6ad0" stroke-width="1.1" fill="none"/><path d="M14 6.5H8M10 4.5L8 6.5L10 8.5" stroke="#2a6ad0" stroke-width="1.3" fill="none"/></svg>
<div class="a" style="left:450px;top:35px;width:1px;height:15px;background:#c8c8c8"></div>
<svg style="left:455px;top:36px" width="15" height="14"><rect x="0.5" y="0.5" width="12" height="10" fill="#cfe6fb" stroke="#2a7ad8"/><path d="M2 7L5 4L8 6L11 3" stroke="#30a030" fill="none"/><rect x="6.5" y="6.5" width="8" height="7" fill="#eee" stroke="#444"/><rect x="8.5" y="9.5" width="4" height="4" fill="#444"/></svg>
<svg style="left:475px;top:35px" width="3" height="16"><path d="M1 0V16" stroke="#a0a0a0" stroke-dasharray="1,2"/></svg>
<div class="a" style="left:481px;top:34px;width:19px;height:17px;background:#cce4f7;border:1px solid #99c9ef"></div>
<svg style="left:486px;top:38px" width="8" height="10"><path d="M1 1V8L3 6L5 9L6 8.5L4.5 5.5H7Z" fill="#333"/></svg>
<svg style="left:503px;top:36px" width="15" height="14"><path d="M7.5 1V5M7.5 9V13M1 7H5M10 7H14" stroke="#444" stroke-width="1.2"/></svg>
<div class="a" style="left:522px;top:35px;width:1px;height:15px;background:#c8c8c8"></div>
<div class="a" style="left:535px;top:38px;width:1px;height:9px;background:#444"></div>
<div class="a" style="left:555px;top:42px;width:10px;height:1.2px;background:#444"></div>
<svg style="left:573px;top:37px" width="10" height="10"><path d="M1 9L9 1" stroke="#444" stroke-width="1.1"/></svg>
<svg style="left:590px;top:35px" width="14" height="15"><path d="M1 12L8 3M4 13L11 4M1 8L6 2" stroke="#555" stroke-dasharray="1.5,1" /><text x="8" y="14" font-size="6" font-weight="bold" font-family="Liberation Sans" fill="#222">E</text></svg>
<svg style="left:612px;top:36px" width="14" height="14"><rect x="0" y="0" width="9" height="7" fill="#aaa"/><path d="M0 9H7" stroke="#444"/><text x="7" y="13" font-size="6" font-weight="bold" font-family="Liberation Sans" fill="#222">F</text></svg>
<svg style="left:634px;top:37px" width="12" height="12"><rect x="0.5" y="0.5" width="11" height="11" fill="#ddd" stroke="#999"/><text x="3" y="9.5" font-size="9" font-weight="bold" font-family="Liberation Mono" fill="#555">T</text></svg>
<svg style="left:655px;top:37px" width="12" height="12"><path d="M2 10L10 2" stroke="#444"/><circle cx="3" cy="3" r="1.8" fill="none" stroke="#444"/><circle cx="9" cy="9" r="1.8" fill="none" stroke="#444"/></svg>
<svg style="left:670px;top:42px" width="5" height="3"><path d="M0 0H5L2.5 3Z" fill="#222"/></svg>
<div class="a" style="left:676px;top:34px;width:1px;height:17px;background:#c8c8c8"></div>
<svg style="left:828px;top:37px" width="10" height="11"><circle cx="6" cy="4" r="3" fill="none" stroke="#2a6ad0" stroke-width="1.6"/><path d="M4 6L1 10" stroke="#2a6ad0" stroke-width="2"/></svg>
<svg style="left:847px;top:38px" width="15" height="10"><ellipse cx="10" cy="4" rx="4.5" ry="3.2" fill="#fff" stroke="#777"/><ellipse cx="5" cy="6" rx="4.5" ry="3.2" fill="#fff" stroke="#777"/></svg>
<div class="a" style="left:868px;top:39px;width:28px;height:10px;background:#d8d8d8;border:1px solid #999"></div>
<div class="a" style="left:869px;top:40px;width:7px;height:8px;background:#30b030"></div>
<svg style="left:889px;top:548px" width="8" height="8"><g fill="#b8b8b8"><rect x="6" y="0" width="1" height="1"/><rect x="4" y="2" width="1" height="1"/><rect x="6" y="2" width="1" height="1"/><rect x="2" y="4" width="1" height="1"/><rect x="4" y="4" width="1" height="1"/><rect x="6" y="4" width="1" height="1"/><rect x="0" y="6" width="1" height="1"/><rect x="2" y="6" width="1" height="1"/><rect x="4" y="6" width="1" height="1"/><rect x="6" y="6" width="1" height="1"/></g></svg>
<div class="a" style="left:0px;top:0px;width:1px;height:558px;background:#6a7a8a"></div>
<div class="a" style="left:899px;top:0px;width:1px;height:558px;background:#4a5a6c"></div>
<div class="a" style="left:0px;top:557px;width:900px;height:1px;background:#26485e"></div></body></html>
